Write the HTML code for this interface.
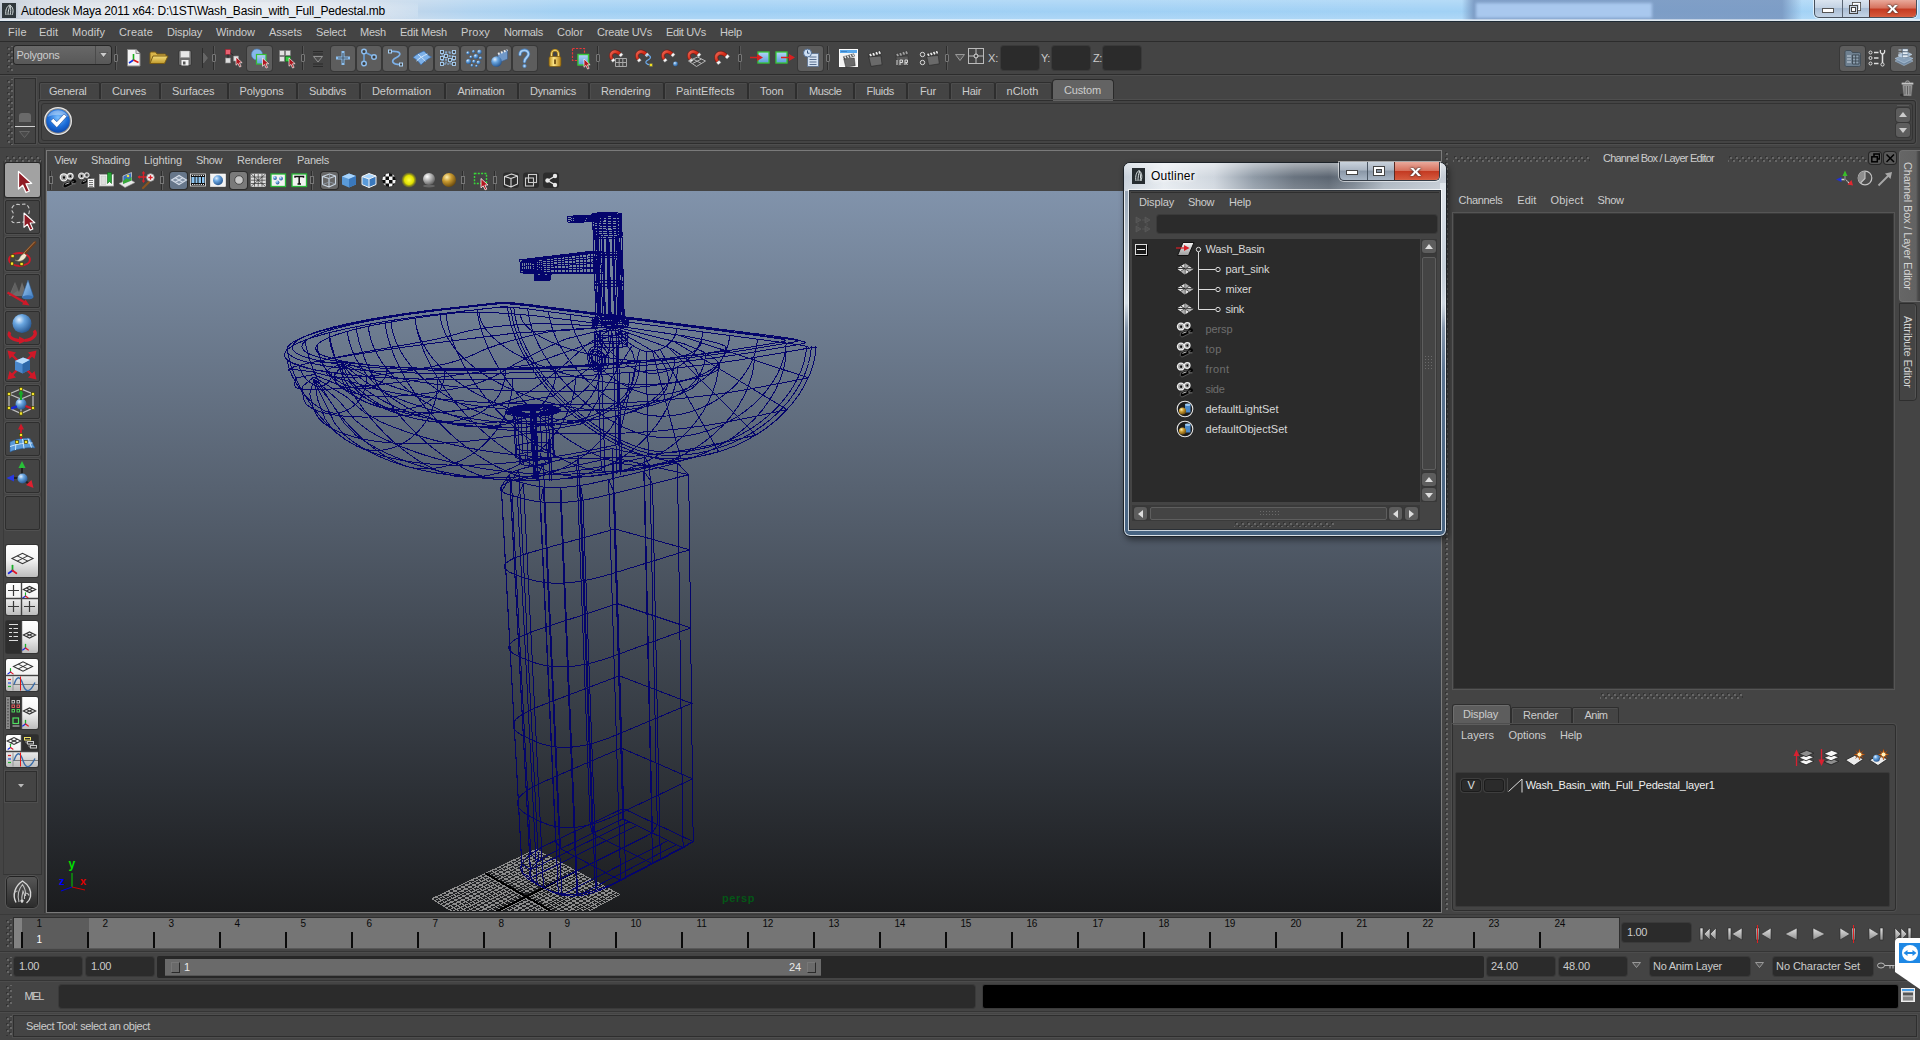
<!DOCTYPE html>
<html><head><meta charset="utf-8"><title>Autodesk Maya 2011</title>
<style>
html,body{margin:0;padding:0;background:#444;}
body{width:1920px;height:1040px;overflow:hidden;position:relative;font-family:"Liberation Sans",sans-serif;font-size:11px;}
#root{position:absolute;left:0;top:0;width:1920px;height:1040px;overflow:hidden;background:#444;}
#root div,#root span.t,#root svg{position:absolute;box-sizing:border-box;}
span.t{white-space:pre;}

.fr{border:1px solid #2e2e2e;box-shadow:0 0 0 1px #525252;}
.fld{background:#2b2b2b;border-radius:3px;box-shadow:0 0 0 1px #3a3a3a;}
.btn{background:#5d5d5d;border-radius:3px;box-shadow:0 0 0 1px #383838;}
.sep{width:2px;background:#2f2f2f;border-right:1px solid #5a5a5a;}
.grip{background-image:linear-gradient(180deg,#666 0 2px,transparent 2px 6px),linear-gradient(180deg,#666 0 2px,transparent 2px 6px),linear-gradient(180deg,#343434 0 2px,transparent 2px 6px),linear-gradient(180deg,#343434 0 2px,transparent 2px 6px);background-size:2px 6px,2px 6px,2px 6px,2px 6px;background-position:1px 2px,4px 5px,0px 1px,3px 4px;background-repeat:repeat-y;}
.griph{background-image:linear-gradient(90deg,#666 0 2px,transparent 2px 6px),linear-gradient(90deg,#666 0 2px,transparent 2px 6px),linear-gradient(90deg,#343434 0 2px,transparent 2px 6px),linear-gradient(90deg,#343434 0 2px,transparent 2px 6px);background-size:6px 2px,6px 2px,6px 2px,6px 2px;background-position:2px 1px,5px 4px,1px 0px,4px 3px;background-repeat:repeat-x;}

</style></head><body><div id="root">
<div style="left:0px;top:0px;width:1920px;height:21px;background:linear-gradient(90deg,#bcc6d2 0px,#ccd4de 40px,#d6dce4 130px,#d8dee6 250px,#d0dae6 330px,#c2d6ea 400px,#b0d3f0 470px,#a2d0f3 560px,#9fcff4 700px,#a1d1f5 1440px,#a4d3f6 1920px);"></div>
<div style="left:0px;top:0px;width:1920px;height:21px;background:linear-gradient(180deg,rgba(255,255,255,.22),rgba(255,255,255,0) 55%,rgba(255,255,255,.18));"></div>
<div style="left:18px;top:2px;width:400px;height:17px;background:radial-gradient(ellipse at center,rgba(255,255,255,.55) 0%,rgba(255,255,255,.35) 50%,rgba(255,255,255,0) 100%);"></div>
<div style="left:1462px;top:0px;width:340px;height:20px;background:linear-gradient(90deg,rgba(110,140,185,.0),rgba(118,148,190,.85) 12px,rgba(118,148,190,.85) 320px,rgba(118,148,190,0));"></div>
<div style="left:1476px;top:3px;width:176px;height:15px;background:#a9c8ee;filter:blur(1.5px);"></div>
<div style="left:0px;top:19px;width:1920px;height:1px;background:rgba(255,255,255,.5);"></div>
<div style="left:0px;top:20px;width:1920px;height:1px;background:#dfe8f0;"></div>
<div style="left:0px;top:21px;width:1920px;height:1px;background:#1e2a34;"></div>
<svg style="left:2px;top:3px;" width="14" height="15" viewBox="0 0 14 15"><rect width="14" height="15" fill="#30383c"/><path d="M4 12C3 7 5 3 8 2c3 2 4 6 2 10M6 12c0-4 1-7 2-9M8 12c1-3 1-6 0-9" stroke="#d8e0e0" stroke-width="1" fill="none"/></svg>
<span class="t" style="left:21px;top:5px;font-size:12px;line-height:12px;color:#000;letter-spacing:-0.192px;">Autodesk Maya 2011 x64: D:\1ST\Wash_Basin_with_Full_Pedestal.mb</span>
<div style="left:1814px;top:0px;width:103px;height:18px;border:1px solid #46505c;border-top:none;border-radius:0 0 5px 5px;background:linear-gradient(180deg,#dbe5f0 0,#c3d2e3 45%,#a9bdd4 50%,#c4d4e6 100%);box-shadow:0 0 0 1px rgba(255,255,255,.6);overflow:hidden;"><div style="left:54px;top:0;width:48px;height:18px;background:linear-gradient(180deg,#e9a99b 0,#d6715d 45%,#c43a22 50%,#d4583c 90%,#e08060 100%);border-left:1px solid #5a2a22;"></div><div style="left:27px;top:0;width:1px;height:18px;background:#5a6674;"></div></div>
<svg style="left:1822px;top:8px;" width="14" height="6" viewBox="0 0 14 6"><rect x="0.5" y="0.5" width="11" height="4" fill="#fff" stroke="#555" stroke-width="1"/></svg>
<svg style="left:1849px;top:2px;" width="14" height="13" viewBox="0 0 14 13"><rect x="3.5" y="0.5" width="8" height="8" fill="none" stroke="#444" stroke-width="1"/><rect x="4.5" y="1.5" width="6" height="6" fill="none" stroke="#fff" stroke-width="1.4"/><rect x="0.5" y="3.5" width="8" height="8" fill="#c8d4e2" stroke="#444" stroke-width="1"/><rect x="2.5" y="5.5" width="4" height="4" fill="#fff" stroke="#444" stroke-width="1"/></svg>
<span class="t" style="left:1887px;top:0px;font-size:15px;line-height:15px;color:#fff;font-weight:bold;text-shadow:0 0 1px #333,0 0 2px #333;transform:scaleX(1.35);transform-origin:left;">x</span>
<div style="left:0px;top:22px;width:1920px;height:20px;background:#444444;"></div>
<div style="left:0px;top:41px;width:1920px;height:1px;background:#2c2c2c;"></div>
<span class="t" style="left:8px;top:27px;font-size:11px;line-height:11px;color:#cccccc;letter-spacing:0.320px;">File</span>
<span class="t" style="left:39px;top:27px;font-size:11px;line-height:11px;color:#cccccc;letter-spacing:0.008px;">Edit</span>
<span class="t" style="left:72px;top:27px;font-size:11px;line-height:11px;color:#cccccc;letter-spacing:0.099px;">Modify</span>
<span class="t" style="left:119px;top:27px;font-size:11px;line-height:11px;color:#cccccc;letter-spacing:0.161px;">Create</span>
<span class="t" style="left:167px;top:27px;font-size:11px;line-height:11px;color:#cccccc;letter-spacing:-0.152px;">Display</span>
<span class="t" style="left:216px;top:27px;font-size:11px;line-height:11px;color:#cccccc;letter-spacing:-0.021px;">Window</span>
<span class="t" style="left:269px;top:27px;font-size:11px;line-height:11px;color:#cccccc;letter-spacing:-0.005px;">Assets</span>
<span class="t" style="left:316px;top:27px;font-size:11px;line-height:11px;color:#cccccc;letter-spacing:-0.099px;">Select</span>
<span class="t" style="left:360px;top:27px;font-size:11px;line-height:11px;color:#cccccc;letter-spacing:-0.227px;">Mesh</span>
<span class="t" style="left:400px;top:27px;font-size:11px;line-height:11px;color:#cccccc;letter-spacing:-0.215px;">Edit Mesh</span>
<span class="t" style="left:461px;top:27px;font-size:11px;line-height:11px;color:#cccccc;letter-spacing:0.175px;">Proxy</span>
<span class="t" style="left:504px;top:27px;font-size:11px;line-height:11px;color:#cccccc;letter-spacing:-0.277px;">Normals</span>
<span class="t" style="left:557px;top:27px;font-size:11px;line-height:11px;color:#cccccc;letter-spacing:-0.056px;">Color</span>
<span class="t" style="left:597px;top:27px;font-size:11px;line-height:11px;color:#cccccc;letter-spacing:-0.188px;">Create UVs</span>
<span class="t" style="left:666px;top:27px;font-size:11px;line-height:11px;color:#cccccc;letter-spacing:-0.352px;">Edit UVs</span>
<span class="t" style="left:720px;top:27px;font-size:11px;line-height:11px;color:#cccccc;letter-spacing:-0.156px;">Help</span>
<div style="left:0px;top:74px;width:1920px;height:1px;background:#2c2c2c;"></div>
<div style="left:0px;top:75px;width:1920px;height:1px;background:#4e4e4e;"></div>
<div class="grip" style="left:7px;top:46px;width:6px;height:26px;"></div>
<div style="left:14px;top:46px;width:97px;height:18px;border-radius:3px;background:linear-gradient(180deg,#686868 0,#585858 100%);box-shadow:0 0 0 1px #262626;"></div>
<div style="left:95px;top:46px;width:1px;height:18px;background:#4a4a4a;"></div>
<span class="t" style="left:16.5px;top:50px;font-size:11px;line-height:11px;color:#cccccc;letter-spacing:-0.285px;">Polygons</span>
<svg style="left:99px;top:52px;" width="9" height="6" viewBox="0 0 9 6"><path d="M0.5 0.5h8l-4 5z" fill="#ccc" stroke="#333" stroke-width=".6"/></svg>
<div style="left:115px;top:46px;width:2px;height:24px;background:#2d2d2d;border-right:1px solid #565656;"></div>
<div style="left:114px;top:54px;width:4px;height:8px;border:1px solid #777;background:#3a3a3a;border-radius:1px;"></div>
<div style="left:213px;top:46px;width:2px;height:24px;background:#2d2d2d;border-right:1px solid #565656;"></div>
<div style="left:212px;top:54px;width:4px;height:8px;border:1px solid #777;background:#3a3a3a;border-radius:1px;"></div>
<div style="left:302px;top:46px;width:2px;height:24px;background:#2d2d2d;border-right:1px solid #565656;"></div>
<div style="left:301px;top:54px;width:4px;height:8px;border:1px solid #777;background:#3a3a3a;border-radius:1px;"></div>
<div style="left:597px;top:46px;width:2px;height:24px;background:#2d2d2d;border-right:1px solid #565656;"></div>
<div style="left:596px;top:54px;width:4px;height:8px;border:1px solid #777;background:#3a3a3a;border-radius:1px;"></div>
<div style="left:739px;top:46px;width:2px;height:24px;background:#2d2d2d;border-right:1px solid #565656;"></div>
<div style="left:738px;top:54px;width:4px;height:8px;border:1px solid #777;background:#3a3a3a;border-radius:1px;"></div>
<div style="left:827px;top:46px;width:2px;height:24px;background:#2d2d2d;border-right:1px solid #565656;"></div>
<div style="left:826px;top:54px;width:4px;height:8px;border:1px solid #777;background:#3a3a3a;border-radius:1px;"></div>
<div style="left:946px;top:46px;width:2px;height:24px;background:#2d2d2d;border-right:1px solid #565656;"></div>
<div style="left:945px;top:54px;width:4px;height:8px;border:1px solid #777;background:#3a3a3a;border-radius:1px;"></div>
<svg width="0" height="0" style="left:0;top:0;"><defs>
<radialGradient id="gBall" cx=".35" cy=".3" r=".8"><stop offset="0" stop-color="#e2f0ff"/><stop offset=".35" stop-color="#6aa6e0"/><stop offset="1" stop-color="#1c4a84"/></radialGradient>
<radialGradient id="gGrayBall" cx=".35" cy=".3" r=".8"><stop offset="0" stop-color="#ffffff"/><stop offset=".4" stop-color="#b8b8b8"/><stop offset="1" stop-color="#505050"/></radialGradient>
<radialGradient id="gGoldBall" cx=".35" cy=".3" r=".8"><stop offset="0" stop-color="#fff0b0"/><stop offset=".4" stop-color="#c89a30"/><stop offset="1" stop-color="#5a3c08"/></radialGradient>
<radialGradient id="gYellowBall" cx=".5" cy=".5" r=".5"><stop offset="0" stop-color="#ffff40"/><stop offset=".6" stop-color="#e0e000"/><stop offset="1" stop-color="#8a8a10" stop-opacity=".3"/></radialGradient>
<linearGradient id="gRed" x1="0" y1="0" x2="1" y2="1"><stop offset="0" stop-color="#f47a68"/><stop offset=".5" stop-color="#d8301c"/><stop offset="1" stop-color="#9a140a"/></linearGradient>
<linearGradient id="gGold" x1="0" y1="0" x2="1" y2="0"><stop offset="0" stop-color="#b88a18"/><stop offset=".4" stop-color="#ffe88a"/><stop offset="1" stop-color="#b07c10"/></linearGradient>
<linearGradient id="gFolder" x1="0" y1="0" x2="0" y2="1"><stop offset="0" stop-color="#f4dc7a"/><stop offset="1" stop-color="#c09a2c"/></linearGradient>
<linearGradient id="gGray" x1="0" y1="0" x2="0" y2="1"><stop offset="0" stop-color="#f6f6f6"/><stop offset="1" stop-color="#9c9c9c"/></linearGradient>
<linearGradient id="gBlueSq" x1="0" y1="0" x2="0" y2="1"><stop offset="0" stop-color="#b4d6f6"/><stop offset="1" stop-color="#5c9cdc"/></linearGradient>
<linearGradient id="gBlueCube" x1="0" y1="0" x2="1" y2="1"><stop offset="0" stop-color="#a8d0f6"/><stop offset="1" stop-color="#3e7cc0"/></linearGradient>
<linearGradient id="gPlay" x1="0" y1="0" x2="0" y2="1"><stop offset="0" stop-color="#e8e8e8"/><stop offset="1" stop-color="#8a8a8a"/></linearGradient>
<radialGradient id="gCheck" cx=".5" cy=".35" r=".75"><stop offset="0" stop-color="#7cc0ff"/><stop offset=".55" stop-color="#1a6cd8"/><stop offset="1" stop-color="#0a3a9a"/></radialGradient>
</defs></svg>
<svg style="left:126px;top:48px;overflow:visible;" width="16" height="20" viewBox="0 0 16 20"><path d="M1.500 1.500h8.500l4 4v12.500h-12.500z" fill="#f4f4f4" stroke="#8a8a8a"/><path d="M10 1.500v4h4" fill="#ddd" stroke="#8a8a8a"/><path d="M7.500 12V6" stroke="#18b018" stroke-width="1.600"/><path d="M7.500 12l-4.500 3" stroke="#1030e0" stroke-width="1.600"/><path d="M7.500 12l5 2.500" stroke="#e01818" stroke-width="1.600"/></svg>
<svg style="left:149px;top:49px;overflow:visible;" width="20" height="16" viewBox="0 0 20 16"><path d="M1 14.500V4.500c0-1 .5-1.500 1.500-1.500h4l1.500 2h7.500c1 0 1.500.5 1.500 1.500V8" fill="#d8b44a" stroke="#7a5c14"/><path d="M1 14.500l3-7.500h15l-3.500 7.500z" fill="url(#gFolder)" stroke="#7a5c14" stroke-linejoin="round"/></svg>
<svg style="left:177px;top:49px;overflow:visible;" width="16" height="18" viewBox="0 0 16 18"><rect x="1.500" y="1.500" width="13" height="15" rx="1.500" fill="#6e6e6e" stroke="#3a3a3a"/><rect x="3.500" y="2" width="9" height="6.500" fill="#e8e8e8" stroke="#999" stroke-width=".5"/><rect x="4.500" y="11" width="7" height="5.500" fill="#f2f2f2"/><rect x="6" y="12.500" width="2.500" height="3" fill="#555"/></svg>
<svg style="left:202px;top:48px;" width="6" height="20" viewBox="0 0 6 20"><path d="M0.5 0v20" stroke="#2d2d2d"/><path d="M1.5 5l4 5-4 5z" fill="#666" stroke="#777" stroke-width=".5"/></svg>
<svg style="left:224px;top:48px;overflow:visible;" width="20" height="20" viewBox="0 0 20 20"><rect x="1.500" y="1.500" width="5" height="5" fill="#e86070" stroke="#a02030" stroke-width=".6"/><rect x="1.500" y="10" width="5" height="5" fill="#ddd" stroke="#888" stroke-width=".6"/><path d="M4 6.500v3.500M6.500 5l5 4" stroke="#222" stroke-width=".8" fill="none"/><rect x="9.500" y="8" width="5" height="5" fill="#ddd" stroke="#888" stroke-width=".6"/><g transform="translate(12,9) scale(0.75)"><path d="M0 0l0 11 2.600-2.400 2.200 4.800 2-.9-2.200-4.700 3.600-.2z" fill="#b01820" stroke="#fff" stroke-width=".9" stroke-linejoin="round"/></g></svg>
<div class="btn" style="left:247px;top:46px;width:25px;height:25px;"></div>
<svg style="left:250px;top:48px;overflow:visible;" width="20" height="20" viewBox="0 0 20 20"><circle cx="7" cy="6.500" r="5.500" fill="#86b8ec" stroke="#4a80c0" stroke-width=".6"/><rect x="6.500" y="6.500" width="9.500" height="9.500" fill="url(#gBlueSq)" stroke="#38c038" stroke-width="1.200"/><g transform="translate(12.5,10) scale(0.75)"><path d="M0 0l0 11 2.600-2.400 2.200 4.800 2-.9-2.200-4.700 3.600-.2z" fill="#b01820" stroke="#fff" stroke-width=".9" stroke-linejoin="round"/></g></svg>
<svg style="left:278px;top:49px;overflow:visible;" width="20" height="20" viewBox="0 0 20 20"><g fill="#e0e0e0" stroke="#777" stroke-width=".6"><rect x="1.500" y="1.500" width="5" height="5"/><rect x="7.500" y="1.500" width="5" height="5"/><rect x="1.500" y="7.500" width="5" height="5"/></g><rect x="7.500" y="7.500" width="5" height="5" fill="#30c840" stroke="#187020" stroke-width=".6"/><g transform="translate(11,9) scale(0.75)"><path d="M0 0l0 11 2.600-2.400 2.200 4.800 2-.9-2.200-4.700 3.600-.2z" fill="#b01820" stroke="#fff" stroke-width=".9" stroke-linejoin="round"/></g></svg>
<svg style="left:312px;top:50px;overflow:visible;" width="12" height="18" viewBox="0 0 12 18"><path d="M1 1.500h10M1 4h10M1 14h10M1 16.500h10" stroke="#2a2a2a" stroke-width="1"/><path d="M1.500 6.500h9l-4.500 5.500z" fill="#4a4a4a" stroke="#9a9a9a" stroke-width=".9"/></svg>
<div class="btn" style="left:331px;top:46px;width:24px;height:25px;"></div>
<div class="btn" style="left:357px;top:46px;width:24px;height:25px;"></div>
<div class="btn" style="left:383px;top:46px;width:24px;height:25px;"></div>
<div class="btn" style="left:409px;top:46px;width:24px;height:25px;"></div>
<div class="btn" style="left:435px;top:46px;width:24px;height:25px;"></div>
<div class="btn" style="left:461px;top:46px;width:24px;height:25px;"></div>
<div class="btn" style="left:487px;top:46px;width:24px;height:25px;"></div>
<div class="btn" style="left:513px;top:46px;width:24px;height:25px;"></div>
<svg style="left:336px;top:51px;overflow:visible;" width="14" height="14" viewBox="0 0 14 14"><path d="M7 1.500v11M1.500 7h11" stroke="#8cc0f0" stroke-width="3" stroke-linecap="square"/><path d="M7 2v10M2 7h10" stroke="#4a5a6a" stroke-width="1.200"/></svg>
<svg style="left:360px;top:48px;overflow:visible;" width="18" height="20" viewBox="0 0 18 20"><path d="M4 4.500v10M4.500 4l9 4.500" stroke="#6aa0d8" stroke-width="1.600" fill="none"/><g fill="#3c3c3c" stroke="#8cbcec" stroke-width="1.500"><circle cx="4" cy="3.500" r="2.300"/><circle cx="4" cy="15.500" r="2.300"/><circle cx="14" cy="9" r="2.300"/></g></svg>
<svg style="left:386px;top:48px;overflow:visible;" width="18" height="20" viewBox="0 0 18 20"><path d="M4.500 3.500c10-1 12 3 6 6s-5 7 4 7" stroke="#7cb0e8" stroke-width="1.700" fill="none"/><g fill="#444" stroke="#a8d0f4" stroke-width="1"><rect x="2.500" y="2" width="3" height="3"/><rect x="13.500" y="15" width="3" height="3"/></g></svg>
<svg style="left:412px;top:50px;overflow:visible;" width="20" height="16" viewBox="0 0 20 16"><path d="M1 7.500c3-3 7-5 11-6.500 2 2.500 5 5 7.500 6-3 1.500-8 5-10.500 8-2-3-5-6-8-7.500z" fill="#7cb0e8" stroke="#3a6ca8" stroke-width=".7"/><path d="M6 4.200c2.500 2 5.500 5 7.500 7M4.500 11c3-3 7-5.500 11-7" stroke="#d0e6fc" stroke-width="1" fill="none"/></svg>
<svg style="left:439px;top:49px;overflow:visible;" width="18" height="18" viewBox="0 0 18 18"><g stroke="#8cbcec" stroke-width="1" fill="none"><path d="M3 3h12v12H3zM7 3v12M11 3v12M3 7h12M3 11h12" stroke-dasharray="2 1.200"/></g><g fill="#444" stroke="#a8d0f4" stroke-width=".9"><rect x="1.500" y="1.500" width="3" height="3"/><rect x="13.500" y="1.500" width="3" height="3"/><rect x="1.500" y="13.500" width="3" height="3"/><rect x="13.500" y="13.500" width="3" height="3"/><rect x="5.500" y="5.500" width="3" height="3"/><rect x="9.500" y="9.500" width="3" height="3"/><rect x="1.500" y="7.500" width="3" height="3"/><rect x="13.500" y="7.500" width="3" height="3"/></g></svg>
<svg style="left:464px;top:48px;overflow:visible;" width="20" height="20" viewBox="0 0 20 20"><g fill="url(#gBall)"><circle cx="4" cy="5" r="1.800"/><circle cx="9.500" cy="3.500" r="1.500"/><circle cx="15.500" cy="4" r="2.300"/><circle cx="7" cy="9" r="1.600"/><circle cx="12" cy="8.500" r="2.500"/><circle cx="16.500" cy="10" r="1.600"/><circle cx="4.500" cy="13.500" r="2.600"/><circle cx="10" cy="13.500" r="1.800"/><circle cx="14.500" cy="14.500" r="2"/><circle cx="8" cy="17.500" r="1.400"/><circle cx="12.500" cy="18" r="1.300"/></g></svg>
<svg style="left:490px;top:48px;overflow:visible;" width="20" height="20" viewBox="0 0 20 20"><path d="M8 6l9.500-4v9l-9.500 4z" fill="#7098c8" stroke="#3c5c8c" stroke-width=".6"/><path d="M8 6l9.500-4" stroke="#e8e8e8" stroke-width="2.200" stroke-dasharray="1.800 1.400"/><circle cx="6.500" cy="13.500" r="5.300" fill="url(#gBall)"/></svg>
<svg style="left:518px;top:49px;overflow:visible;" width="12" height="20" viewBox="0 0 12 20"><path d="M2 5.500c0-5.500 8.500-5.500 8.500-.5 0 3.500-4 3.500-4 7.500" stroke="#4a7eb8" stroke-width="3.400" fill="none" stroke-linecap="round"/><path d="M2 5.500c0-5.500 8.500-5.500 8.500-.5 0 3.500-4 3.500-4 7.500" stroke="#a8d0f6" stroke-width="1.800" fill="none" stroke-linecap="round"/><circle cx="6.500" cy="17" r="1.700" fill="#a8d0f6" stroke="#4a7eb8" stroke-width=".8"/></svg>
<svg style="left:548px;top:48px;overflow:visible;" width="14" height="20" viewBox="0 0 14 20"><path d="M3.500 9V6c0-5 7-5 7 0v3" stroke="#b88c1c" stroke-width="2.600" fill="none"/><path d="M3.500 9V6c0-5 7-5 7 0v3" stroke="#f4dc80" stroke-width="1" fill="none"/><rect x="1" y="8.500" width="12" height="10" rx="1.500" fill="url(#gGold)" stroke="#7a5810" stroke-width=".7"/><path d="M7 12v3.500" stroke="#5a3c08" stroke-width="1.600" stroke-linecap="round"/></svg>
<svg style="left:571px;top:47px;overflow:visible;" width="20" height="22" viewBox="0 0 20 22"><rect x="1.500" y="1.500" width="12" height="12" fill="none" stroke="#e83838" stroke-width="1.200" stroke-dasharray="2.200 1.300"/><rect x="7" y="7.500" width="10.500" height="10.500" fill="url(#gBlueSq)" stroke="#38c838" stroke-width="1.400"/><g transform="translate(13,12) scale(0.75)"><path d="M0 0l0 11 2.600-2.400 2.200 4.800 2-.9-2.200-4.700 3.600-.2z" fill="#b01820" stroke="#fff" stroke-width=".9" stroke-linejoin="round"/></g></svg>
<svg style="left:608px;top:48px;overflow:visible;" width="20" height="20" viewBox="0 0 20 20"><g transform="rotate(-8 8 8)"><path d="M2.500 11.500C-1.500 4 7-2.500 13.500 5.500l-2.600 2.200C7 3 2.500 6 5.300 10z" fill="url(#gRed)" stroke="#6a100a" stroke-width=".5"/><path d="M10.900 7.700l2.600-2.200 1.700 2-2.600 2.200zM5.300 10l-2.800 1.500 1.400 2.300 2.800-1.600z" fill="#f8f8f8" stroke="#888" stroke-width=".4"/></g><path d="M7.500 10.500h11v8h-11zM11.200 10.500v8M14.800 10.500v8M7.500 14.500h11" stroke="#a8a8a8" stroke-width="1" fill="none"/></svg>
<svg style="left:634px;top:48px;overflow:visible;" width="20" height="20" viewBox="0 0 20 20"><g transform="rotate(-8 8 8)"><path d="M2.500 11.500C-1.500 4 7-2.500 13.500 5.500l-2.600 2.200C7 3 2.500 6 5.300 10z" fill="url(#gRed)" stroke="#6a100a" stroke-width=".5"/><path d="M10.900 7.700l2.600-2.200 1.700 2-2.600 2.200zM5.300 10l-2.800 1.500 1.400 2.300 2.800-1.600z" fill="#f8f8f8" stroke="#888" stroke-width=".4"/></g><path d="M12 7c5 0 6 3 2 5s-2 4.500 3 5" stroke="#6aa8e8" stroke-width="1.200" fill="none"/><rect x="15.500" y="15.500" width="3" height="3" fill="#f0e020" stroke="#555" stroke-width=".5"/></svg>
<svg style="left:660px;top:48px;overflow:visible;" width="20" height="20" viewBox="0 0 20 20"><g transform="rotate(-8 8 8)"><path d="M2.500 11.500C-1.500 4 7-2.500 13.500 5.500l-2.600 2.200C7 3 2.500 6 5.300 10z" fill="url(#gRed)" stroke="#6a100a" stroke-width=".5"/><path d="M10.900 7.700l2.600-2.200 1.700 2-2.600 2.200zM5.300 10l-2.800 1.500 1.400 2.300 2.800-1.600z" fill="#f8f8f8" stroke="#888" stroke-width=".4"/></g><circle cx="15.500" cy="16" r="2.400" fill="url(#gBall)"/></svg>
<svg style="left:686px;top:48px;overflow:visible;" width="20" height="20" viewBox="0 0 20 20"><g transform="rotate(-8 8 8)"><path d="M2.500 11.500C-1.500 4 7-2.500 13.500 5.500l-2.600 2.200C7 3 2.500 6 5.300 10z" fill="url(#gRed)" stroke="#6a100a" stroke-width=".5"/><path d="M10.900 7.700l2.600-2.200 1.700 2-2.600 2.200zM5.300 10l-2.800 1.500 1.400 2.300 2.800-1.600z" fill="#f8f8f8" stroke="#888" stroke-width=".4"/></g><path d="M2.500 13l9-4 8 4-9 5.500zM7 11l8.500 4.500M6.500 15.500l9-4.500" stroke="#b4b4b4" stroke-width="1" fill="none"/></svg>
<svg style="left:712px;top:48px;overflow:visible;" width="20" height="20" viewBox="0 0 20 20"><g transform="translate(1,1) scale(1.100)"><g transform="rotate(-8 8 8)"><path d="M2.500 11.500C-1.500 4 7-2.500 13.500 5.500l-2.600 2.200C7 3 2.500 6 5.300 10z" fill="url(#gRed)" stroke="#6a100a" stroke-width=".5"/><path d="M10.900 7.700l2.600-2.200 1.700 2-2.600 2.200zM5.300 10l-2.800 1.500 1.400 2.300 2.800-1.600z" fill="#f8f8f8" stroke="#888" stroke-width=".4"/></g></g></svg>
<svg style="left:750px;top:51px;overflow:visible;" width="20" height="14" viewBox="0 0 20 14"><rect x="8" y="1" width="11" height="11" fill="url(#gBlueSq)" stroke="#38c838" stroke-width="1.300"/><path d="M0 6.500h8" stroke="#d82020" stroke-width="1.500"/><path d="M7 3l6 3.500-6 3.500z" fill="#d82020"/></svg>
<svg style="left:775px;top:51px;overflow:visible;" width="21" height="14" viewBox="0 0 21 14"><rect x="1" y="1" width="11" height="11" fill="url(#gBlueSq)" stroke="#38c838" stroke-width="1.300"/><path d="M6 6.500h9" stroke="#d82020" stroke-width="1.500"/><path d="M14 3l6 3.500-6 3.500z" fill="#d82020"/></svg>
<div class="btn" style="left:798px;top:46px;width:25px;height:25px;"></div>
<svg style="left:802px;top:48px;overflow:visible;" width="18" height="20" viewBox="0 0 18 20"><rect x="5.500" y="5.500" width="11" height="13" fill="#d4e2f2" stroke="#5a7090" stroke-width=".8"/><path d="M7.500 9h7M7.500 11.500h7M7.500 14h7M7.500 16.500h7" stroke="#5a7090" stroke-width="1"/><circle cx="5.500" cy="5" r="4" fill="#cfe0f4" stroke="#4a6890" stroke-width=".9"/><path d="M5.500 2.500v2.700h2" stroke="#2a4870" stroke-width=".9" fill="none"/></svg>
<svg style="left:839px;top:49px;overflow:visible;" width="19" height="18" viewBox="0 0 19 18"><rect x=".5" y=".5" width="18" height="17" fill="#f4f4f4" stroke="#fff"/><rect x="1" y="1" width="17" height="3" fill="#58a8ec"/><path d="M2.500 2.500h1M4.500 2.500h1M6.500 2.500h1" stroke="#1a4a8a" stroke-width=".8"/><g transform="translate(1.500,.5) scale(.95)"><path d="M3 7.500l11-3 .8 2.500-11 3z" fill="#555" stroke="#222" stroke-width=".4"/><path d="M4.500 7.200l1.200 2.300M7.300 6.400l1.200 2.300M10.100 5.600l1.200 2.300M12.800 4.900l1 2.300" stroke="#f0f0f0" stroke-width="1.400"/><path d="M3.500 10l11-1 1 8-10 1.500z" fill="#6a6a6a" stroke="#222" stroke-width=".5"/></g></svg>
<svg style="left:866px;top:48px;overflow:visible;" width="18" height="20" viewBox="0 0 18 20"><g transform="translate(-1,-2) scale(1.100)"><path d="M3 7.500l11-3 .8 2.500-11 3z" fill="#555" stroke="#222" stroke-width=".4"/><path d="M4.500 7.200l1.200 2.300M7.300 6.400l1.200 2.300M10.100 5.600l1.200 2.300M12.800 4.900l1 2.300" stroke="#f0f0f0" stroke-width="1.400"/><path d="M3.500 10l11-1 1 8-10 1.500z" fill="#6a6a6a" stroke="#222" stroke-width=".5"/></g></svg>
<svg style="left:893px;top:48px;overflow:visible;" width="18" height="20" viewBox="0 0 18 20"><g opacity=".55" transform="translate(-1,-2) scale(1.100)"><path d="M3 7.500l11-3 .8 2.500-11 3z" fill="#555" stroke="#222" stroke-width=".4"/><path d="M4.500 7.200l1.200 2.300M7.300 6.400l1.200 2.300M10.100 5.600l1.200 2.300M12.800 4.900l1 2.300" stroke="#f0f0f0" stroke-width="1.400"/><path d="M3.500 10l11-1 1 8-10 1.500z" fill="#6a6a6a" stroke="#222" stroke-width=".5"/></g><path d="M4 17v-5M7 17v-5h2.500v2.500h-2.500M12 17v-5h2.500v2.500h-2l2 2.500" stroke="#d8d8d8" stroke-width="1" fill="none"/></svg>
<svg style="left:919px;top:48px;overflow:visible;" width="22" height="20" viewBox="0 0 22 20"><circle cx="3.500" cy="6.500" r="2.200" fill="#444" stroke="#ddd" stroke-width="1"/><circle cx="3.500" cy="14.500" r="2.200" fill="#444" stroke="#ddd" stroke-width="1"/><g transform="translate(4,-2) scale(1.050)"><path d="M3 7.500l11-3 .8 2.500-11 3z" fill="#555" stroke="#222" stroke-width=".4"/><path d="M4.500 7.200l1.200 2.300M7.300 6.400l1.200 2.300M10.100 5.600l1.200 2.300M12.800 4.900l1 2.300" stroke="#f0f0f0" stroke-width="1.400"/><path d="M3.500 10l11-1 1 8-10 1.500z" fill="#6a6a6a" stroke="#222" stroke-width=".5"/></g></svg>
<svg style="left:955px;top:54px;" width="11" height="8" viewBox="0 0 11 8"><path d="M0.5 0.5h9l-4.5 6z" fill="#555" stroke="#999" stroke-width="1"/></svg>
<svg style="left:968px;top:48px;" width="16" height="17" viewBox="0 0 16 17"><rect x="0.5" y="0.5" width="15" height="15" fill="none" stroke="#bbb"/><path d="M8 0v16M0 8h16" stroke="#bbb"/><circle cx="8" cy="8" r="2" fill="#444" stroke="#ddd"/></svg>
<span class="t" style="left:988px;top:53px;font-size:11px;line-height:11px;color:#cccccc;letter-spacing:-0.203px;">X:</span>
<span class="t" style="left:1041px;top:53px;font-size:11px;line-height:11px;color:#cccccc;letter-spacing:-0.398px;">Y:</span>
<span class="t" style="left:1093px;top:53px;font-size:11px;line-height:11px;color:#cccccc;letter-spacing:-0.391px;">Z:</span>
<div class="fld" style="left:1001px;top:46px;width:38px;height:24px;"></div>
<div class="fld" style="left:1052px;top:46px;width:38px;height:24px;"></div>
<div class="fld" style="left:1103px;top:46px;width:38px;height:24px;"></div>
<div class="btn" style="left:1840px;top:46px;width:25px;height:25px;"></div>
<svg style="left:1844px;top:49px;overflow:visible;" width="17" height="18" viewBox="0 0 17 18"><path d="M1 3.500c0-1.500.5-2 2-2h4l1.500 2h6c1.500 0 2 .5 2 2v10c0 1.500-.5 2-2 2h-11.500c-1.500 0-2-.5-2-2z" fill="#6e8090" stroke="#3a4650" stroke-width=".8"/><path d="M3 7h4M3 10h4M3 13h4" stroke="#c8d4e0" stroke-width="1"/><path d="M8.500 6h6.500v9h-6.500zM8.500 9h6.500M8.500 12h6.500M11.700 6v9" stroke="#3a4650" stroke-width=".9" fill="#8ea0b0"/></svg>
<svg style="left:1868px;top:49px;overflow:visible;" width="18" height="18" viewBox="0 0 18 18"><g fill="#444" stroke="#e0e0e0" stroke-width="1"><circle cx="2.500" cy="3.500" r="1.500"/><circle cx="2.500" cy="9" r="1.500"/><circle cx="2.500" cy="14.500" r="1.500"/></g><path d="M6 3.500h4.500M6 9h4.500M6 14.500h4.500" stroke="#e0e0e0" stroke-width="1.300"/><path d="M14.500 5v9" stroke="#e0e0e0" stroke-width="1.500"/><path d="M12.500 1c-.5 2 0 3.500 2 4 2-.5 2.500-2 2-4" stroke="#e0e0e0" stroke-width="1.300" fill="none"/><circle cx="14.500" cy="15.500" r="1.600" fill="#444" stroke="#e0e0e0" stroke-width="1"/></svg>
<div class="btn" style="left:1891px;top:46px;width:25px;height:25px;"></div>
<svg style="left:1894px;top:48px;overflow:visible;" width="20" height="20" viewBox="0 0 20 20"><path d="M1 13l9-4 9 4-9 4.500z" fill="#7088a0" stroke="#a8bcd0" stroke-width=".6"/><path d="M1 10.500l9-4 9 4-9 4.500z" fill="#88a0b8" stroke="#b8cce0" stroke-width=".6"/><path d="M4 7l8-3.500 6 3-8 3.500z" fill="#a8c0d8" stroke="#c8d8e8" stroke-width=".6"/><g fill="#e4ecf4" stroke="#5a7088" stroke-width=".5"><rect x="8.500" y="1" width="5.500" height="2.300"/><rect x="8.500" y="4" width="5.500" height="2.300"/><rect x="8.500" y="7" width="5.500" height="2.300"/></g><path d="M4.500 2h3M4.500 5h3M4.500 8h3" stroke="#c8d8e8" stroke-width="1"/></svg>
<div class="grip" style="left:7px;top:79px;width:6px;height:66px;"></div>
<div style="left:14px;top:78px;width:22px;height:66px;border:1px solid #2e2e2e;box-shadow:0 0 0 1px #4e4e4e;"></div>
<div style="left:19px;top:113px;width:12px;height:9px;background:#6a6a6a;border-radius:3px 3px 0 0;"></div>
<div style="left:15px;top:126px;width:20px;height:1px;background:#cfcfcf;"></div>
<svg style="left:19px;top:131px;" width="12" height="8" viewBox="0 0 12 8"><path d="M0.5 0.5h10l-5 6z" fill="#4a4a4a" stroke="#666" stroke-width="1"/></svg>
<div style="left:39px;top:82px;width:61px;height:18px;border:1px solid #2e2e2e;border-bottom:none;border-radius:2px 2px 0 0;background:#444;box-shadow:inset 1px 1px 0 #4d4d4d;"></div>
<span class="t" style="left:49px;top:86px;font-size:11px;line-height:11px;color:#cccccc;letter-spacing:-0.237px;">General</span>
<div style="left:100px;top:82px;width:60px;height:18px;border:1px solid #2e2e2e;border-bottom:none;border-radius:2px 2px 0 0;background:#444;box-shadow:inset 1px 1px 0 #4d4d4d;"></div>
<span class="t" style="left:112px;top:86px;font-size:11px;line-height:11px;color:#cccccc;letter-spacing:-0.141px;">Curves</span>
<div style="left:160px;top:82px;width:68px;height:18px;border:1px solid #2e2e2e;border-bottom:none;border-radius:2px 2px 0 0;background:#444;box-shadow:inset 1px 1px 0 #4d4d4d;"></div>
<span class="t" style="left:172px;top:86px;font-size:11px;line-height:11px;color:#cccccc;letter-spacing:-0.117px;">Surfaces</span>
<div style="left:228px;top:82px;width:69px;height:18px;border:1px solid #2e2e2e;border-bottom:none;border-radius:2px 2px 0 0;background:#444;box-shadow:inset 1px 1px 0 #4d4d4d;"></div>
<span class="t" style="left:239.5px;top:86px;font-size:11px;line-height:11px;color:#cccccc;letter-spacing:-0.160px;">Polygons</span>
<div style="left:297px;top:82px;width:63px;height:18px;border:1px solid #2e2e2e;border-bottom:none;border-radius:2px 2px 0 0;background:#444;box-shadow:inset 1px 1px 0 #4d4d4d;"></div>
<span class="t" style="left:309px;top:86px;font-size:11px;line-height:11px;color:#cccccc;letter-spacing:-0.308px;">Subdivs</span>
<div style="left:360px;top:82px;width:85px;height:18px;border:1px solid #2e2e2e;border-bottom:none;border-radius:2px 2px 0 0;background:#444;box-shadow:inset 1px 1px 0 #4d4d4d;"></div>
<span class="t" style="left:372px;top:86px;font-size:11px;line-height:11px;color:#cccccc;letter-spacing:-0.085px;">Deformation</span>
<div style="left:445px;top:82px;width:73px;height:18px;border:1px solid #2e2e2e;border-bottom:none;border-radius:2px 2px 0 0;background:#444;box-shadow:inset 1px 1px 0 #4d4d4d;"></div>
<span class="t" style="left:457.5px;top:86px;font-size:11px;line-height:11px;color:#cccccc;letter-spacing:-0.215px;">Animation</span>
<div style="left:518px;top:82px;width:71px;height:18px;border:1px solid #2e2e2e;border-bottom:none;border-radius:2px 2px 0 0;background:#444;box-shadow:inset 1px 1px 0 #4d4d4d;"></div>
<span class="t" style="left:530px;top:86px;font-size:11px;line-height:11px;color:#cccccc;letter-spacing:-0.285px;">Dynamics</span>
<div style="left:589px;top:82px;width:75px;height:18px;border:1px solid #2e2e2e;border-bottom:none;border-radius:2px 2px 0 0;background:#444;box-shadow:inset 1px 1px 0 #4d4d4d;"></div>
<span class="t" style="left:601px;top:86px;font-size:11px;line-height:11px;color:#cccccc;letter-spacing:-0.142px;">Rendering</span>
<div style="left:664px;top:82px;width:84px;height:18px;border:1px solid #2e2e2e;border-bottom:none;border-radius:2px 2px 0 0;background:#444;box-shadow:inset 1px 1px 0 #4d4d4d;"></div>
<span class="t" style="left:676px;top:86px;font-size:11px;line-height:11px;color:#cccccc;letter-spacing:-0.004px;">PaintEffects</span>
<div style="left:748px;top:82px;width:48px;height:18px;border:1px solid #2e2e2e;border-bottom:none;border-radius:2px 2px 0 0;background:#444;box-shadow:inset 1px 1px 0 #4d4d4d;"></div>
<span class="t" style="left:760px;top:86px;font-size:11px;line-height:11px;color:#cccccc;letter-spacing:-0.094px;">Toon</span>
<div style="left:796px;top:82px;width:58px;height:18px;border:1px solid #2e2e2e;border-bottom:none;border-radius:2px 2px 0 0;background:#444;box-shadow:inset 1px 1px 0 #4d4d4d;"></div>
<span class="t" style="left:809px;top:86px;font-size:11px;line-height:11px;color:#cccccc;letter-spacing:-0.391px;">Muscle</span>
<div style="left:854px;top:82px;width:53px;height:18px;border:1px solid #2e2e2e;border-bottom:none;border-radius:2px 2px 0 0;background:#444;box-shadow:inset 1px 1px 0 #4d4d4d;"></div>
<span class="t" style="left:866.5px;top:86px;font-size:11px;line-height:11px;color:#cccccc;letter-spacing:-0.307px;">Fluids</span>
<div style="left:907px;top:82px;width:43px;height:18px;border:1px solid #2e2e2e;border-bottom:none;border-radius:2px 2px 0 0;background:#444;box-shadow:inset 1px 1px 0 #4d4d4d;"></div>
<span class="t" style="left:920px;top:86px;font-size:11px;line-height:11px;color:#cccccc;letter-spacing:-0.167px;">Fur</span>
<div style="left:950px;top:82px;width:45px;height:18px;border:1px solid #2e2e2e;border-bottom:none;border-radius:2px 2px 0 0;background:#444;box-shadow:inset 1px 1px 0 #4d4d4d;"></div>
<span class="t" style="left:962px;top:86px;font-size:11px;line-height:11px;color:#cccccc;letter-spacing:-0.289px;">Hair</span>
<div style="left:995px;top:82px;width:57px;height:18px;border:1px solid #2e2e2e;border-bottom:none;border-radius:2px 2px 0 0;background:#444;box-shadow:inset 1px 1px 0 #4d4d4d;"></div>
<span class="t" style="left:1006.5px;top:86px;font-size:11px;line-height:11px;color:#cccccc;letter-spacing:0.031px;">nCloth</span>
<div style="left:1052px;top:79px;width:62px;height:22px;border:1px solid #2a2a2a;border-bottom:none;border-radius:4px 4px 0 0;background:#636363;"></div>
<span class="t" style="left:1064px;top:85px;font-size:11px;line-height:11px;color:#cccccc;letter-spacing:-0.151px;">Custom</span>
<div style="left:38px;top:100px;width:1878px;height:44px;border:1px solid #2e2e2e;border-radius:3px;box-shadow:0 0 0 1px #4e4e4e;"></div>
<div style="left:41px;top:103px;width:1872px;height:38px;border:1px solid #333;border-radius:3px;"></div>
<div style="left:1053px;top:100px;width:60px;height:1px;background:#636363;"></div>
<svg style="left:43px;top:106px;overflow:visible;" width="30" height="30" viewBox="0 0 30 30"><circle cx="15" cy="15.500" r="14.500" fill="#2a2a2a" opacity=".5"/><circle cx="15" cy="15" r="14" fill="#e8e8e8"/><circle cx="15" cy="15" r="12.800" fill="#8a8a8a"/><circle cx="15" cy="15" r="11.800" fill="url(#gCheck)"/><path d="M4.500 11a11.500 11.500 0 0 1 21 0c-6-3-15-3-21 0z" fill="#fff" opacity=".35"/><path d="M7.500 15l2.800-2.600 3.500 3.400 7.200-7.800 2.800 2.600-10 11z" fill="#fff" stroke="#0a3a8a" stroke-width=".5"/></svg>
<svg style="left:1900px;top:80px;overflow:visible;" width="14" height="17" viewBox="0 0 14 17"><ellipse cx="5" cy="15" rx="5" ry="1.800" fill="#222" opacity=".6"/><path d="M2.500 4.500h10l-1 11.500h-8z" fill="#9a9a9a" stroke="#555" stroke-width=".6"/><path d="M5 6v8.500M7.500 6v8.500M10 6v8.500" stroke="#5a5a5a" stroke-width=".9"/><rect x="1.500" y="2.500" width="12" height="2.200" rx="1" fill="#c4c4c4" stroke="#666" stroke-width=".5"/><path d="M5.500 2.500c0-2 4-2 4 0" stroke="#bbb" fill="none" stroke-width="1"/></svg>
<div class="btn" style="left:1896px;top:108px;width:14px;height:14px;"></div>
<div class="btn" style="left:1896px;top:123px;width:14px;height:14px;"></div>
<svg style="left:1899px;top:112px;" width="8" height="6" viewBox="0 0 8 6"><path d="M0 5h8l-4-5z" fill="#ccc"/></svg>
<svg style="left:1899px;top:128px;" width="8" height="6" viewBox="0 0 8 6"><path d="M0 0h8l-4 5z" fill="#ccc"/></svg>
<div style="left:1897px;top:105px;width:12px;height:1px;background:#5a5a5a;"></div>
<div style="left:0px;top:147px;width:1920px;height:1px;background:#3a3a3a;"></div>
<div class="griph" style="left:5px;top:156px;width:36px;height:6px;"></div>
<div style="left:3px;top:161px;width:39px;height:714px;border-right:1px solid #353535;border-left:1px solid #3a3a3a;border-bottom:1px solid #353535;"></div>
<div style="left:5px;top:163px;width:35px;height:34px;background:#a2a2a2;border-radius:2px;box-shadow:0 0 0 1px #262626;"></div>
<div style="left:5px;top:200px;width:35px;height:34px;background:#444;border-radius:2px;border:1px solid #2e2e2e;box-shadow:0 0 0 1px #505050;"></div>
<div style="left:5px;top:237px;width:35px;height:34px;background:#444;border-radius:2px;border:1px solid #2e2e2e;box-shadow:0 0 0 1px #505050;"></div>
<div style="left:5px;top:274px;width:35px;height:34px;background:#444;border-radius:2px;border:1px solid #2e2e2e;box-shadow:0 0 0 1px #505050;"></div>
<div style="left:5px;top:311px;width:35px;height:34px;background:#444;border-radius:2px;border:1px solid #2e2e2e;box-shadow:0 0 0 1px #505050;"></div>
<div style="left:5px;top:348px;width:35px;height:34px;background:#444;border-radius:2px;border:1px solid #2e2e2e;box-shadow:0 0 0 1px #505050;"></div>
<div style="left:5px;top:385px;width:35px;height:34px;background:#444;border-radius:2px;border:1px solid #2e2e2e;box-shadow:0 0 0 1px #505050;"></div>
<div style="left:5px;top:422px;width:35px;height:34px;background:#444;border-radius:2px;border:1px solid #2e2e2e;box-shadow:0 0 0 1px #505050;"></div>
<div style="left:5px;top:459px;width:35px;height:34px;background:#444;border-radius:2px;border:1px solid #2e2e2e;box-shadow:0 0 0 1px #505050;"></div>
<div style="left:5px;top:496px;width:35px;height:34px;background:#444;border-radius:2px;border:1px solid #2e2e2e;box-shadow:0 0 0 1px #505050;"></div>
<svg style="left:5px;top:163px;overflow:visible;" width="34" height="34" viewBox="0 0 34 34"><g transform="translate(13.500,8.500)"><path d="M0 0l0 17.500 4.200-3.800 3.300 7.300 3.300-1.500-3.300-7.200 5.700-.4z" fill="#8e1a24" stroke="#fff" stroke-width="1.300" stroke-linejoin="round"/></g></svg>
<svg style="left:5px;top:200px;overflow:visible;" width="34" height="34" viewBox="0 0 34 34"><path d="M7 8c1-3 4-4 7-3.500s6-1.500 8 .5 3 5 2 8-1 6-3 8-5 1-8 1.500-6 .5-6.500-2 2.500-4 2-6.500-2.500-3-1.500-6z" fill="none" stroke="#c8c8c8" stroke-width="1.100" stroke-dasharray="3.500 2.200"/><g transform="translate(19,13) scale(.82)"><path d="M0 0l0 17.500 4.200-3.800 3.300 7.300 3.300-1.500-3.300-7.200 5.700-.4z" fill="#8e1a24" stroke="#fff" stroke-width="1.300" stroke-linejoin="round"/></g></svg>
<svg style="left:5px;top:237px;overflow:visible;" width="34" height="34" viewBox="0 0 34 34"><ellipse cx="14.500" cy="22.500" rx="10.500" ry="6.500" fill="none" stroke="#d01828" stroke-width="1.800"/><path d="M30 5.500l-11.500 12" stroke="#6a3c1c" stroke-width="2.600" stroke-linecap="round"/><path d="M29.500 5l-11 11.500" stroke="#b07848" stroke-width="1" stroke-linecap="round"/><path d="M19.500 16.500c-2 .5-4 2.500-5 5-.8 2-3 2.300-4.500 1.500 4 2.500 9.500 1 11.500-4.500z" fill="#f0e8d0" stroke="#8a8060" stroke-width=".5"/><g fill="#f4e428" stroke="#3a3a10" stroke-width=".7"><rect x="6" y="17.500" width="3.200" height="3.200"/><rect x="5.500" y="25" width="3.200" height="3.200"/><rect x="15" y="25.500" width="3.200" height="3.200"/></g></svg>
<svg style="left:5px;top:274px;overflow:visible;" width="34" height="34" viewBox="0 0 34 34"><path d="M4 22l6-14 4 10 3-10 5 14z" fill="#7a7a7a" opacity=".75"/><path d="M5 22l5.500-14 3 8" fill="#555" opacity=".5"/><path d="M17 23c0 2 11 2.500 11.500-.5L23 6z" fill="url(#gBlueCube)" stroke="#2a5c98" stroke-width=".5"/><ellipse cx="22.700" cy="23.300" rx="5.700" ry="2" fill="#3a72b4"/><path d="M2.500 18.500l19 11" stroke="#d01828" stroke-width="2.200"/><path d="M24.500 31.500l-7.500-1 3.500-5z" fill="#d01828"/></svg>
<svg style="left:5px;top:311px;overflow:visible;" width="34" height="34" viewBox="0 0 34 34"><path d="M5 21c-3 4 2 8.500 11 8.500" fill="none" stroke="#d01828" stroke-width="3"/><path d="M29 19.500c3.500 4-1 9-9 10" fill="none" stroke="#d01828" stroke-width="3.200"/><path d="M14 25.500l8 4-8 3.500z" fill="#d01828"/><circle cx="17" cy="12.500" r="9.500" fill="url(#gBall)"/></svg>
<svg style="left:5px;top:348px;overflow:visible;" width="34" height="34" viewBox="0 0 34 34"><g stroke="#d01828" stroke-width="2.400"><path d="M5 5l8 8M29 5l-8 8M5 29l8-8M29 29l-8-8"/></g><g fill="#d01828"><path d="M2.500 2.500l8.500 2-6.500 6.500zM31.500 2.500l-2 8.500-6.500-6.500zM2.500 31.500l2-8.500 6.500 6.500zM31.500 31.500l-8.500-2 6.500-6.500z"/></g><path d="M10 13l8-3.500 7 2.500v9.500l-7.500 4-7.500-3.500z" fill="#4a88cc"/><path d="M10 13l7.500 3 7.500-4-7-2.500z" fill="#b8dcfc"/><path d="M17.500 16v9.500l7.500-4V12z" fill="#2e68a8"/></svg>
<svg style="left:5px;top:385px;overflow:visible;" width="34" height="34" viewBox="0 0 34 34"><g stroke="#c0c0c0" stroke-width="1.200" fill="none"><path d="M4 9l12-5 12 5v14l-12 5.500L4 23zM4 9l12 5 12-5M16 14v14.500"/></g><circle cx="16" cy="19" r="5.500" fill="url(#gBall)"/><path d="M16 15V7" stroke="#18a828" stroke-width="2.200"/><path d="M13.500 9.500l2.500-5 2.500 5z" fill="#18a828"/><path d="M12 21.500l-6 2" stroke="#1828d0" stroke-width="2.400"/><path d="M20.500 21l6.500 2.500" stroke="#d01828" stroke-width="2.400"/><g fill="#f4e428" stroke="#3a3a10" stroke-width=".7"><rect x="2.400" y="7.400" width="3.200" height="3.200"/><rect x="14.400" y="2.400" width="3.200" height="3.200"/><rect x="26.400" y="7.400" width="3.200" height="3.200"/><rect x="2.400" y="21.400" width="3.200" height="3.200"/><rect x="14.400" y="26.900" width="3.200" height="3.200"/><rect x="26.400" y="21.400" width="3.200" height="3.200"/></g></svg>
<svg style="left:5px;top:422px;overflow:visible;" width="34" height="34" viewBox="0 0 34 34"><path d="M5 20c5-2.500 14-4.500 20-3.500l5 9.500c-7-1-19 1-25 4z" fill="#5a9ad8" stroke="#2a5c98" stroke-width=".6"/><path d="M5 24.500c6-2.500 17-4 22.500-3.500M11 18.500l-.5 9.500M17.500 17l1.500 9.500M23 16.500l3.500 9" stroke="#c8e4fc" stroke-width="1" fill="none"/><path d="M16 17V6" stroke="#d01828" stroke-width="1.800"/><path d="M13 7.500l3-6 3 6z" fill="#d01828"/><g fill="#f4e428" stroke="#3a3a10" stroke-width=".7"><rect x="14.400" y="11.400" width="3.200" height="3.200"/><rect x="10.400" y="18.400" width="3.200" height="3.200"/><rect x="19.400" y="18.400" width="3.200" height="3.200"/></g></svg>
<svg style="left:5px;top:459px;overflow:visible;" width="34" height="34" viewBox="0 0 34 34"><path d="M17 19V8" stroke="#222" stroke-width="2"/><path d="M17 19H7" stroke="#222" stroke-width="2"/><path d="M17 19l7 6" stroke="#222" stroke-width="2"/><circle cx="17.500" cy="19.500" r="5" fill="url(#gBall)"/><path d="M13.500 9l3.500-7 3.500 7z" fill="#28c038"/><path d="M9 15.500l-7.500 3.500 7.500 3.500z" fill="#2838e0"/><path d="M21 26l7.500 3-2-8z" fill="#e02030"/></svg>
<div style="left:6px;top:545px;width:32px;height:32px;background:linear-gradient(180deg,#ffffff 0,#f4f4f4 45%,#bcbcbc 100%);border-radius:2px;box-shadow:0 0 0 1px #333;"></div>
<div style="left:6px;top:583px;width:32px;height:32px;background:linear-gradient(180deg,#ffffff 0,#f4f4f4 45%,#bcbcbc 100%);border-radius:2px;box-shadow:0 0 0 1px #333;"></div>
<div style="left:6px;top:621px;width:32px;height:32px;background:linear-gradient(180deg,#ffffff 0,#f4f4f4 45%,#bcbcbc 100%);border-radius:2px;box-shadow:0 0 0 1px #333;"></div>
<div style="left:6px;top:659px;width:32px;height:32px;background:linear-gradient(180deg,#ffffff 0,#f4f4f4 45%,#bcbcbc 100%);border-radius:2px;box-shadow:0 0 0 1px #333;"></div>
<div style="left:6px;top:697px;width:32px;height:32px;background:linear-gradient(180deg,#ffffff 0,#f4f4f4 45%,#bcbcbc 100%);border-radius:2px;box-shadow:0 0 0 1px #333;"></div>
<div style="left:6px;top:735px;width:32px;height:32px;background:linear-gradient(180deg,#ffffff 0,#f4f4f4 45%,#bcbcbc 100%);border-radius:2px;box-shadow:0 0 0 1px #333;"></div>
<svg style="left:6px;top:545px;overflow:visible;" width="32" height="32" viewBox="0 0 32 32"><g stroke="#333" stroke-width="1.100" fill="none"><path d="M6.0 13.5L16.5 8.25L27.0 13.5L16.5 18.75Z"/><path d="M11.25 10.875L21.75 16.125M21.75 10.875L11.25 16.125"/></g><g stroke-width="1.7600000000000002" stroke-linecap="round"><path d="M6.5 25.5V20.55" stroke="#18b028"/><path d="M6.5 25.5l-3.8500000000000005 2.75" stroke="#1828e0"/><path d="M6.5 25.5l3.8500000000000005 2.75" stroke="#e01828"/></g></svg>
<svg style="left:6px;top:583px;overflow:visible;" width="32" height="32" viewBox="0 0 32 32"><path d="M15.500 0v32M0 15.500h32" stroke="#444" stroke-width="1.400"/><path d="M2.0 7.5h11M7.5 2.0v11" stroke="#3a3a3a" stroke-width="1.200"/><path d="M2.0 23.5h11M7.5 18.0v11" stroke="#3a3a3a" stroke-width="1.200"/><path d="M18.0 23.5h11M23.5 18.0v11" stroke="#3a3a3a" stroke-width="1.200"/><g stroke="#333" stroke-width="1.100" fill="none"><path d="M17.3 6.5L23.5 3.4L29.7 6.5L23.5 9.6Z"/><path d="M20.4 4.95L26.6 8.05M26.6 4.95L20.4 8.05"/></g><g stroke-width="1.1199999999999999" stroke-linecap="round"><path d="M19.5 13V9.85" stroke="#18b028"/><path d="M19.5 13l-2.4499999999999997 1.75" stroke="#1828e0"/><path d="M19.5 13l2.4499999999999997 1.75" stroke="#e01828"/></g></svg>
<svg style="left:6px;top:621px;overflow:visible;" width="32" height="32" viewBox="0 0 32 32"><rect x="0" y="0" width="15" height="32" fill="#2e2e2e"/><path d="M3 3.500h9M3 7.500h3M7.500 7.500h4.500M3 11.500h3M7.500 11.500h4.500M3 15.500h3M7.500 15.500h4.500M3 19.500h9" stroke="#ddd" stroke-width="1"/><path d="M15.500 0v32" stroke="#444" stroke-width="1.400"/><g stroke="#333" stroke-width="1.100" fill="none"><path d="M17.3 14L23.5 10.9L29.7 14L23.5 17.1Z"/><path d="M20.4 12.45L26.6 15.55M26.6 12.45L20.4 15.55"/></g><g stroke-width="1.2800000000000002" stroke-linecap="round"><path d="M19.5 27V23.4" stroke="#18b028"/><path d="M19.5 27l-2.8000000000000003 2.0" stroke="#1828e0"/><path d="M19.5 27l2.8000000000000003 2.0" stroke="#e01828"/></g></svg>
<svg style="left:6px;top:659px;overflow:visible;" width="32" height="32" viewBox="0 0 32 32"><g stroke="#333" stroke-width="1.100" fill="none"><path d="M7.5 7.5L17 2.75L26.5 7.5L17 12.25Z"/><path d="M12.25 5.125L21.75 9.875M21.75 5.125L12.25 9.875"/></g><g stroke-width="1.2000000000000002" stroke-linecap="round"><path d="M4.5 13V9.625" stroke="#18b028"/><path d="M4.5 13l-2.625 1.875" stroke="#1828e0"/><path d="M4.5 13l2.625 1.875" stroke="#e01828"/></g><path d="M0 16.500h32" stroke="#444" stroke-width="1.400"/><path d="M7 17.5v14" stroke="#888" stroke-width=".8"/><path d="M7 25.5h25" stroke="#666" stroke-width=".8"/><path d="M8 25.5c3-9 6-9 9 0s7 8 12-2" stroke="#3a6ca8" stroke-width="1.400" fill="none"/><path d="M14.500 17.5v14" stroke="#e01818" stroke-width="1"/><path d="M2 20.5h3" stroke="#e02020" stroke-width="1.200"/><path d="M2 24.0h3" stroke="#2050e0" stroke-width="1.200"/><path d="M2 27.5h3" stroke="#20b030" stroke-width="1.200"/></svg>
<svg style="left:6px;top:697px;overflow:visible;" width="32" height="32" viewBox="0 0 32 32"><rect x="0" y="0" width="15" height="32" fill="#2e2e2e"/><rect x="0" y="0" width="4" height="32" fill="#888"/><path d="M2 2v28" stroke="#555" stroke-width="1.500" stroke-dasharray="1.500 1.500"/><g stroke-width=".9" fill="none"><rect x="6" y="3.500" width="2.500" height="2.500" stroke="#ccc"/><rect x="11" y="3.500" width="2.500" height="2.500" stroke="#ccc"/><rect x="6" y="8" width="2.500" height="2.500" stroke="#f06060"/><rect x="11" y="8" width="2.500" height="2.500" stroke="#f06060"/><rect x="6" y="12.500" width="2.500" height="2.500" stroke="#50e060"/><rect x="11" y="12.500" width="2.500" height="2.500" stroke="#50e060"/><rect x="7" y="21" width="5.500" height="5.500" stroke="#50e060" stroke-width="1.200"/></g><path d="M6.500 29h7" stroke="#ccc" stroke-width="1"/><path d="M15.500 0v32" stroke="#444" stroke-width="1.400"/><g stroke="#333" stroke-width="1.100" fill="none"><path d="M17.3 14L23.5 10.9L29.7 14L23.5 17.1Z"/><path d="M20.4 12.45L26.6 15.55M26.6 12.45L20.4 15.55"/></g><g stroke-width="1.2800000000000002" stroke-linecap="round"><path d="M19.5 27V23.4" stroke="#18b028"/><path d="M19.5 27l-2.8000000000000003 2.0" stroke="#1828e0"/><path d="M19.5 27l2.8000000000000003 2.0" stroke="#e01828"/></g></svg>
<svg style="left:6px;top:735px;overflow:visible;" width="32" height="32" viewBox="0 0 32 32"><rect x="16" y="0" width="16" height="16" fill="#2e2e2e"/><g stroke="#333" stroke-width="1.100" fill="none"><path d="M1.1999999999999993 6L8 2.5999999999999996L14.8 6L8 9.4Z"/><path d="M4.6 4.3L11.4 7.7M11.4 4.3L4.6 7.7"/></g><g stroke-width="1.1199999999999999" stroke-linecap="round"><path d="M4.5 12.5V9.35" stroke="#18b028"/><path d="M4.5 12.5l-2.4499999999999997 1.75" stroke="#1828e0"/><path d="M4.5 12.5l2.4499999999999997 1.75" stroke="#e01828"/></g><g fill="none" stroke-width="1"><rect x="18.500" y="2.500" width="6" height="2.500" stroke="#f0e060"/><rect x="21.500" y="6.500" width="6" height="2.500" stroke="#ccc"/><rect x="24.500" y="10.500" width="6" height="2.500" stroke="#ccc"/><path d="M20 5v3h1.500M23 9v3h1.500" stroke="#aaa" stroke-width=".7"/></g><path d="M0 16.500h32M15.500 0v16" stroke="#444" stroke-width="1.400"/><path d="M7 17.5v14" stroke="#888" stroke-width=".8"/><path d="M7 25.5h25" stroke="#666" stroke-width=".8"/><path d="M8 25.5c3-9 6-9 9 0s7 8 12-2" stroke="#3a6ca8" stroke-width="1.400" fill="none"/><path d="M14.500 17.5v14" stroke="#e01818" stroke-width="1"/><path d="M2 20.5h3" stroke="#e02020" stroke-width="1.200"/><path d="M2 24.0h3" stroke="#2050e0" stroke-width="1.200"/><path d="M2 27.5h3" stroke="#20b030" stroke-width="1.200"/></svg>
<div style="left:5px;top:771px;width:32px;height:31px;border:1px solid #2e2e2e;box-shadow:0 0 0 1px #4e4e4e;"></div>
<svg style="left:18px;top:784px;" width="6" height="4" viewBox="0 0 6 4"><path d="M0 0h6l-3 3.5z" fill="#bbb"/></svg>
<div style="left:7px;top:877px;width:30px;height:30px;border-radius:4px;background:linear-gradient(180deg,#565656,#2c2c2c);box-shadow:0 0 0 1px #222, 0 0 0 2px #555;"></div>
<svg style="left:9px;top:879px;overflow:visible;" width="26" height="26" viewBox="0 0 26 26"><path d="M7 23.500C3 16 6 7 13.500 2c5.500 3.500 9 9 8 15.500-.5 3-2 5-4 6.500" stroke="#d8d8d8" stroke-width="1.400" fill="none"/><path d="M10 23C8 17 9.500 10 13.500 5.500c2 3 3.500 7 3 11.500M13 23.500c-.5-4 0-8 1-11.500 1.500 2.500 2 5 1.500 8M16.500 14c1.500 0 3 1 3.500 2.500M8.500 12c-1 0-2 .5-3 1.500" stroke="#c0c0c0" stroke-width="1.100" fill="none"/><path d="M11.500 21c.8-.8 2.200-.8 3 0 .3 1.200-.5 2.500-1.500 2.800-1-.3-1.800-1.600-1.500-2.800z" fill="#d8d8d8"/></svg>
<div style="left:44px;top:148px;width:1px;height:765px;background:#363636;"></div>
<div style="left:46px;top:150px;width:1396px;height:763px;border:1px solid #7a7a7a;"></div>
<span class="t" style="left:54.5px;top:155px;font-size:11px;line-height:11px;color:#cccccc;letter-spacing:-0.410px;">View</span>
<span class="t" style="left:91px;top:155px;font-size:11px;line-height:11px;color:#cccccc;letter-spacing:-0.201px;">Shading</span>
<span class="t" style="left:144px;top:155px;font-size:11px;line-height:11px;color:#cccccc;letter-spacing:-0.070px;">Lighting</span>
<span class="t" style="left:196px;top:155px;font-size:11px;line-height:11px;color:#cccccc;letter-spacing:-0.383px;">Show</span>
<span class="t" style="left:237px;top:155px;font-size:11px;line-height:11px;color:#cccccc;letter-spacing:-0.109px;">Renderer</span>
<span class="t" style="left:297px;top:155px;font-size:11px;line-height:11px;color:#cccccc;letter-spacing:-0.276px;">Panels</span>
<div style="left:47px;top:191px;width:1394px;height:721px;background:linear-gradient(180deg,#8193ab 0%,#1b1c1e 100%);overflow:hidden;"><svg width="1394" height="720" viewBox="0 0 1394 720" style="left:0;top:0;" shape-rendering="crispEdges"><path fill="none" stroke="#8c8c8c" stroke-width="1" d="M488.8,658.5 384.8,707.8 M488.8,658.5 572.9,703.5 M491.8,660.1 387.7,709.6 M485.2,660.2 569.3,705.4 M494.7,661.6 390.6,711.4 M481.6,661.9 565.6,707.4 M497.7,663.2 393.5,713.2 M478.0,663.6 562.0,709.3 M500.7,664.8 396.4,715.0 M474.3,665.4 558.3,711.3 M503.7,666.4 399.4,716.9 M470.6,667.1 554.6,713.3 M506.7,668.0 402.4,718.7 M466.9,668.9 550.9,715.3 M509.7,669.6 405.3,720.5 M463.2,670.6 547.1,717.3 M512.7,671.3 408.3,722.4 M459.4,672.4 543.4,719.3 M515.7,672.9 411.3,724.3 M455.7,674.2 539.6,721.3 M518.8,674.5 414.4,726.1 M451.9,676.0 535.8,723.3 M521.9,676.2 417.4,728.0 M448.1,677.8 532.0,725.3 M524.9,677.8 420.4,729.9 M444.3,679.6 528.1,727.4 M531.2,681.1 426.6,733.7 M436.6,683.2 520.4,731.5 M534.3,682.8 429.7,735.7 M432.8,685.1 516.5,733.6 M537.4,684.5 432.8,737.6 M428.9,686.9 512.5,735.7 M540.6,686.2 435.9,739.5 M425.0,688.8 508.6,737.8 M543.7,687.9 439.0,741.5 M421.0,690.6 504.6,739.9 M546.9,689.6 442.2,743.4 M417.1,692.5 500.7,742.0 M550.1,691.3 445.4,745.4 M413.1,694.4 496.7,744.2 M553.3,693.0 448.6,747.4 M409.1,696.2 492.6,746.3 M556.5,694.7 451.8,749.4 M405.1,698.1 488.6,748.5 M559.8,696.5 455.0,751.4 M401.1,700.1 484.5,750.6 M563.0,698.2 458.2,753.4 M397.1,702.0 480.4,752.8 M566.3,700.0 461.5,755.4 M393.0,703.9 476.3,755.0 M569.6,701.7 464.7,757.4 M388.9,705.8 472.2,757.2 M572.9,703.5 468.0,759.4 M384.8,707.8 468.0,759.4"/><path fill="none" stroke="#000" stroke-width="2" d="M529.6,680.3 425.0,732.8 M438.6,682.3 522.3,730.5"/><path fill="none" stroke="#04046c" stroke-width="1" d="M565.9,266.4 529.8,274.5 491.8,283.1 478.2,286.3 470.4,288.3 464.4,290.2 459.8,292.0 456.4,293.7 454.2,295.4 453.1,297.0 453.2,298.6 454.6,300.2 457.3,301.9 461.7,303.6 470.5,306.2 480.2,308.7 487.0,310.0 493.5,310.9 500.0,311.4 506.7,311.6 513.6,311.4 520.8,311.0 528.2,310.2 536.0,309.2 544.2,307.7 553.4,305.7 567.5,302.3 605.6,292.8 641.7,283.7 602.8,274.8Z M568.0,338.0 532.5,347.8 495.2,358.1 481.9,361.9 474.2,364.4 468.4,366.6 463.9,368.8 460.6,370.8 458.4,372.8 457.4,374.8 457.5,376.7 458.8,378.6 461.5,380.6 465.9,382.7 474.6,385.9 484.1,388.8 490.7,390.4 497.1,391.4 503.6,392.0 510.2,392.2 517.0,392.1 524.0,391.5 531.3,390.6 538.9,389.3 547.0,387.6 556.0,385.3 569.8,381.2 607.2,369.7 642.6,358.8 604.4,348.1Z M570.2,412.6 535.4,424.1 498.8,436.1 485.7,440.5 478.2,443.5 472.5,446.1 468.1,448.5 464.9,450.9 462.8,453.3 461.8,455.6 461.9,457.8 463.3,460.1 465.9,462.4 470.2,464.8 478.8,468.5 488.1,471.9 494.7,473.7 501.0,474.9 507.3,475.7 513.7,475.9 520.4,475.7 527.3,475.1 534.4,474.0 541.9,472.5 549.8,470.5 558.6,467.8 572.2,463.0 608.8,449.6 643.6,437.0 606.0,424.5Z M572.3,484.8 538.1,497.8 502.3,511.4 489.4,516.4 482.1,519.7 476.5,522.7 472.2,525.5 469.0,528.2 467.0,530.8 466.1,533.4 466.2,536.0 467.5,538.5 470.1,541.1 474.4,543.9 482.8,548.0 492.0,551.9 498.5,554.0 504.6,555.3 510.8,556.1 517.2,556.4 523.7,556.2 530.5,555.5 537.5,554.3 544.8,552.6 552.5,550.3 561.2,547.2 574.5,541.8 610.4,526.7 644.5,512.4 607.5,498.3Z M574.4,557.1 540.9,571.5 505.7,586.7 493.1,592.3 485.9,595.9 480.5,599.2 476.3,602.3 473.2,605.3 471.2,608.3 470.3,611.2 470.5,614.0 471.8,616.8 474.4,619.7 478.5,622.8 486.8,627.4 495.9,631.7 502.2,634.0 508.3,635.5 514.4,636.4 520.6,636.7 527.0,636.4 533.6,635.7 540.5,634.3 547.7,632.4 555.3,629.9 563.8,626.5 576.8,620.5 612.0,603.7 645.5,587.8 609.1,572.0Z M576.1,617.4 543.1,633.1 508.6,649.5 496.2,655.5 489.2,659.5 483.8,663.0 479.7,666.4 476.7,669.6 474.7,672.8 473.8,675.9 474.0,679.0 475.3,682.0 477.9,685.1 482.0,688.5 490.2,693.4 499.2,698.1 505.4,700.5 511.3,702.2 517.3,703.1 523.5,703.5 529.8,703.2 536.3,702.4 543.0,700.9 550.1,698.9 557.5,696.1 565.9,692.5 578.7,686.0 613.3,667.9 646.2,650.6 610.3,633.6Z M565.9,266.4 576.1,617.4 M529.8,274.5 543.1,633.1 M491.8,283.1 508.6,649.5 M464.4,290.2 483.8,663.0 M454.2,295.4 474.7,672.8 M454.6,300.2 475.3,682.0 M470.5,306.2 490.2,693.4 M493.5,310.9 511.3,702.2 M513.6,311.4 529.8,703.2 M536.0,309.2 550.1,698.9 M567.5,302.3 578.7,686.0 M605.6,292.8 613.3,667.9 M641.7,283.7 646.2,650.6 M602.8,274.8 610.3,633.6 M565.1,257.5 531.5,264.8 496.3,272.6 484.2,275.3 477.2,277.1 471.8,278.7 467.7,280.2 464.7,281.7 462.7,283.1 461.7,284.5 461.7,285.9 462.8,287.2 465.1,288.6 468.9,290.1 476.5,292.2 484.9,294.3 490.7,295.3 496.4,296.0 502.0,296.4 507.9,296.6 513.9,296.4 520.2,296.0 526.7,295.4 533.6,294.4 540.8,293.2 549.0,291.5 561.6,288.6 596.8,280.1 630.4,272.0 597.0,264.6Z M575.9,627.8 545.4,642.5 513.5,657.8 502.6,663.3 496.3,666.8 491.5,670.0 487.8,673.0 485.1,675.9 483.4,678.7 482.5,681.4 482.6,684.1 483.7,686.8 485.9,689.5 489.4,692.4 496.5,696.6 504.2,700.7 509.5,702.7 514.7,704.1 519.9,704.9 525.2,705.1 530.7,704.9 536.4,704.1 542.3,702.8 548.4,700.9 555.0,698.5 562.4,695.2 573.7,689.5 605.6,672.8 636.1,656.8 605.4,642.0Z M565.1,257.5 575.9,627.8 M531.5,264.8 545.4,642.5 M496.3,272.6 513.5,657.8 M471.8,278.7 491.5,670.0 M462.7,283.1 483.4,678.7 M462.8,287.2 483.7,686.8 M476.5,292.2 496.5,696.6 M496.4,296.0 514.7,704.1 M513.9,296.4 530.7,704.9 M533.6,294.4 548.4,700.9 M561.6,288.6 573.7,689.5 M596.8,280.1 605.6,672.8 M630.4,272.0 636.1,656.8 M597.0,264.6 605.4,642.0 M565.9,266.4 565.1,257.5 M576.1,617.4 575.9,627.8 M529.8,274.5 531.5,264.8 M543.1,633.1 545.4,642.5 M491.8,283.1 496.3,272.6 M508.6,649.5 513.5,657.8 M464.4,290.2 471.8,278.7 M483.8,663.0 491.5,670.0 M454.2,295.4 462.7,283.1 M474.7,672.8 483.4,678.7 M454.6,300.2 462.8,287.2 M475.3,682.0 483.7,686.8 M470.5,306.2 476.5,292.2 M490.2,693.4 496.5,696.6 M493.5,310.9 496.4,296.0 M511.3,702.2 514.7,704.1 M513.6,311.4 513.9,296.4 M529.8,703.2 530.7,704.9 M536.0,309.2 533.6,294.4 M550.1,698.9 548.4,700.9 M567.5,302.3 561.6,288.6 M578.7,686.0 573.7,689.5 M605.6,292.8 596.8,280.1 M613.3,667.9 605.6,672.8 M641.7,283.7 630.4,272.0 M646.2,650.6 636.1,656.8 M602.8,274.8 597.0,264.6 M610.3,633.6 605.4,642.0 M545.4,642.5 605.6,672.8 M513.5,657.8 573.7,689.5 M483.4,678.7 582.1,630.8 M483.7,686.8 590.0,634.6 M496.5,696.6 605.4,642.0 M514.7,704.1 621.1,649.6 M530.7,704.9 629.5,653.6 M769.1,155.9 768.3,164.0 766.2,173.6 762.7,183.5 758.0,193.4 752.2,203.2 745.3,212.5 737.3,221.4 728.6,229.7 719.0,237.3 708.8,244.1 698.1,250.1 687.0,255.3 675.6,259.5 664.1,262.9 652.5,265.4 641.1,267.0 630.0,267.7 619.4,267.7 609.5,266.8 601.3,265.5 593.3,263.2 583.7,259.8 573.6,255.3 563.3,250.1 553.1,244.0 543.0,237.3 533.2,229.9 523.7,222.0 514.7,213.6 506.2,204.9 498.3,195.8 491.0,186.5 484.4,177.0 478.5,167.4 473.4,157.8 469.1,148.3 465.6,139.1 463.0,130.2 461.3,122.0 460.5,115.2 M739.1,161.1 738.4,169.4 736.3,179.1 732.9,189.2 728.2,199.4 722.4,209.3 715.5,218.8 707.6,227.8 698.9,236.2 689.3,243.9 679.2,250.8 668.5,256.9 657.4,262.1 646.0,266.4 634.5,269.8 623.0,272.2 611.6,273.8 600.4,274.5 589.8,274.4 579.9,273.5 571.8,272.0 563.7,269.7 554.1,266.1 544.0,261.6 533.8,256.2 523.5,250.0 513.4,243.1 503.5,235.5 494.0,227.4 485.0,218.9 476.4,209.9 468.5,200.7 461.2,191.1 454.5,181.5 448.6,171.7 443.4,161.9 439.1,152.3 435.6,142.9 432.9,133.9 431.1,125.5 430.3,118.6 M707.5,166.5 706.8,174.9 704.8,184.8 701.4,195.1 696.9,205.3 691.1,215.3 684.3,224.9 676.4,234.0 667.7,242.5 658.2,250.2 648.1,257.2 637.4,263.2 626.3,268.4 615.0,272.7 603.5,276.1 592.0,278.5 580.6,280.0 569.5,280.6 558.9,280.4 549.1,279.4 540.9,277.9 532.9,275.5 523.3,271.9 513.2,267.2 502.9,261.6 492.6,255.3 482.5,248.3 472.6,240.6 463.1,232.4 454.0,223.7 445.5,214.6 437.5,205.2 430.1,195.5 423.5,185.7 417.5,175.8 412.3,166.0 407.9,156.2 404.3,146.7 401.6,137.6 399.8,129.1 398.9,122.1 M671.8,171.9 671.1,180.3 669.2,190.2 666.0,200.4 661.6,210.7 656.0,220.7 649.3,230.3 641.6,239.4 633.1,247.8 623.8,255.5 613.9,262.4 603.5,268.5 592.6,273.6 581.5,277.8 570.2,281.1 558.9,283.5 547.7,285.0 536.8,285.5 526.3,285.3 516.6,284.2 508.6,282.7 500.7,280.2 491.2,276.5 481.3,271.8 471.1,266.2 460.9,259.8 450.9,252.7 441.2,245.0 431.8,236.7 422.8,227.9 414.3,218.8 406.4,209.3 399.1,199.6 392.5,189.8 386.5,179.9 381.3,170.0 376.9,160.2 373.4,150.7 370.6,141.5 368.7,133.0 367.8,126.1 M630.4,176.8 629.9,185.2 628.1,194.9 625.1,205.0 620.9,215.1 615.7,225.0 609.4,234.4 602.1,243.3 594.0,251.6 585.2,259.2 575.7,266.0 565.7,271.9 555.3,277.0 544.7,281.1 533.9,284.3 523.0,286.7 512.3,288.1 501.8,288.6 491.8,288.3 482.4,287.3 474.7,285.7 467.1,283.3 457.9,279.6 448.3,274.9 438.5,269.3 428.7,263.0 419.0,255.9 409.5,248.3 400.4,240.1 391.7,231.4 383.4,222.3 375.7,213.0 368.6,203.4 362.1,193.6 356.3,183.8 351.3,174.0 346.9,164.3 343.4,154.9 340.7,145.8 338.8,137.4 337.9,130.5 M582.9,181.3 582.5,189.4 580.9,198.7 578.3,208.5 574.5,218.2 569.7,227.7 564.0,236.8 557.3,245.4 549.9,253.4 541.8,260.7 533.0,267.3 523.8,273.0 514.2,277.9 504.3,281.9 494.3,285.0 484.2,287.3 474.2,288.6 464.4,289.2 455.0,288.9 446.3,287.9 439.0,286.4 431.8,284.1 423.3,280.5 414.2,275.9 404.9,270.5 395.7,264.4 386.5,257.6 377.6,250.1 368.9,242.1 360.7,233.7 352.8,224.9 345.5,215.8 338.7,206.5 332.6,197.0 327.0,187.5 322.2,177.9 318.0,168.5 314.6,159.3 312.0,150.6 310.1,142.4 309.2,135.7 M528.5,185.1 528.2,192.6 527.0,201.3 524.7,210.4 521.5,219.4 517.4,228.3 512.4,236.8 506.6,244.8 500.1,252.3 493.0,259.2 485.3,265.4 477.1,270.8 468.6,275.4 459.8,279.2 450.9,282.2 441.9,284.3 432.9,285.7 424.2,286.2 415.7,286.0 407.8,285.1 401.3,283.7 394.8,281.5 387.0,278.2 378.8,274.0 370.4,268.9 362.0,263.2 353.6,256.7 345.4,249.8 337.5,242.3 329.9,234.3 322.7,226.0 316.0,217.4 309.8,208.6 304.1,199.7 298.9,190.7 294.4,181.7 290.6,172.8 287.4,164.1 284.9,155.8 283.2,148.1 282.2,141.8 M465.7,187.8 465.6,194.3 464.7,202.0 463.0,210.0 460.5,217.9 457.2,225.7 453.2,233.3 448.6,240.4 443.3,247.1 437.5,253.2 431.2,258.7 424.5,263.5 417.5,267.7 410.2,271.2 402.8,273.9 395.3,275.9 387.8,277.2 380.5,277.8 373.4,277.7 366.7,277.0 361.2,275.8 355.7,273.9 349.1,271.0 342.0,267.3 334.8,262.9 327.6,257.8 320.4,252.1 313.4,245.9 306.6,239.2 300.0,232.2 293.8,224.7 287.9,217.1 282.5,209.2 277.5,201.1 273.0,193.0 269.0,184.9 265.6,177.0 262.8,169.2 260.6,161.7 259.0,154.8 258.2,149.1 M390.8,188.4 390.9,193.4 390.4,199.3 389.3,205.4 387.7,211.6 385.6,217.6 382.9,223.5 379.8,229.1 376.2,234.3 372.2,239.2 367.9,243.5 363.2,247.5 358.3,250.8 353.2,253.7 347.9,256.0 342.6,257.7 337.2,258.9 331.9,259.5 326.8,259.6 322.0,259.1 318.0,258.3 313.9,257.0 309.1,254.8 303.9,252.0 298.6,248.6 293.2,244.6 287.8,240.2 282.5,235.4 277.4,230.2 272.4,224.6 267.7,218.8 263.3,212.7 259.1,206.4 255.3,200.1 251.9,193.6 248.8,187.2 246.2,180.8 244.0,174.6 242.3,168.6 241.1,163.1 240.4,158.6 M319.5,185.5 319.6,188.0 319.4,190.9 318.9,194.0 318.2,197.1 317.1,200.1 315.9,203.1 314.3,206.0 312.6,208.6 310.6,211.1 308.4,213.4 306.1,215.4 303.6,217.2 301.0,218.8 298.3,220.0 295.5,221.0 292.7,221.6 289.9,222.0 287.2,222.1 284.7,221.9 282.6,221.5 280.4,220.9 277.8,219.8 275.0,218.3 272.1,216.6 269.2,214.6 266.3,212.3 263.4,209.7 260.6,207.0 257.9,204.1 255.3,201.0 252.9,197.8 250.6,194.4 248.5,191.0 246.6,187.6 244.9,184.2 243.4,180.8 242.2,177.5 241.3,174.3 240.6,171.4 240.2,169.0 M284.8,181.8 284.8,182.7 284.7,183.8 284.5,184.9 284.2,186.1 283.8,187.2 283.3,188.3 282.7,189.3 282.0,190.3 281.2,191.2 280.4,192.1 279.4,192.8 278.4,193.5 277.4,194.1 276.3,194.6 275.2,194.9 274.0,195.2 272.9,195.3 271.8,195.3 270.7,195.3 269.9,195.1 269.0,194.9 267.9,194.5 266.8,193.9 265.6,193.3 264.4,192.5 263.1,191.6 261.9,190.6 260.8,189.6 259.6,188.5 258.5,187.3 257.5,186.0 256.6,184.7 255.7,183.4 254.9,182.1 254.2,180.8 253.6,179.5 253.1,178.2 252.7,177.0 252.4,175.9 252.3,174.9 M769.1,155.9 763.7,156.8 758.3,157.8 752.8,158.7 747.2,159.7 741.6,160.6 736.0,161.6 730.3,162.6 724.5,163.6 718.7,164.6 712.8,165.6 706.8,166.6 700.7,167.6 694.3,168.6 687.8,169.6 681.0,170.6 674.1,171.5 667.0,172.5 659.7,173.4 652.2,174.3 644.5,175.3 636.6,176.2 628.6,177.0 620.3,177.9 611.8,178.7 603.0,179.6 594.1,180.4 584.9,181.2 575.5,181.9 565.9,182.7 556.0,183.4 545.9,184.1 535.5,184.7 524.9,185.3 513.9,185.9 502.7,186.4 491.2,186.9 479.3,187.4 467.0,187.8 454.4,188.1 441.4,188.3 427.9,188.5 413.9,188.6 399.3,188.5 383.9,188.3 367.7,187.9 350.2,187.3 330.9,186.3 308.3,184.5 266.2,178.6 M761.3,186.8 755.9,187.9 750.5,188.9 745.0,190.0 739.5,191.1 733.9,192.2 728.3,193.2 722.7,194.3 716.9,195.4 711.2,196.5 705.3,197.5 699.4,198.6 693.3,199.6 686.9,200.7 680.5,201.7 673.8,202.6 667.0,203.6 660.0,204.5 652.8,205.4 645.4,206.2 637.8,207.0 630.0,207.8 622.1,208.5 613.9,209.2 605.5,209.9 597.0,210.5 588.2,211.1 579.2,211.6 570.0,212.1 560.5,212.5 550.8,212.8 540.9,213.1 530.7,213.3 520.3,213.4 509.5,213.5 498.5,213.4 487.2,213.3 475.6,213.0 463.6,212.7 451.2,212.2 438.4,211.5 425.2,210.7 411.5,209.6 397.1,208.3 382.1,206.7 366.1,204.8 349.0,202.3 330.0,198.4 307.6,191.7 266.5,181.0 M740.1,218.5 734.7,219.7 729.3,220.9 723.9,222.0 718.4,223.2 712.8,224.4 707.3,225.5 701.6,226.7 695.9,227.8 690.2,229.0 684.4,230.1 678.5,231.2 672.4,232.3 666.2,233.3 659.8,234.3 653.3,235.2 646.6,236.1 639.7,237.0 632.7,237.8 625.5,238.6 618.1,239.3 610.6,240.0 602.9,240.6 595.0,241.1 586.9,241.6 578.7,242.0 570.2,242.3 561.6,242.6 552.8,242.7 543.7,242.8 534.4,242.8 525.0,242.7 515.2,242.4 505.3,242.1 495.1,241.6 484.6,241.0 473.9,240.2 462.8,239.3 451.5,238.2 439.8,236.9 427.7,235.3 415.2,233.5 402.2,231.4 388.7,228.8 374.5,225.9 359.5,222.3 343.4,217.9 325.5,211.2 304.4,199.3 266.7,183.6 M708.8,244.1 703.5,245.3 698.1,246.6 692.6,247.8 687.2,249.1 681.6,250.3 676.1,251.5 670.4,252.7 664.8,253.9 659.1,255.0 653.3,256.2 647.4,257.3 641.4,258.4 635.3,259.4 629.0,260.4 622.6,261.3 616.1,262.1 609.5,263.0 602.7,263.7 595.7,264.4 588.6,265.0 581.4,265.6 574.0,266.1 566.5,266.5 558.8,266.8 551.0,267.1 543.0,267.2 534.9,267.3 526.5,267.2 518.0,267.1 509.4,266.8 500.5,266.4 491.4,265.8 482.2,265.1 472.7,264.2 463.0,263.2 453.0,262.0 442.8,260.6 432.4,258.9 421.6,256.9 410.5,254.7 399.1,252.1 387.2,249.2 374.9,245.7 362.1,241.7 348.5,236.9 334.0,231.0 318.0,221.9 299.1,205.6 266.9,186.0 M671.8,260.8 666.4,262.0 661.0,263.3 655.6,264.6 650.1,265.8 644.6,267.1 639.1,268.3 633.5,269.5 627.8,270.7 622.1,271.8 616.4,273.0 610.5,274.1 604.6,275.1 598.6,276.1 592.4,277.0 586.2,277.9 579.9,278.8 573.4,279.5 566.9,280.3 560.2,280.9 553.4,281.5 546.5,282.0 539.5,282.4 532.4,282.7 525.2,283.0 517.8,283.1 510.3,283.1 502.7,283.1 494.9,282.9 487.1,282.6 479.0,282.2 470.8,281.6 462.5,280.8 454.0,279.9 445.3,278.9 436.5,277.6 427.5,276.1 418.3,274.4 408.8,272.4 399.1,270.1 389.2,267.5 379.0,264.5 368.5,261.0 357.7,257.0 346.4,252.3 334.5,246.8 322.0,240.0 308.3,229.3 292.2,210.0 267.1,188.0 M633.7,267.6 628.3,268.9 623.0,270.1 617.5,271.4 612.1,272.6 606.6,273.8 601.0,275.0 595.4,276.2 589.8,277.4 584.1,278.5 578.4,279.6 572.6,280.6 566.7,281.6 560.7,282.6 554.7,283.5 548.6,284.4 542.5,285.2 536.2,285.9 529.9,286.6 523.5,287.2 517.0,287.7 510.5,288.2 503.8,288.6 497.1,288.9 490.3,289.1 483.3,289.2 476.3,289.2 469.2,289.1 462.0,288.9 454.7,288.6 447.3,288.1 439.8,287.5 432.2,286.7 424.5,285.8 416.6,284.7 408.6,283.3 400.5,281.8 392.2,280.0 383.8,277.9 375.3,275.6 366.5,272.8 357.6,269.7 348.4,266.1 339.0,262.0 329.4,257.1 319.3,251.3 308.9,244.2 297.6,232.8 284.6,212.0 267.2,189.2 M601.3,265.5 596.0,266.7 590.6,267.9 585.2,269.1 579.8,270.3 574.3,271.5 568.7,272.7 563.1,273.8 557.5,274.9 551.8,276.0 546.1,277.0 540.3,278.1 534.5,279.0 528.6,279.9 522.7,280.8 516.7,281.7 510.7,282.4 504.6,283.2 498.4,283.8 492.2,284.4 486.0,285.0 479.7,285.4 473.3,285.8 466.9,286.1 460.4,286.3 453.8,286.5 447.2,286.5 440.5,286.4 433.8,286.3 427.0,286.0 420.1,285.6 413.1,285.0 406.1,284.3 398.9,283.4 391.7,282.4 384.4,281.1 377.1,279.7 369.6,278.0 362.0,276.1 354.4,273.8 346.6,271.2 338.7,268.3 330.7,264.8 322.6,260.8 314.3,256.2 305.8,250.6 297.1,243.7 287.9,232.5 277.7,211.6 267.3,189.7 M570.2,253.7 564.9,254.8 559.5,256.0 554.0,257.1 548.6,258.3 543.1,259.4 537.5,260.5 531.9,261.5 526.3,262.6 520.6,263.6 514.9,264.6 509.1,265.5 503.3,266.5 497.5,267.3 491.6,268.2 485.8,269.0 479.9,269.8 473.9,270.5 467.9,271.1 461.9,271.7 455.9,272.3 449.8,272.8 443.7,273.2 437.5,273.6 431.3,273.9 425.1,274.1 418.8,274.2 412.5,274.2 406.2,274.2 399.8,274.0 393.4,273.7 386.9,273.3 380.4,272.8 373.8,272.1 367.2,271.3 360.6,270.3 353.9,269.1 347.2,267.7 340.4,266.1 333.6,264.2 326.7,262.0 319.9,259.5 312.9,256.5 306.0,253.1 299.0,249.0 292.1,244.1 285.1,238.1 278.1,227.9 270.7,208.6 267.2,189.2 M536.4,232.4 531.1,233.5 525.7,234.6 520.2,235.6 514.7,236.6 509.2,237.7 503.7,238.7 498.1,239.6 492.4,240.6 486.7,241.5 481.0,242.4 475.2,243.3 469.5,244.2 463.7,245.0 457.9,245.8 452.1,246.6 446.3,247.4 440.5,248.1 434.7,248.7 428.9,249.4 423.0,250.0 417.2,250.5 411.3,251.0 405.5,251.4 399.6,251.8 393.7,252.2 387.8,252.4 381.8,252.6 375.9,252.7 370.0,252.8 364.0,252.7 358.1,252.6 352.1,252.4 346.1,252.0 340.2,251.5 334.2,250.9 328.3,250.2 322.3,249.3 316.4,248.2 310.5,246.8 304.6,245.3 298.8,243.4 293.0,241.3 287.4,238.7 281.8,235.6 276.5,231.9 271.5,227.2 266.8,219.0 262.7,203.0 267.1,188.0 M506.2,204.9 500.8,205.8 495.4,206.8 489.9,207.7 484.4,208.6 478.9,209.5 473.3,210.4 467.7,211.3 462.1,212.2 456.3,213.0 450.6,213.9 444.8,214.7 439.1,215.5 433.4,216.3 427.6,217.0 421.9,217.8 416.2,218.5 410.5,219.3 404.8,220.0 399.2,220.6 393.5,221.3 387.8,221.9 382.2,222.5 376.5,223.0 370.9,223.5 365.3,224.0 359.7,224.5 354.1,224.8 348.5,225.2 342.9,225.5 337.4,225.7 331.9,225.9 326.4,226.0 320.9,226.0 315.5,226.0 310.1,225.9 304.8,225.6 299.5,225.3 294.3,224.8 289.2,224.2 284.2,223.4 279.3,222.4 274.6,221.2 270.1,219.7 265.9,217.9 262.0,215.6 258.8,212.7 256.3,207.1 255.2,195.6 266.9,186.0 M482.3,173.8 476.9,174.6 471.5,175.4 466.0,176.2 460.5,177.0 454.9,177.8 449.3,178.6 443.7,179.4 438.0,180.2 432.3,181.0 426.5,181.8 420.7,182.5 415.0,183.3 409.3,184.0 403.6,184.8 397.9,185.5 392.3,186.2 386.7,187.0 381.1,187.7 375.5,188.4 369.9,189.1 364.4,189.8 358.9,190.5 353.4,191.2 348.0,191.8 342.6,192.5 337.2,193.1 331.8,193.7 326.5,194.3 321.2,194.8 316.0,195.4 310.8,195.9 305.7,196.4 300.6,196.8 295.6,197.2 290.7,197.6 285.8,197.9 281.1,198.2 276.4,198.4 271.9,198.6 267.6,198.6 263.5,198.6 259.6,198.4 256.0,198.2 252.8,197.7 250.1,197.0 248.2,196.0 247.5,193.3 249.0,187.0 266.7,183.6 M466.7,142.2 461.3,142.9 455.8,143.6 450.3,144.3 444.7,145.0 439.1,145.7 433.5,146.4 427.8,147.1 422.1,147.8 416.4,148.5 410.6,149.2 404.8,149.9 399.0,150.6 393.3,151.3 387.6,152.1 382.0,152.8 376.3,153.5 370.7,154.3 365.2,155.1 359.7,155.8 354.2,156.6 348.7,157.4 343.3,158.2 337.9,158.9 332.6,159.7 327.3,160.6 322.0,161.4 316.8,162.2 311.6,163.0 306.5,163.8 301.5,164.7 296.5,165.5 291.6,166.4 286.8,167.2 282.0,168.1 277.4,169.0 272.8,169.9 268.4,170.7 264.1,171.6 260.0,172.5 256.2,173.4 252.5,174.3 249.1,175.2 246.2,176.1 243.7,177.1 241.8,178.0 240.9,178.9 241.4,179.2 244.7,178.2 266.5,181.0 M460.5,115.2 455.1,115.8 449.6,116.5 444.0,117.1 438.4,117.7 432.8,118.3 427.1,119.0 421.4,119.6 415.7,120.2 409.9,120.9 404.1,121.5 398.2,122.2 392.5,122.9 386.7,123.6 381.0,124.3 375.3,125.0 369.7,125.8 364.1,126.6 358.5,127.4 353.0,128.2 347.5,129.0 342.1,129.9 336.7,130.7 331.3,131.6 326.0,132.6 320.7,133.5 315.5,134.5 310.3,135.5 305.2,136.5 300.2,137.6 295.2,138.7 290.3,139.8 285.4,141.0 280.7,142.2 276.0,143.4 271.5,144.7 267.0,146.1 262.8,147.5 258.6,148.9 254.7,150.5 251.0,152.1 247.6,153.8 244.4,155.6 241.7,157.5 239.5,159.5 238.0,161.8 237.5,164.3 238.6,167.2 242.8,170.8 266.2,178.6 M764.4,155.2 763.6,163.2 761.5,172.5 758.2,182.1 753.7,191.8 748.0,201.3 741.3,210.4 733.6,219.0 725.1,227.1 715.8,234.5 705.9,241.2 695.5,247.1 684.7,252.1 673.6,256.3 662.4,259.6 651.2,262.1 640.1,263.7 629.2,264.4 618.8,264.4 609.2,263.6 601.3,262.3 593.4,260.1 584.0,256.7 574.2,252.4 564.2,247.3 554.2,241.4 544.3,234.8 534.7,227.7 525.4,220.0 516.6,211.8 508.3,203.2 500.6,194.4 493.4,185.2 487.0,176.0 481.2,166.6 476.2,157.3 472.0,148.0 468.6,139.0 466.1,130.3 464.4,122.3 463.7,115.6 M759.6,154.6 758.9,162.3 756.9,171.4 753.7,180.7 749.3,190.1 743.8,199.4 737.3,208.2 729.9,216.7 721.6,224.5 712.6,231.8 703.0,238.3 692.9,244.0 682.4,249.0 671.6,253.1 660.7,256.3 649.8,258.7 639.0,260.3 628.4,261.1 618.3,261.1 608.9,260.3 601.2,259.0 593.5,256.9 584.4,253.7 574.8,249.5 565.0,244.5 555.2,238.8 545.6,232.4 536.2,225.4 527.2,217.9 518.6,209.9 510.4,201.6 502.9,192.9 495.9,184.0 489.6,175.0 484.0,165.8 479.1,156.7 475.0,147.7 471.7,138.8 469.2,130.4 467.5,122.5 466.8,116.1 M739.2,151.9 738.6,158.7 736.9,166.6 734.1,174.8 730.4,183.0 725.7,191.1 720.1,198.9 713.7,206.4 706.5,213.4 698.7,219.8 690.4,225.6 681.6,230.7 672.4,235.2 663.0,238.9 653.4,241.9 643.8,244.1 634.3,245.6 625.0,246.4 616.1,246.5 607.8,245.9 600.9,244.8 594.1,243.1 586.0,240.2 577.4,236.6 568.7,232.2 560.0,227.2 551.4,221.6 543.0,215.4 534.9,208.7 527.2,201.7 519.9,194.2 513.1,186.5 506.9,178.6 501.2,170.5 496.2,162.4 491.8,154.2 488.1,146.2 485.1,138.3 482.9,130.7 481.5,123.7 480.8,117.9 M710.3,148.1 709.9,153.5 708.6,159.8 706.5,166.3 703.6,172.9 699.9,179.4 695.6,185.7 690.6,191.8 685.0,197.4 678.8,202.6 672.2,207.4 665.3,211.6 658.0,215.3 650.5,218.4 642.9,221.0 635.2,222.9 627.5,224.3 620.0,225.0 612.8,225.2 606.0,224.8 600.5,224.0 594.9,222.7 588.3,220.4 581.3,217.6 574.2,214.1 567.0,210.1 560.0,205.5 553.1,200.5 546.4,195.1 540.0,189.4 534.0,183.3 528.4,177.0 523.2,170.5 518.5,163.9 514.4,157.2 510.8,150.5 507.7,143.9 505.3,137.4 503.4,131.2 502.2,125.4 501.7,120.7 M682.5,144.5 682.2,148.5 681.3,153.2 679.7,158.2 677.6,163.2 675.0,168.1 671.7,172.9 668.1,177.5 663.9,181.8 659.3,185.8 654.4,189.5 649.2,192.8 643.8,195.7 638.1,198.2 632.3,200.2 626.5,201.8 620.7,202.9 615.0,203.5 609.4,203.8 604.3,203.6 600.0,203.0 595.8,202.0 590.7,200.4 585.3,198.3 579.8,195.6 574.2,192.6 568.7,189.1 563.4,185.3 558.2,181.2 553.2,176.8 548.5,172.1 544.1,167.3 540.1,162.2 536.4,157.1 533.2,151.9 530.3,146.7 527.9,141.6 526.0,136.5 524.6,131.7 523.7,127.2 523.3,123.5 M655.6,140.9 655.4,143.7 654.9,146.9 653.9,150.3 652.5,153.7 650.7,157.1 648.5,160.4 646.1,163.5 643.3,166.5 640.2,169.3 636.9,171.9 633.4,174.2 629.7,176.3 625.8,178.1 621.9,179.5 617.9,180.7 613.9,181.5 609.9,182.0 606.1,182.2 602.5,182.2 599.6,181.8 596.6,181.2 593.1,180.1 589.3,178.6 585.4,176.9 581.5,174.8 577.7,172.4 573.9,169.8 570.2,166.9 566.7,163.8 563.4,160.6 560.3,157.2 557.5,153.7 554.9,150.1 552.5,146.4 550.5,142.8 548.9,139.1 547.5,135.6 546.5,132.2 545.9,129.0 545.6,126.4 M629.7,137.5 629.6,139.0 629.3,140.8 628.8,142.6 628.0,144.5 627.1,146.4 626.0,148.2 624.6,149.9 623.1,151.6 621.5,153.2 619.7,154.6 617.8,155.9 615.7,157.1 613.6,158.1 611.5,159.0 609.3,159.6 607.1,160.1 604.9,160.5 602.8,160.6 600.8,160.6 599.1,160.4 597.5,160.1 595.5,159.5 593.4,158.7 591.2,157.8 589.0,156.6 586.8,155.3 584.7,153.8 582.6,152.3 580.6,150.5 578.7,148.7 577.0,146.8 575.4,144.8 573.9,142.8 572.6,140.8 571.4,138.7 570.5,136.6 569.7,134.6 569.1,132.7 568.8,130.9 568.6,129.5 M761.3,186.8 628.6,143.3 M740.1,218.5 625.1,149.4 M708.8,244.1 619.7,154.6 M671.8,260.8 612.9,158.4 M633.7,267.6 605.6,160.4 M601.3,265.5 599.1,160.4 M570.2,253.7 592.6,158.4 M536.4,232.4 585.4,154.3 M506.2,204.9 578.7,148.7 M482.3,173.8 573.4,142.1 M466.7,142.2 569.9,135.3 M714.0,165.4 701.6,167.5 688.4,169.5 674.6,171.5 660.1,173.4 645.0,175.2 629.3,177.0 613.1,178.6 596.4,180.2 579.4,181.6 562.0,183.0 544.4,184.2 526.6,185.2 508.7,186.2 490.8,186.9 473.0,187.6 455.3,188.1 437.9,188.4 420.8,188.5 404.1,188.5 387.9,188.4 372.2,188.0 357.2,187.6 342.8,186.9 329.2,186.1 316.5,185.2 304.5,184.1 293.5,182.9 283.5,181.6 274.4,180.1 266.2,178.6 259.1,176.9 253.0,175.2 248.0,173.3 243.9,171.4 240.8,169.5 238.8,167.4 237.7,165.4 237.5,163.3 238.3,161.1 240.0,159.0 242.5,156.8 245.9,154.7 250.1,152.5 255.0,150.4 260.6,148.2 266.9,146.1 273.9,144.0 281.4,142.0 289.5,140.0 298.2,138.0 307.3,136.1 316.8,134.2 326.8,132.4 337.1,130.7 347.8,129.0 358.8,127.3 370.1,125.7 381.6,124.2 393.3,122.8 405.2,121.4 443.9,117.1 447.4,116.7 449.6,116.5 451.3,116.3 452.7,116.2 454.0,116.1 455.1,116.1 456.2,116.0 457.3,116.0 458.3,116.0 459.3,116.0 460.4,116.0 461.4,116.1 462.5,116.1 463.6,116.2 464.7,116.3 465.9,116.3 467.2,116.4 468.6,116.6 470.0,116.7 471.6,116.9 473.3,117.1 475.3,117.3 477.5,117.5 480.0,117.8 483.0,118.2 486.8,118.7 491.9,119.4 500.2,120.5 596.9,133.2 712.4,148.4 723.5,149.9 730.5,150.8 735.7,151.5 739.8,152.1 743.2,152.6 746.0,153.0 748.5,153.3 750.6,153.7 752.5,154.0 754.1,154.2 755.6,154.5 756.8,154.7 757.9,155.0 758.8,155.2 759.6,155.4 760.2,155.6 760.7,155.8 761.1,156.0 761.3,156.2 761.4,156.4 761.3,156.6 761.1,156.8 760.7,157.0 760.0,157.2 759.1,157.4 757.8,157.7 755.9,158.1 752.6,158.7Z M711.2,160.3 698.9,162.3 685.8,164.3 672.1,166.2 657.8,168.0 642.8,169.8 627.3,171.5 611.2,173.1 594.8,174.6 577.9,176.0 560.7,177.3 543.3,178.4 525.8,179.5 508.1,180.4 490.4,181.1 472.8,181.7 455.3,182.2 438.1,182.5 421.2,182.6 404.7,182.6 388.7,182.5 373.2,182.2 358.3,181.7 344.2,181.1 330.7,180.3 318.1,179.4 306.3,178.4 295.4,177.2 285.5,175.9 276.5,174.6 268.4,173.0 261.4,171.4 255.3,169.8 250.3,168.0 246.3,166.1 243.2,164.2 241.2,162.3 240.0,160.3 239.9,158.2 240.6,156.2 242.3,154.1 244.7,152.0 248.0,149.9 252.1,147.8 257.0,145.8 262.5,143.7 268.8,141.7 275.6,139.6 283.1,137.7 291.1,135.7 299.6,133.8 308.6,132.0 318.1,130.1 327.9,128.4 338.2,126.7 348.7,125.0 359.6,123.4 370.8,121.9 382.2,120.4 393.8,119.0 405.6,117.7 443.9,113.5 447.3,113.1 449.5,112.9 451.2,112.8 452.6,112.7 453.9,112.6 455.0,112.5 456.1,112.5 457.2,112.5 458.2,112.5 459.2,112.5 460.2,112.5 461.2,112.5 462.3,112.6 463.4,112.6 464.5,112.7 465.7,112.8 467.0,112.9 468.3,113.0 469.8,113.1 471.4,113.3 473.1,113.5 475.0,113.7 477.2,113.9 479.7,114.2 482.7,114.6 486.4,115.1 491.5,115.7 499.7,116.8 595.5,129.1 709.7,143.9 720.7,145.3 727.7,146.2 732.8,146.9 736.8,147.4 740.2,147.9 743.0,148.3 745.4,148.7 747.6,149.0 749.4,149.3 751.0,149.5 752.4,149.8 753.7,150.0 754.7,150.2 755.7,150.5 756.4,150.7 757.1,150.9 757.5,151.0 757.9,151.2 758.1,151.4 758.2,151.6 758.1,151.8 757.9,152.0 757.5,152.2 756.8,152.4 755.9,152.6 754.6,152.9 752.7,153.3 749.4,153.9Z M705.1,158.0 693.1,159.9 680.3,161.8 666.9,163.6 652.9,165.4 638.3,167.1 623.1,168.7 607.5,170.2 591.5,171.7 575.0,173.0 558.3,174.2 541.3,175.4 524.2,176.3 507.0,177.2 489.8,177.9 472.7,178.5 455.7,178.9 438.9,179.2 422.5,179.4 406.4,179.4 390.8,179.2 375.8,178.9 361.3,178.5 347.5,177.9 334.4,177.1 322.1,176.3 310.6,175.3 300.0,174.2 290.2,172.9 281.4,171.6 273.6,170.1 266.7,168.6 260.7,166.9 255.7,165.2 251.8,163.5 248.7,161.6 246.6,159.7 245.5,157.8 245.3,155.9 245.9,153.9 247.4,151.9 249.8,149.8 253.0,147.8 256.9,145.8 261.6,143.8 266.9,141.8 272.9,139.8 279.6,137.9 286.8,135.9 294.6,134.1 302.9,132.2 311.6,130.4 320.8,128.7 330.4,126.9 340.4,125.3 350.7,123.7 361.4,122.1 372.3,120.7 383.4,119.2 394.8,117.9 406.3,116.6 443.8,112.5 447.2,112.1 449.3,111.9 451.0,111.8 452.4,111.7 453.6,111.6 454.7,111.5 455.8,111.5 456.8,111.5 457.8,111.5 458.8,111.5 459.8,111.5 460.8,111.5 461.9,111.6 462.9,111.6 464.1,111.7 465.2,111.8 466.5,111.9 467.8,112.0 469.2,112.1 470.7,112.3 472.4,112.5 474.3,112.7 476.5,112.9 478.9,113.2 481.9,113.6 485.5,114.0 490.5,114.7 498.6,115.7 592.4,127.7 704.0,142.1 714.8,143.4 721.5,144.3 726.5,145.0 730.4,145.5 733.7,146.0 736.5,146.3 738.8,146.7 740.9,147.0 742.7,147.3 744.3,147.5 745.6,147.8 746.8,148.0 747.9,148.2 748.8,148.4 749.5,148.6 750.1,148.8 750.6,149.0 750.9,149.2 751.2,149.4 751.2,149.5 751.2,149.7 750.9,149.9 750.5,150.1 749.9,150.3 749.0,150.5 747.7,150.8 745.8,151.2 742.6,151.7Z M693.9,157.6 682.4,159.4 670.2,161.2 657.3,163.0 643.9,164.6 630.0,166.2 615.5,167.8 600.6,169.2 585.3,170.6 569.7,171.8 553.8,173.0 537.6,174.0 521.4,175.0 505.0,175.8 488.7,176.4 472.4,177.0 456.3,177.4 440.4,177.6 424.8,177.8 409.5,177.7 394.7,177.6 380.4,177.3 366.6,176.9 353.5,176.3 341.0,175.6 329.3,174.8 318.3,173.8 308.2,172.7 298.8,171.6 290.4,170.3 282.8,168.9 276.2,167.4 270.4,165.9 265.6,164.3 261.6,162.6 258.6,160.8 256.5,159.0 255.3,157.2 254.9,155.3 255.4,153.4 256.8,151.5 258.9,149.6 261.7,147.7 265.4,145.7 269.7,143.8 274.7,141.9 280.3,140.0 286.5,138.1 293.3,136.3 300.7,134.5 308.5,132.7 316.8,131.0 325.6,129.3 334.7,127.7 344.2,126.1 354.0,124.5 364.1,123.0 374.5,121.6 385.2,120.2 396.1,118.9 407.1,117.7 443.1,113.7 446.3,113.4 448.4,113.2 450.0,113.0 451.3,112.9 452.5,112.9 453.6,112.8 454.6,112.8 455.6,112.8 456.6,112.7 457.5,112.8 458.5,112.8 459.5,112.8 460.5,112.8 461.5,112.9 462.6,113.0 463.7,113.1 464.9,113.1 466.2,113.3 467.5,113.4 469.0,113.5 470.7,113.7 472.5,113.9 474.5,114.2 476.9,114.4 479.8,114.8 483.3,115.2 488.1,115.9 495.9,116.9 586.3,128.5 693.2,142.4 703.5,143.7 709.9,144.6 714.7,145.2 718.5,145.7 721.6,146.2 724.2,146.5 726.5,146.9 728.4,147.2 730.1,147.4 731.6,147.7 732.9,147.9 734.1,148.1 735.1,148.3 735.9,148.5 736.6,148.7 737.2,148.9 737.7,149.1 738.0,149.3 738.2,149.4 738.2,149.6 738.2,149.8 737.9,149.9 737.5,150.1 736.9,150.3 736.0,150.5 734.8,150.8 733.0,151.2 729.9,151.7Z M655.1,148.3 654.8,150.9 653.9,153.4 652.3,155.8 650.2,158.0 647.4,160.1 644.1,161.9 640.3,163.7 635.9,165.2 631.1,166.5 625.8,167.5 620.2,168.4 614.2,169.1 607.9,169.5 601.3,169.7 594.6,169.7 587.7,169.5 580.7,169.1 573.6,168.4 566.5,167.6 559.4,166.5 552.4,165.3 545.5,163.9 538.7,162.4 532.1,160.7 525.7,158.9 519.6,156.9 513.8,154.9 508.2,152.7 503.0,150.4 498.2,148.1 493.7,145.7 489.7,143.3 486.1,140.8 482.9,138.3 480.1,135.8 477.8,133.3 476.0,130.8 474.7,128.3 473.8,125.9 473.5,123.5 M678.8,155.7 678.4,160.1 677.1,164.4 674.8,168.5 671.8,172.3 667.9,175.9 663.1,179.2 657.7,182.2 651.6,184.9 644.8,187.2 637.4,189.2 629.5,190.8 621.2,192.0 612.5,192.9 603.5,193.4 594.2,193.6 584.7,193.4 575.1,192.8 565.5,191.9 555.9,190.7 546.3,189.2 536.8,187.3 527.6,185.2 518.5,182.9 509.7,180.2 501.2,177.4 493.1,174.4 485.4,171.1 478.0,167.8 471.2,164.2 464.8,160.6 458.9,156.8 453.6,152.9 448.8,149.0 444.6,145.0 441.0,141.0 437.9,137.0 435.5,133.0 433.7,129.1 432.5,125.1 432.0,121.3 M658.4,162.4 658.0,168.7 656.5,174.9 654.1,180.8 650.8,186.4 646.6,191.7 641.5,196.5 635.6,201.0 629.0,205.0 621.7,208.6 613.7,211.6 605.2,214.2 596.2,216.2 586.9,217.8 577.2,218.8 567.2,219.3 557.1,219.4 546.8,218.9 536.5,218.0 526.2,216.6 515.9,214.8 505.8,212.6 495.9,209.9 486.2,206.9 476.9,203.6 467.8,199.9 459.1,195.9 450.9,191.7 443.1,187.2 435.7,182.5 428.9,177.6 422.6,172.6 416.9,167.4 411.7,162.0 407.2,156.6 403.2,151.2 399.9,145.7 397.3,140.1 395.2,134.6 393.9,129.1 393.2,123.7 M627.7,166.4 627.4,173.4 626.0,180.1 623.7,186.5 620.5,192.7 616.4,198.4 611.5,203.7 605.8,208.6 599.3,213.1 592.2,217.0 584.5,220.4 576.2,223.2 567.5,225.5 558.3,227.3 548.9,228.5 539.2,229.2 529.2,229.3 519.2,229.0 509.1,228.1 499.1,226.7 489.0,224.8 479.2,222.5 469.5,219.7 460.0,216.6 450.8,213.0 441.9,209.1 433.4,204.9 425.3,200.4 417.6,195.6 410.4,190.6 403.7,185.3 397.5,179.9 391.8,174.3 386.7,168.6 382.2,162.7 378.3,156.8 375.0,150.9 372.3,144.9 370.2,138.9 368.8,133.0 368.1,127.1 M592.9,170.2 592.6,177.2 591.4,184.0 589.3,190.5 586.3,196.7 582.4,202.5 577.8,208.0 572.4,212.9 566.2,217.4 559.5,221.4 552.1,224.9 544.3,227.8 535.9,230.2 527.2,232.0 518.2,233.3 508.9,234.0 499.4,234.2 489.8,233.8 480.2,232.9 470.5,231.5 460.9,229.7 451.5,227.4 442.2,224.6 433.1,221.4 424.2,217.9 415.7,214.0 407.5,209.7 399.7,205.2 392.2,200.3 385.3,195.2 378.8,189.9 372.8,184.4 367.3,178.8 362.3,173.0 357.9,167.1 354.1,161.1 350.9,155.0 348.3,149.0 346.2,142.9 344.8,136.9 344.1,130.9 M553.6,173.5 553.4,180.4 552.3,187.0 550.4,193.4 547.7,199.5 544.2,205.2 539.9,210.6 535.0,215.5 529.4,219.9 523.1,223.8 516.4,227.3 509.1,230.2 501.4,232.5 493.3,234.4 485.0,235.7 476.3,236.4 467.5,236.6 458.6,236.3 449.6,235.5 440.6,234.2 431.6,232.4 422.8,230.1 414.1,227.5 405.5,224.4 397.2,220.9 389.2,217.1 381.5,212.9 374.1,208.5 367.2,203.7 360.6,198.7 354.4,193.5 348.8,188.1 343.6,182.5 338.9,176.8 334.7,171.0 331.1,165.1 328.0,159.1 325.4,153.1 323.5,147.1 322.1,141.2 321.4,135.3 M509.0,176.2 508.9,182.7 508.1,188.9 506.4,194.9 504.1,200.6 501.1,206.0 497.4,211.1 493.0,215.7 488.1,219.9 482.6,223.6 476.6,226.9 470.2,229.6 463.4,231.9 456.2,233.7 448.7,234.9 441.0,235.7 433.2,235.9 425.2,235.7 417.1,235.0 409.0,233.8 401.0,232.1 393.0,230.1 385.1,227.6 377.4,224.7 369.9,221.5 362.6,217.9 355.6,213.9 348.9,209.7 342.5,205.3 336.5,200.5 330.9,195.6 325.7,190.5 321.0,185.2 316.7,179.8 312.8,174.3 309.5,168.6 306.6,163.0 304.3,157.3 302.5,151.6 301.2,145.9 300.4,140.3 M458.1,178.0 458.1,183.7 457.5,189.1 456.2,194.4 454.3,199.4 451.9,204.1 448.9,208.5 445.4,212.6 441.3,216.3 436.8,219.6 431.9,222.5 426.6,225.0 421.0,227.0 415.0,228.6 408.8,229.8 402.4,230.5 395.8,230.8 389.1,230.7 382.3,230.1 375.5,229.1 368.7,227.7 361.9,225.9 355.2,223.8 348.7,221.2 342.3,218.4 336.1,215.3 330.1,211.8 324.3,208.1 318.9,204.2 313.7,200.0 308.9,195.6 304.4,191.1 300.3,186.4 296.5,181.5 293.2,176.6 290.3,171.6 287.8,166.6 285.7,161.5 284.1,156.4 283.0,151.4 282.3,146.4 M397.7,178.3 397.7,182.4 397.3,186.5 396.5,190.4 395.3,194.2 393.6,197.7 391.6,201.0 389.1,204.1 386.3,206.9 383.2,209.4 379.8,211.7 376.0,213.6 372.0,215.2 367.8,216.4 363.4,217.4 358.8,218.0 354.1,218.3 349.2,218.2 344.3,217.9 339.4,217.2 334.4,216.2 329.5,214.9 324.6,213.3 319.7,211.4 315.0,209.3 310.4,207.0 306.0,204.4 301.7,201.6 297.6,198.5 293.7,195.4 290.1,192.0 286.7,188.5 283.6,184.9 280.8,181.2 278.3,177.4 276.1,173.6 274.2,169.7 272.6,165.8 271.4,161.9 270.5,158.0 270.0,154.1 M339.7,175.7 339.8,178.0 339.7,180.2 339.3,182.3 338.7,184.3 337.9,186.2 336.9,188.0 335.7,189.7 334.3,191.3 332.7,192.7 331.0,193.9 329.1,195.0 327.1,195.9 324.9,196.7 322.6,197.3 320.2,197.7 317.8,197.9 315.3,197.9 312.7,197.8 310.1,197.4 307.4,196.9 304.8,196.3 302.2,195.5 299.6,194.5 297.0,193.3 294.5,192.1 292.1,190.6 289.8,189.1 287.6,187.4 285.5,185.7 283.5,183.8 281.6,181.9 279.9,179.8 278.3,177.8 276.9,175.6 275.7,173.5 274.6,171.3 273.8,169.1 273.1,166.9 272.6,164.7 272.3,162.5 M565.3,134.2 640.9,145.5 658.2,149.0 668.3,151.5 674.5,153.5 678.1,155.2 679.8,156.6 679.8,157.8 678.3,158.8 675.5,159.7 671.6,160.3 667.4,161.0 663.2,161.6 658.9,162.3 654.5,162.9 650.0,163.6 645.4,164.2 640.7,164.8 635.9,165.4 631.0,166.0 626.1,166.6 621.0,167.2 615.8,167.8 610.6,168.4 605.2,168.9 599.7,169.5 594.2,170.0 588.5,170.6 582.7,171.1 576.8,171.6 570.8,172.1 564.7,172.6 558.5,173.1 552.1,173.6 545.7,174.0 539.1,174.5 532.4,174.9 525.5,175.3 518.6,175.7 511.4,176.1 504.2,176.4 496.8,176.8 489.2,177.1 481.5,177.4 473.6,177.6 465.5,177.9 457.2,178.1 448.7,178.2 439.9,178.3 431.0,178.4 421.7,178.4 412.1,178.4 402.2,178.3 391.8,178.1 381.0,177.9 369.4,177.4 357.0,176.8 343.2,176.0 326.9,174.6 295.5,170.2 M565.3,135.2 636.9,152.8 653.1,159.3 662.4,164.1 668.0,168.1 671.2,171.4 672.5,174.3 672.2,176.7 670.6,178.9 667.8,180.7 663.9,182.3 659.8,183.7 655.6,185.0 651.3,186.3 646.9,187.5 642.5,188.5 637.9,189.5 633.3,190.5 628.6,191.4 623.8,192.2 618.9,192.9 613.9,193.6 608.8,194.2 603.6,194.9 598.3,195.5 593.0,196.0 587.5,196.6 581.9,197.1 576.3,197.6 570.5,198.1 564.6,198.5 558.6,198.9 552.5,199.3 546.3,199.6 540.0,199.9 533.5,200.1 526.9,200.3 520.2,200.5 513.4,200.6 506.5,200.6 499.4,200.6 492.1,200.6 484.7,200.5 477.2,200.3 469.4,200.1 461.5,199.7 453.4,199.3 445.1,198.9 436.6,198.3 427.8,197.6 418.8,196.8 409.4,195.8 399.7,194.7 389.6,193.4 379.0,191.9 367.7,190.1 355.5,187.9 342.1,185.1 326.1,181.2 295.6,171.3 M565.3,136.0 625.3,158.1 638.2,166.9 645.3,173.5 649.3,179.0 651.3,183.6 651.7,187.6 650.8,191.1 648.8,194.1 645.8,196.8 641.9,199.1 637.8,201.2 633.7,203.1 629.4,204.8 625.2,206.4 620.8,207.9 616.3,209.2 611.8,210.4 607.2,211.5 602.5,212.5 597.7,213.3 592.9,214.1 588.0,214.8 583.0,215.5 577.9,216.1 572.7,216.7 567.4,217.3 562.1,217.8 556.6,218.3 551.1,218.7 545.5,219.1 539.8,219.4 533.9,219.7 528.0,219.9 522.0,220.1 515.9,220.2 509.7,220.2 503.3,220.2 496.9,220.1 490.3,219.9 483.6,219.7 476.8,219.3 469.8,218.9 462.7,218.4 455.5,217.8 448.1,217.0 440.5,216.2 432.7,215.2 424.8,214.1 416.6,212.8 408.2,211.4 399.5,209.7 390.5,207.8 381.1,205.7 371.3,203.2 360.9,200.3 349.7,196.8 337.4,192.5 322.9,186.6 295.7,172.3 M565.4,136.7 607.5,161.0 615.5,171.1 619.4,178.8 621.1,185.1 621.4,190.5 620.5,195.2 618.7,199.3 616.2,203.0 612.9,206.2 609.0,209.0 604.9,211.6 600.9,213.9 596.7,216.0 592.5,217.9 588.2,219.6 583.9,221.2 579.5,222.6 575.1,223.8 570.5,224.9 565.9,225.9 561.3,226.7 556.6,227.4 551.8,228.2 547.0,228.8 542.0,229.5 537.1,230.0 532.0,230.6 526.9,231.1 521.7,231.5 516.4,231.9 511.1,232.2 505.7,232.4 500.2,232.6 494.6,232.7 488.9,232.7 483.2,232.7 477.3,232.5 471.4,232.3 465.4,232.0 459.3,231.6 453.0,231.1 446.7,230.5 440.3,229.8 433.7,229.0 427.0,228.0 420.2,226.9 413.2,225.6 406.1,224.2 398.8,222.6 391.3,220.7 383.6,218.7 375.7,216.3 367.4,213.6 358.8,210.5 349.8,207.0 340.2,202.7 329.7,197.4 317.5,190.2 295.7,173.1 M565.4,137.1 585.6,161.2 588.0,171.6 588.1,179.5 587.1,186.1 585.4,191.8 583.1,196.7 580.3,201.1 577.1,204.9 573.5,208.4 569.6,211.5 565.6,214.3 561.6,216.8 557.5,219.1 553.4,221.2 549.2,223.1 545.0,224.7 540.8,226.2 536.5,227.5 532.2,228.7 527.8,229.7 523.3,230.5 518.9,231.3 514.3,232.1 509.8,232.8 505.1,233.4 500.5,234.0 495.8,234.6 491.0,235.1 486.2,235.5 481.3,235.9 476.4,236.2 471.4,236.5 466.4,236.7 461.3,236.8 456.2,236.8 451.0,236.7 445.7,236.6 440.4,236.4 435.0,236.1 429.5,235.6 424.0,235.1 418.4,234.5 412.7,233.7 406.9,232.9 401.1,231.8 395.1,230.7 389.1,229.3 383.0,227.8 376.7,226.1 370.3,224.2 363.8,222.0 357.1,219.5 350.2,216.7 343.1,213.4 335.8,209.6 328.1,205.0 319.8,199.4 310.5,191.8 295.8,173.7 M565.4,137.3 562.1,158.8 558.6,168.5 554.9,176.0 551.2,182.2 547.5,187.6 543.7,192.4 539.9,196.6 536.0,200.4 532.1,203.8 528.2,206.9 524.3,209.7 520.4,212.2 516.4,214.5 512.4,216.6 508.3,218.5 504.2,220.2 500.1,221.7 496.0,223.0 491.8,224.1 487.6,225.1 483.4,226.0 479.2,226.8 474.9,227.5 470.6,228.2 466.3,228.9 461.9,229.5 457.5,230.1 453.1,230.7 448.7,231.1 444.2,231.6 439.7,231.9 435.2,232.2 430.6,232.4 426.0,232.6 421.4,232.7 416.7,232.7 412.0,232.6 407.3,232.5 402.6,232.2 397.8,231.9 392.9,231.5 388.0,230.9 383.1,230.3 378.2,229.5 373.2,228.6 368.1,227.6 363.0,226.4 357.9,225.0 352.7,223.4 347.5,221.6 342.2,219.6 336.8,217.3 331.4,214.7 325.9,211.6 320.3,208.0 314.6,203.7 308.8,198.4 302.8,191.1 295.8,173.8 M565.4,137.1 539.3,154.1 530.2,162.4 523.1,168.8 516.9,174.2 511.3,178.9 506.2,183.1 501.5,186.8 497.1,190.2 492.9,193.4 489.0,196.2 485.1,198.8 481.2,201.2 477.3,203.4 473.4,205.3 469.4,207.1 465.5,208.6 461.5,210.0 457.5,211.3 453.5,212.4 449.5,213.3 445.4,214.2 441.4,215.0 437.3,215.7 433.3,216.4 429.2,217.1 425.1,217.7 421.0,218.4 416.9,218.9 412.8,219.4 408.7,219.9 404.6,220.3 400.5,220.7 396.3,221.0 392.2,221.2 388.0,221.4 383.8,221.5 379.7,221.6 375.5,221.6 371.3,221.5 367.1,221.3 362.9,221.1 358.7,220.7 354.5,220.3 350.2,219.8 346.0,219.1 341.8,218.3 337.6,217.4 333.4,216.3 329.2,215.1 325.1,213.7 320.9,212.1 316.8,210.2 312.8,208.1 308.8,205.6 304.9,202.6 301.2,199.0 297.8,194.6 294.9,188.4 295.8,173.7 M565.4,136.7 519.3,147.8 505.5,154.0 495.4,158.8 487.1,163.0 480.1,166.7 473.9,170.0 468.3,173.0 463.4,175.8 459.1,178.5 455.2,180.9 451.3,183.1 447.4,185.2 443.5,187.0 439.6,188.7 435.7,190.3 431.9,191.6 428.0,192.9 424.1,194.0 420.2,195.0 416.3,195.9 412.4,196.7 408.6,197.4 404.7,198.2 400.8,198.9 397.0,199.5 393.1,200.2 389.2,200.8 385.4,201.4 381.6,202.0 377.7,202.5 373.9,203.0 370.1,203.4 366.3,203.8 362.5,204.2 358.7,204.5 355.0,204.7 351.2,205.0 347.5,205.1 343.8,205.2 340.1,205.3 336.4,205.3 332.8,205.2 329.1,205.1 325.5,204.8 322.0,204.5 318.5,204.1 315.0,203.6 311.6,203.0 308.3,202.3 305.1,201.4 301.9,200.4 298.9,199.2 296.0,197.7 293.4,196.0 291.0,194.0 289.0,191.5 287.7,188.3 287.7,183.9 295.7,173.1 M565.3,136.0 503.7,140.4 486.3,144.0 474.0,147.1 464.1,149.8 455.9,152.2 448.9,154.5 442.8,156.6 437.5,158.6 432.9,160.6 429.0,162.4 425.1,164.2 421.2,165.8 417.3,167.2 413.5,168.6 409.6,169.8 405.8,170.9 402.0,172.0 398.1,172.9 394.3,173.8 390.5,174.6 386.8,175.3 383.0,176.0 379.2,176.7 375.5,177.3 371.8,178.0 368.1,178.6 364.4,179.3 360.8,179.9 357.1,180.5 353.5,181.0 349.9,181.6 346.3,182.1 342.8,182.6 339.3,183.1 335.8,183.6 332.3,184.0 328.9,184.4 325.4,184.8 322.1,185.1 318.8,185.4 315.5,185.7 312.3,185.9 309.1,186.1 306.0,186.2 302.9,186.3 299.9,186.4 297.1,186.4 294.3,186.3 291.6,186.1 289.1,185.9 286.7,185.6 284.5,185.2 282.6,184.6 281.0,183.9 279.8,183.0 279.2,181.8 279.6,180.3 281.8,178.0 295.7,172.3 M565.3,135.2 493.7,132.6 474.0,133.5 460.2,134.5 449.4,135.6 440.4,136.7 432.8,137.8 426.3,138.9 420.8,140.0 416.1,141.2 412.1,142.4 408.2,143.5 404.3,144.6 400.4,145.5 396.5,146.5 392.7,147.4 388.8,148.2 385.0,149.0 381.2,149.7 377.5,150.4 373.7,151.1 370.0,151.7 366.3,152.4 362.6,153.0 358.9,153.6 355.3,154.3 351.7,154.9 348.1,155.5 344.5,156.2 341.0,156.8 337.5,157.4 334.1,158.0 330.6,158.6 327.2,159.2 323.9,159.9 320.5,160.4 317.2,161.0 314.0,161.6 310.8,162.2 307.7,162.8 304.6,163.4 301.5,163.9 298.6,164.5 295.7,165.0 292.9,165.6 290.1,166.1 287.5,166.6 285.0,167.1 282.6,167.6 280.4,168.1 278.3,168.6 276.4,169.1 274.8,169.5 273.5,169.9 272.6,170.3 272.2,170.7 272.5,171.0 274.0,171.2 277.8,171.4 295.6,171.3 M565.3,134.2 490.0,125.0 469.5,123.2 455.1,122.2 443.9,121.6 434.6,121.3 426.7,121.2 420.1,121.3 414.4,121.5 409.6,121.8 405.5,122.3 401.5,122.7 397.6,123.2 393.6,123.7 389.7,124.2 385.9,124.6 382.0,125.2 378.2,125.7 374.4,126.2 370.6,126.7 366.8,127.3 363.1,127.8 359.4,128.4 355.7,129.0 352.1,129.6 348.5,130.2 344.9,130.8 341.3,131.4 337.8,132.0 334.3,132.7 330.8,133.3 327.4,134.0 324.0,134.7 320.6,135.4 317.3,136.2 314.0,136.9 310.8,137.7 307.6,138.4 304.5,139.2 301.4,140.1 298.4,140.9 295.5,141.8 292.6,142.6 289.8,143.6 287.1,144.5 284.5,145.5 282.0,146.5 279.7,147.5 277.5,148.6 275.4,149.8 273.5,150.9 271.9,152.2 270.5,153.5 269.5,154.9 268.8,156.4 268.8,158.0 269.5,159.9 271.6,162.0 276.1,164.6 295.5,170.2 M575.5,136.2 570.7,136.7 565.2,137.0 559.5,137.0 554.1,136.8 549.7,136.4 546.6,135.8 545.2,135.0 545.6,134.3 547.7,133.5 551.3,132.9 556.0,132.5 561.4,132.2 567.0,132.2 572.2,132.4 576.6,132.8 579.7,133.4 581.2,134.1 581.0,134.8 579.0,135.6Z M575.4,134.3 570.7,134.8 565.1,135.1 559.4,135.1 554.1,134.9 549.6,134.5 546.6,133.9 545.2,133.1 545.5,132.4 547.6,131.7 551.2,131.0 555.9,130.6 561.3,130.3 566.9,130.3 572.2,130.5 576.5,130.9 579.6,131.5 581.2,132.2 581.0,132.9 579.0,133.7Z M575.4,132.4 570.6,132.9 565.1,133.1 559.4,133.2 554.0,133.0 549.6,132.6 546.5,132.0 545.1,131.3 545.5,130.5 547.6,129.8 551.1,129.2 555.9,128.7 561.3,128.5 566.9,128.4 572.1,128.6 576.5,129.0 579.6,129.6 581.1,130.3 580.9,131.0 578.9,131.8Z M575.3,130.5 570.6,131.0 565.0,131.2 559.3,131.3 554.0,131.1 549.5,130.6 546.5,130.1 545.0,129.4 545.4,128.6 547.5,127.9 551.1,127.3 555.8,126.9 561.2,126.6 566.8,126.6 572.0,126.8 576.4,127.2 579.5,127.7 581.1,128.4 580.9,129.2 578.9,129.9Z M575.5,136.2 575.3,130.5 M570.7,136.7 570.6,131.0 M565.2,137.0 565.0,131.2 M559.5,137.0 559.3,131.3 M554.1,136.8 554.0,131.1 M549.7,136.4 549.5,130.6 M546.6,135.8 546.5,130.1 M545.2,135.0 545.0,129.4 M545.6,134.3 545.4,128.6 M547.7,133.5 547.5,127.9 M551.3,132.9 551.1,127.3 M556.0,132.5 555.8,126.9 M561.4,132.2 561.2,126.6 M567.0,132.2 566.8,126.6 M572.2,132.4 572.0,126.8 M576.6,132.8 576.4,127.2 M579.7,133.4 579.5,127.7 M581.2,134.1 581.1,128.4 M581.0,134.8 580.9,129.2 M579.0,135.6 578.9,129.9 M572.8,130.2 568.5,130.6 563.6,130.8 558.6,130.7 554.2,130.5 550.9,130.0 549.0,129.5 548.9,128.8 550.5,128.2 553.6,127.6 557.8,127.2 562.6,127.0 567.5,127.1 571.9,127.3 575.2,127.8 577.1,128.3 577.3,129.0 575.8,129.6Z M572.7,127.0 568.5,127.4 563.5,127.6 558.5,127.6 554.1,127.3 550.8,126.9 548.9,126.3 548.8,125.7 550.4,125.0 553.5,124.5 557.7,124.1 562.5,123.9 567.4,124.0 571.8,124.2 575.1,124.6 577.0,125.2 577.2,125.8 575.7,126.4Z M571.8,95.0 567.6,95.3 562.6,95.5 557.6,95.5 553.1,95.3 549.8,94.9 547.9,94.4 547.8,93.9 549.4,93.4 552.5,92.9 556.7,92.6 561.6,92.5 566.5,92.5 570.9,92.7 574.3,93.1 576.2,93.5 576.4,94.0 574.9,94.6Z M571.8,91.8 567.5,92.1 562.5,92.3 557.5,92.3 553.0,92.1 549.7,91.7 547.8,91.2 547.7,90.7 549.3,90.2 552.4,89.8 556.6,89.5 561.5,89.3 566.4,89.3 570.8,89.5 574.2,89.9 576.1,90.3 576.3,90.8 574.8,91.4Z M571.1,66.5 566.8,66.8 561.8,66.9 556.7,66.9 552.2,66.7 548.9,66.4 547.0,66.0 546.9,65.6 548.5,65.2 551.6,64.8 555.9,64.6 560.8,64.4 565.7,64.5 570.2,64.6 573.5,64.9 575.5,65.3 575.7,65.7 574.2,66.1Z M571.0,63.3 566.7,63.5 561.7,63.7 556.6,63.6 552.1,63.5 548.8,63.2 546.9,62.8 546.8,62.4 548.4,62.0 551.5,61.6 555.8,61.4 560.7,61.2 565.6,61.2 570.1,61.4 573.5,61.7 575.4,62.1 575.6,62.5 574.1,62.9Z M570.5,46.9 566.2,47.1 561.2,47.2 556.1,47.2 551.6,47.1 548.3,46.8 546.4,46.5 546.3,46.1 547.9,45.8 551.0,45.5 555.3,45.2 560.2,45.1 565.2,45.1 569.6,45.3 573.0,45.5 575.0,45.9 575.2,46.2 573.7,46.6Z M572.8,130.2 570.5,46.9 M568.5,130.6 566.2,47.1 M563.6,130.8 561.2,47.2 M558.6,130.7 556.1,47.2 M554.2,130.5 551.6,47.1 M550.9,130.0 548.3,46.8 M549.0,129.5 546.4,46.5 M548.9,128.8 546.3,46.1 M550.5,128.2 547.9,45.8 M553.6,127.6 551.0,45.5 M557.8,127.2 555.3,45.2 M562.6,127.0 560.2,45.1 M567.5,127.1 565.2,45.1 M571.9,127.3 569.6,45.3 M575.2,127.8 573.0,45.5 M577.1,128.3 575.0,45.9 M577.3,129.0 575.2,46.2 M575.8,129.6 573.7,46.6 M570.6,126.7 568.4,46.7 M564.2,127.2 561.9,47.0 M557.4,127.1 555.0,46.9 M552.7,126.4 550.3,46.6 M552.1,125.6 549.6,46.1 M555.6,124.8 553.1,45.6 M561.8,124.3 559.5,45.4 M568.6,124.4 566.4,45.4 M573.2,125.0 571.1,45.8 M574.0,125.9 571.9,46.3 M570.5,45.6 566.2,45.8 561.2,45.9 556.1,45.9 551.6,45.7 548.2,45.5 546.3,45.2 546.2,44.8 547.8,44.5 551.0,44.2 555.3,43.9 560.2,43.8 565.2,43.9 569.6,44.0 573.0,44.2 574.9,44.5 575.1,44.9 573.6,45.3Z M570.4,42.9 566.1,43.2 561.1,43.3 556.0,43.3 551.5,43.1 548.1,42.9 546.3,42.6 546.1,42.2 547.8,41.9 550.9,41.6 555.2,41.4 560.1,41.2 565.1,41.3 569.5,41.4 572.9,41.6 574.9,41.9 575.1,42.3 573.6,42.6Z M570.4,39.6 566.0,39.9 561.0,40.0 555.9,39.9 551.4,39.8 548.0,39.6 546.2,39.3 546.0,38.9 547.7,38.6 550.8,38.3 555.1,38.1 560.0,38.0 565.0,38.0 569.4,38.2 572.8,38.4 574.8,38.7 575.0,39.0 573.5,39.4Z M570.3,36.3 565.9,36.6 560.9,36.7 555.8,36.6 551.3,36.5 547.9,36.3 546.1,36.0 545.9,35.7 547.6,35.3 550.7,35.1 555.0,34.9 559.9,34.8 564.9,34.8 569.4,34.9 572.8,35.1 574.7,35.4 574.9,35.7 573.4,36.1Z M570.2,33.0 565.8,33.2 560.8,33.3 555.7,33.3 551.2,33.2 547.8,33.0 545.9,32.7 545.8,32.4 547.4,32.1 550.6,31.8 554.9,31.6 559.8,31.5 564.8,31.5 569.3,31.7 572.7,31.9 574.6,32.1 574.8,32.5 573.3,32.8Z M570.1,29.7 565.7,29.9 560.7,30.0 555.6,30.0 551.1,29.9 547.7,29.7 545.8,29.4 545.7,29.1 547.3,28.8 550.5,28.5 554.8,28.4 559.7,28.3 564.7,28.3 569.2,28.4 572.6,28.6 574.5,28.9 574.7,29.2 573.2,29.5Z M570.0,26.4 565.7,26.6 560.6,26.7 555.5,26.7 551.0,26.6 547.6,26.4 545.7,26.1 545.6,25.8 547.2,25.5 550.4,25.3 554.7,25.1 559.6,25.0 564.6,25.0 569.1,25.1 572.5,25.3 574.4,25.6 574.7,25.9 573.1,26.2Z M569.9,24.4 565.6,24.6 560.6,24.7 555.5,24.7 550.9,24.6 547.5,24.4 545.7,24.1 545.6,23.8 547.2,23.6 550.3,23.3 554.6,23.1 559.6,23.1 564.6,23.1 569.0,23.2 572.4,23.4 574.4,23.6 574.6,23.9 573.1,24.2Z M569.9,23.1 565.6,23.3 560.5,23.4 555.4,23.4 550.9,23.2 547.5,23.1 545.6,22.8 545.5,22.5 547.1,22.2 550.3,22.0 554.6,21.8 559.5,21.7 564.5,21.8 569.0,21.9 572.4,22.1 574.3,22.3 574.6,22.6 573.0,22.9Z M570.5,45.6 569.9,23.1 M566.2,45.8 565.6,23.3 M561.2,45.9 560.5,23.4 M556.1,45.9 555.4,23.4 M551.6,45.7 550.9,23.2 M548.2,45.5 547.5,23.1 M546.3,45.2 545.6,22.8 M546.2,44.8 545.5,22.5 M547.8,44.5 547.1,22.2 M551.0,44.2 550.3,22.0 M555.3,43.9 554.6,21.8 M560.2,43.8 559.5,21.7 M565.2,43.9 564.5,21.8 M569.6,44.0 569.0,21.9 M573.0,44.2 572.4,22.1 M574.9,44.5 574.3,22.3 M575.1,44.9 574.6,22.6 M573.6,45.3 573.0,22.9 M563.1,22.7 561.5,22.8 559.8,22.8 558.1,22.8 556.7,22.7 555.8,22.7 555.5,22.6 556.0,22.5 557.0,22.4 558.5,22.3 560.3,22.3 562.0,22.3 563.4,22.4 564.3,22.4 564.5,22.5 564.1,22.6Z M566.1,22.9 563.0,23.0 559.5,23.1 556.1,23.0 553.3,22.9 551.5,22.8 551.0,22.6 551.9,22.4 554.0,22.2 557.1,22.1 560.5,22.1 563.9,22.1 566.7,22.2 568.5,22.3 569.0,22.5 568.2,22.7Z M549.6,29.4 521.0,31.1 M549.4,23.7 520.8,25.3 M551.9,29.5 523.3,31.2 M551.7,23.9 523.1,25.5 M554.2,29.6 525.6,31.4 M554.0,24.0 525.4,25.6 M556.5,29.8 527.9,31.5 M556.3,24.1 527.7,25.8 M549.6,29.4 521.0,31.1 M556.5,29.8 527.9,31.5 M549.5,27.5 521.0,29.2 M556.4,27.9 527.8,29.6 M549.5,25.6 520.9,27.2 M556.3,26.0 527.8,27.7 M549.4,23.7 520.8,25.3 M556.3,24.1 527.7,25.8 M549.6,29.4 556.5,29.8 556.3,24.1 549.4,23.7Z M545.6,29.6 552.4,30.0 552.3,24.4 545.4,24.0Z M541.5,29.8 548.4,30.3 548.2,24.6 541.4,24.2Z M537.5,30.1 544.4,30.5 544.2,24.8 537.3,24.4Z M533.4,30.3 540.3,30.8 540.1,25.1 533.2,24.7Z M529.3,30.6 536.2,31.0 536.0,25.3 529.1,24.9Z M525.2,30.8 532.0,31.2 531.8,25.5 525.0,25.1Z M521.0,31.1 527.9,31.5 527.7,25.8 520.8,25.3Z M546.7,81.5 557.8,82.6 557.1,61.1 546.0,60.1Z M539.7,81.5 550.8,82.6 550.1,61.9 539.0,61.0Z M532.7,81.6 543.7,82.7 543.1,62.8 532.0,61.8Z M525.5,81.6 536.6,82.7 535.9,63.6 524.8,62.6Z M518.3,81.6 529.4,82.7 528.7,64.5 517.6,63.5Z M511.0,81.6 522.1,82.7 521.4,65.4 510.3,64.4Z M503.7,81.6 514.7,82.8 514.1,66.2 503.0,65.2Z M496.3,81.6 507.3,82.8 506.7,67.1 495.6,66.1Z M488.7,81.7 499.8,82.8 499.2,68.0 488.1,67.0Z M481.2,81.7 492.2,82.8 491.6,68.9 480.5,67.9Z M473.5,81.7 484.5,82.9 483.9,69.8 472.9,68.8Z M546.7,81.5 473.5,81.7 M546.0,60.1 472.9,68.8 M549.5,81.8 476.2,82.0 M548.8,60.4 475.6,69.0 M552.2,82.1 479.0,82.3 M551.6,60.6 478.4,69.3 M555.0,82.3 481.8,82.6 M554.3,60.8 481.2,69.6 M557.8,82.6 484.5,82.9 M557.1,61.1 483.9,69.8 M546.7,81.5 473.5,81.7 M557.8,82.6 484.5,82.9 M546.5,76.2 473.4,78.5 M557.6,77.3 484.4,79.6 M546.4,70.9 473.2,75.3 M557.4,71.9 484.2,76.4 M546.2,65.5 473.0,72.0 M557.3,66.5 484.1,73.1 M546.0,60.1 472.9,68.8 M557.1,61.1 483.9,69.8 M487.3,79.6 495.8,80.5 495.4,70.4 486.9,69.6Z M485.2,79.7 493.7,80.6 493.3,70.6 484.8,69.8Z M483.1,79.7 491.6,80.6 491.2,70.8 482.7,70.0Z M481.0,79.8 489.5,80.6 489.1,71.0 480.6,70.2Z M478.9,79.8 487.4,80.7 487.0,71.2 478.5,70.4Z M476.8,79.9 485.3,80.7 484.9,71.5 476.4,70.6Z M474.7,79.9 483.2,80.8 482.7,71.7 474.2,70.8Z M500.7,89.5 497.5,89.7 493.9,89.8 490.6,89.7 488.4,89.4 487.5,89.1 488.3,88.7 490.5,88.4 493.7,88.2 497.2,88.1 500.5,88.2 502.7,88.5 503.6,88.8 502.9,89.2Z M500.6,87.5 497.4,87.7 493.8,87.7 490.5,87.6 488.3,87.4 487.5,87.1 488.2,86.7 490.4,86.4 493.6,86.2 497.2,86.1 500.4,86.2 502.6,86.5 503.5,86.8 502.8,87.2Z M500.5,85.5 497.3,85.7 493.7,85.7 490.5,85.6 488.2,85.4 487.4,85.0 488.1,84.7 490.3,84.4 493.5,84.2 497.1,84.1 500.3,84.2 502.6,84.5 503.4,84.8 502.7,85.2Z M500.4,84.1 497.2,84.3 493.6,84.4 490.4,84.3 488.1,84.0 487.3,83.7 488.1,83.3 490.3,83.0 493.5,82.8 497.0,82.8 500.2,82.9 502.5,83.1 503.4,83.5 502.6,83.8Z M500.4,82.8 497.2,83.0 493.6,83.0 490.3,82.9 488.1,82.7 487.2,82.4 488.0,82.0 490.2,81.7 493.4,81.5 497.0,81.5 500.2,81.6 502.4,81.8 503.3,82.1 502.6,82.5Z M500.7,89.5 500.4,82.8 M497.5,89.7 497.2,83.0 M493.9,89.8 493.6,83.0 M490.6,89.7 490.3,82.9 M488.4,89.4 488.1,82.7 M487.5,89.1 487.2,82.4 M488.3,88.7 488.0,82.0 M490.5,88.4 490.2,81.7 M493.7,88.2 493.4,81.5 M497.2,88.1 497.0,81.5 M500.5,88.2 500.2,81.6 M502.7,88.5 502.4,81.8 M503.6,88.8 503.3,82.1 M502.9,89.2 502.6,82.5 M554.3,279.2 549.9,140.0 M558.0,280.1 553.6,140.5 M569.8,282.9 565.8,142.2 M573.6,283.8 569.7,142.7 M572.7,278.9 568.9,139.8 M574.8,279.4 571.0,140.1 M575.2,156.3 565.6,157.0 555.4,156.9 548.5,155.8 547.5,154.3 552.7,152.9 562.1,152.2 572.1,152.3 579.1,153.4 580.3,154.9Z M575.0,150.0 565.5,150.7 555.2,150.6 548.3,149.5 547.3,148.1 552.5,146.7 561.9,146.0 572.0,146.2 578.9,147.2 580.1,148.6Z M574.8,143.7 565.3,144.4 555.0,144.2 548.0,143.2 547.1,141.8 552.3,140.5 561.7,139.8 571.8,140.0 578.7,140.9 580.0,142.3Z M575.2,156.3 574.8,143.7 M565.6,157.0 565.3,144.4 M555.4,156.9 555.0,144.2 M548.5,155.8 548.0,143.2 M547.5,154.3 547.1,141.8 M552.7,152.9 552.3,140.5 M562.1,152.2 561.7,139.8 M572.1,152.3 571.8,140.0 M579.1,153.4 578.7,140.9 M580.3,154.9 580.0,142.3 M552.8,168.9 552.6,167.2 552.0,165.6 551.1,164.3 550.1,163.3 549.0,162.9 547.8,163.0 546.9,163.6 546.1,164.7 545.6,166.1 545.5,167.8 545.7,169.5 546.3,171.1 547.1,172.4 548.2,173.4 549.3,173.8 550.4,173.7 551.4,173.1 552.2,172.0 552.7,170.6Z M554.4,169.2 554.1,166.7 553.3,164.4 552.0,162.5 550.5,161.1 548.9,160.5 547.3,160.6 545.8,161.5 544.7,163.1 544.1,165.1 543.9,167.5 544.2,170.0 545.1,172.3 546.3,174.2 547.8,175.6 549.4,176.2 551.0,176.1 552.4,175.2 553.6,173.7 554.2,171.6Z M556.0,169.5 555.6,166.2 554.5,163.2 552.9,160.6 551.0,158.9 548.8,158.0 546.7,158.2 544.8,159.4 543.4,161.4 542.5,164.1 542.3,167.3 542.7,170.5 543.8,173.5 545.4,176.0 547.3,177.8 549.5,178.6 551.6,178.5 553.5,177.4 554.9,175.3 555.8,172.6Z M557.7,169.7 557.1,165.7 555.8,162.0 553.8,158.8 551.4,156.6 548.7,155.6 546.1,155.8 543.8,157.3 542.1,159.8 541.0,163.2 540.7,167.0 541.2,171.0 542.6,174.7 544.5,177.8 546.9,180.0 549.5,181.0 552.2,180.9 554.5,179.5 556.3,177.0 557.4,173.6Z M558.5,168.6 558.2,166.1 557.4,163.8 556.1,161.8 554.6,160.5 553.0,159.9 551.4,160.0 550.0,160.9 548.9,162.4 548.2,164.5 548.0,166.9 548.3,169.3 549.2,171.6 550.4,173.6 551.9,174.9 553.5,175.6 555.1,175.4 556.5,174.6 557.7,173.0 558.3,171.0Z M561.8,169.1 561.3,165.1 559.9,161.3 557.9,158.2 555.5,156.0 552.8,155.0 550.2,155.2 547.9,156.7 546.2,159.2 545.1,162.5 544.8,166.4 545.3,170.3 546.6,174.0 548.6,177.1 551.0,179.3 553.6,180.4 556.2,180.2 558.6,178.8 560.4,176.3 561.5,173.0Z M503.5,223.7 497.3,224.7 490.3,225.3 483.0,225.5 475.9,225.4 469.5,224.9 464.2,224.1 460.5,223.0 458.6,221.7 458.6,220.3 460.4,218.9 463.9,217.7 468.9,216.5 474.9,215.7 481.7,215.1 488.8,214.9 495.6,215.0 501.9,215.5 507.0,216.2 510.8,217.3 513.0,218.5 513.3,219.9 511.7,221.3 508.4,222.6Z M502.6,222.3 496.7,223.1 490.0,223.7 483.1,224.0 476.3,223.8 470.2,223.4 465.2,222.6 461.7,221.6 459.8,220.3 459.8,219.0 461.5,217.7 464.9,216.5 469.6,215.5 475.4,214.6 481.9,214.1 488.6,213.9 495.1,214.0 501.1,214.4 506.0,215.2 509.6,216.1 511.6,217.3 511.9,218.6 510.4,219.9 507.3,221.2Z M501.7,221.5 496.1,222.3 489.8,222.8 483.2,223.0 476.8,222.9 471.0,222.5 466.2,221.7 462.9,220.8 461.1,219.6 461.1,218.4 462.7,217.1 465.9,216.0 470.4,215.0 475.9,214.2 482.0,213.7 488.4,213.5 494.6,213.6 500.3,214.0 505.0,214.7 508.4,215.6 510.3,216.8 510.6,218.0 509.2,219.2 506.2,220.4Z M500.8,221.0 495.6,221.7 489.6,222.2 483.3,222.5 477.2,222.4 471.8,221.9 467.3,221.2 464.1,220.3 462.4,219.2 462.4,218.1 463.9,216.9 466.9,215.8 471.2,214.8 476.4,214.1 482.2,213.6 488.3,213.4 494.2,213.5 499.5,213.9 504.0,214.6 507.2,215.5 509.0,216.5 509.3,217.7 507.9,218.8 505.1,220.0Z M500.0,221.1 495.0,221.8 489.4,222.3 483.5,222.5 477.7,222.4 472.6,222.0 468.3,221.4 465.3,220.5 463.7,219.5 463.7,218.4 465.1,217.3 468.0,216.2 472.0,215.3 476.9,214.6 482.4,214.2 488.2,214.0 493.7,214.1 498.8,214.4 503.0,215.1 506.0,215.9 507.8,216.9 508.0,218.0 506.7,219.1 504.0,220.2Z M499.2,221.6 494.5,222.3 489.2,222.7 483.6,222.9 478.2,222.8 473.4,222.4 469.4,221.8 466.6,221.0 465.1,220.0 465.0,219.0 466.4,217.9 469.0,217.0 472.8,216.1 477.5,215.5 482.7,215.0 488.1,214.8 493.3,214.9 498.1,215.3 502.0,215.9 504.9,216.7 506.5,217.6 506.7,218.6 505.5,219.7 503.0,220.7Z M498.4,222.0 494.0,222.7 489.0,223.1 483.8,223.3 478.8,223.2 474.2,222.9 470.5,222.3 467.8,221.5 466.4,220.6 466.4,219.6 467.6,218.6 470.1,217.7 473.7,216.9 478.0,216.3 482.9,215.9 487.9,215.7 492.9,215.8 497.3,216.1 501.0,216.7 503.7,217.4 505.3,218.3 505.5,219.3 504.3,220.3 501.9,221.2Z M497.2,222.4 493.2,223.0 488.7,223.4 484.1,223.6 479.5,223.5 475.4,223.2 472.1,222.6 469.7,221.9 468.4,221.1 468.3,220.2 469.5,219.4 471.7,218.5 474.9,217.8 478.8,217.2 483.2,216.9 487.8,216.7 492.2,216.8 496.2,217.1 499.6,217.6 502.0,218.3 503.4,219.1 503.5,220.0 502.5,220.8 500.3,221.7Z M495.5,222.7 492.1,223.2 488.3,223.6 484.4,223.7 480.5,223.6 477.0,223.4 474.2,222.9 472.1,222.3 471.0,221.6 471.0,220.9 471.9,220.1 473.8,219.4 476.6,218.8 479.9,218.3 483.6,218.0 487.5,217.9 491.3,217.9 494.8,218.2 497.6,218.6 499.7,219.2 500.8,219.9 500.9,220.6 500.1,221.4 498.2,222.1Z M493.8,222.4 491.1,222.8 487.9,223.1 484.7,223.2 481.5,223.1 478.6,222.9 476.2,222.5 474.5,222.0 473.6,221.5 473.6,220.8 474.4,220.2 475.9,219.6 478.2,219.1 481.0,218.7 484.0,218.5 487.3,218.3 490.4,218.4 493.2,218.6 495.6,219.0 497.3,219.5 498.2,220.0 498.3,220.6 497.6,221.3 496.1,221.9Z M503.5,223.7 495.5,222.7 M497.3,224.7 492.1,223.2 M490.3,225.3 488.3,223.6 M483.0,225.5 484.4,223.7 M475.9,225.4 480.5,223.6 M469.5,224.9 477.0,223.4 M464.2,224.1 474.2,222.9 M460.5,223.0 472.1,222.3 M458.6,221.7 471.0,221.6 M458.6,220.3 471.0,220.9 M460.4,218.9 471.9,220.1 M463.9,217.7 473.8,219.4 M468.9,216.5 476.6,218.8 M474.9,215.7 479.9,218.3 M481.7,215.1 483.6,218.0 M488.8,214.9 487.5,217.9 M495.6,215.0 491.3,217.9 M501.9,215.5 494.8,218.2 M507.0,216.2 497.6,218.6 M510.8,217.3 499.7,219.2 M513.0,218.5 500.8,219.9 M513.3,219.9 500.9,220.6 M511.7,221.3 500.1,221.4 M508.4,222.6 498.2,222.1 M500.4,268.0 491.1,269.2 481.0,269.3 472.8,268.3 468.7,266.3 469.9,264.1 475.9,262.1 485.0,260.9 494.9,260.8 503.0,261.8 507.2,263.7 506.3,266.0Z M500.0,258.5 490.7,259.7 480.5,259.8 472.3,258.8 468.3,256.9 469.4,254.7 475.4,252.8 484.6,251.6 494.5,251.5 502.6,252.5 506.8,254.3 505.9,256.5Z M498.7,229.8 489.4,230.9 479.1,231.0 470.9,230.0 466.8,228.3 468.0,226.3 474.0,224.5 483.2,223.5 493.2,223.4 501.4,224.3 505.6,226.0 504.6,228.0Z M500.4,268.0 498.4,223.3 M491.1,269.2 489.1,224.4 M481.0,269.3 478.8,224.5 M472.8,268.3 470.5,223.6 M468.7,266.3 466.5,221.9 M469.9,264.1 467.7,219.9 M475.9,262.1 473.7,218.2 M485.0,260.9 482.9,217.2 M494.9,260.8 492.9,217.1 M503.0,261.8 501.1,218.0 M507.2,263.7 505.3,219.6 M506.3,266.0 504.4,221.6 M498.2,273.7 490.8,274.7 482.7,274.8 476.2,273.9 472.9,272.4 473.8,270.5 478.6,268.9 485.9,267.9 493.8,267.8 500.3,268.7 503.6,270.2 502.9,272.1Z M498.2,273.7 497.9,267.4 M490.8,274.7 490.5,268.4 M482.7,274.8 482.4,268.5 M476.2,273.9 475.8,267.6 M472.9,272.4 472.6,266.1 M473.8,270.5 473.5,264.3 M478.6,268.9 478.3,262.7 M485.9,267.9 485.6,261.7 M493.8,267.8 493.5,261.6 M500.3,268.7 500.0,262.5 M503.6,270.2 503.4,264.0 M502.9,272.1 502.6,265.8 M490.5,287.2 488.8,287.4 487.3,287.2 486.8,286.9 487.6,286.5 489.3,286.3 490.8,286.4 491.3,286.8Z M487.3,219.1 485.6,219.3 484.1,219.1 483.6,218.8 484.4,218.5 486.1,218.4 487.7,218.5 488.2,218.8Z M490.5,287.2 487.3,219.1 M488.8,287.4 485.6,219.3 M487.3,287.2 484.1,219.1 M486.8,286.9 483.6,218.8 M487.6,286.5 484.4,218.5 M489.3,286.3 486.1,218.4 M490.8,286.4 487.7,218.5 M491.3,286.8 488.2,218.8 M504.8,289.7 503.0,248.7 M502.8,289.7 501.0,248.7 M503.0,289.2 501.2,248.2 M505.0,289.2 503.2,248.2"/></svg></div>
<div style="left:50px;top:171px;width:2px;height:19px;background:#2d2d2d;border-right:1px solid #5a5a5a;"></div>
<div style="left:49px;top:176px;width:4px;height:8px;border:1px solid #777;background:#3a3a3a;"></div>
<div style="left:161px;top:171px;width:2px;height:19px;background:#2d2d2d;border-right:1px solid #5a5a5a;"></div>
<div style="left:160px;top:176px;width:4px;height:8px;border:1px solid #777;background:#3a3a3a;"></div>
<div style="left:311px;top:171px;width:2px;height:19px;background:#2d2d2d;border-right:1px solid #5a5a5a;"></div>
<div style="left:310px;top:176px;width:4px;height:8px;border:1px solid #777;background:#3a3a3a;"></div>
<div style="left:462px;top:171px;width:2px;height:19px;background:#2d2d2d;border-right:1px solid #5a5a5a;"></div>
<div style="left:461px;top:176px;width:4px;height:8px;border:1px solid #777;background:#3a3a3a;"></div>
<div style="left:494px;top:171px;width:2px;height:19px;background:#2d2d2d;border-right:1px solid #5a5a5a;"></div>
<div style="left:493px;top:176px;width:4px;height:8px;border:1px solid #777;background:#3a3a3a;"></div>
<div style="left:170px;top:172px;width:17px;height:17px;background:#66768a;border-radius:3px;box-shadow:0 0 0 1px #2c2c2c;"></div>
<div style="left:230px;top:172px;width:17px;height:17px;background:#7a7a7a;border-radius:3px;box-shadow:0 0 0 1px #2c2c2c;"></div>
<div style="left:321px;top:172px;width:17px;height:17px;background:#666;border-radius:3px;box-shadow:0 0 0 1px #2c2c2c;"></div>
<svg style="left:58px;top:171px;overflow:visible;" width="18" height="18" viewBox="0 0 18 18"><g transform="translate(1.500,1.500)"><circle cx="4.300" cy="4.800" r="3.500" fill="#8a8a8a" stroke="#f0f0f0" stroke-width="1.300"/><circle cx="4.300" cy="4.800" r="2.200" fill="none" stroke="#d0d0d0" stroke-width=".6"/><ellipse cx="4.500" cy="5" rx=".9" ry="1.300" fill="#000"/><circle cx="10.700" cy="3.800" r="2.900" fill="#8a8a8a" stroke="#f0f0f0" stroke-width="1.200"/><ellipse cx="10.800" cy="3.800" rx=".8" ry="1" fill="#000"/><path d="M4.500 10.500l7-2.300 1.300 3.800-6.500 3.200c-1.500.5-2.500-.5-2.800-1.500z" fill="#050505" stroke="#9a9a9a" stroke-width=".5"/><path d="M5.800 11.800l4.200-1.500" stroke="#d8d8d8" stroke-width=".9"/><ellipse cx="14.300" cy="8.700" rx="2.300" ry="2" fill="#050505"/><path d="M12.600 9.600l1.600-.5" stroke="#aaa" stroke-width=".7"/><path d="M12.500 11.300h3.500" stroke="#9a9a9a" stroke-width=".6"/></g></svg>
<svg style="left:78px;top:171px;overflow:visible;" width="18" height="18" viewBox="0 0 18 18"><g transform="translate(0,1) scale(.82)"><circle cx="4.300" cy="4.800" r="3.500" fill="#8a8a8a" stroke="#f0f0f0" stroke-width="1.300"/><circle cx="4.300" cy="4.800" r="2.200" fill="none" stroke="#d0d0d0" stroke-width=".6"/><ellipse cx="4.500" cy="5" rx=".9" ry="1.300" fill="#000"/><circle cx="10.700" cy="3.800" r="2.900" fill="#8a8a8a" stroke="#f0f0f0" stroke-width="1.200"/><ellipse cx="10.800" cy="3.800" rx=".8" ry="1" fill="#000"/><path d="M4.500 10.500l7-2.300 1.300 3.800-6.500 3.200c-1.500.5-2.500-.5-2.800-1.500z" fill="#050505" stroke="#9a9a9a" stroke-width=".5"/><path d="M5.800 11.800l4.200-1.500" stroke="#d8d8d8" stroke-width=".9"/><ellipse cx="14.300" cy="8.700" rx="2.300" ry="2" fill="#050505"/><path d="M12.600 9.600l1.600-.5" stroke="#aaa" stroke-width=".7"/><path d="M12.500 11.300h3.500" stroke="#9a9a9a" stroke-width=".6"/></g><rect x="9.500" y="7.500" width="7" height="9" fill="#f4f4f4" stroke="#555" stroke-width=".6"/><path d="M11 9.500h4M11 11.500h4M11 13.500h4M11 15.300h4" stroke="#555" stroke-width=".8"/></svg>
<svg style="left:98px;top:171px;overflow:visible;" width="18" height="18" viewBox="0 0 18 18"><rect x="1.500" y="3.500" width="14" height="11.500" fill="#f4f4f4" stroke="#aaa" stroke-width=".8"/><rect x="3" y="5" width="5" height="8.500" fill="#ddd" stroke="#bbb" stroke-width=".5"/><path d="M9.500 1.500h4v11l-2-2-2 2z" fill="#28a838" stroke="#106018" stroke-width=".6"/></svg>
<svg style="left:118px;top:171px;overflow:visible;" width="18" height="18" viewBox="0 0 18 18"><path d="M1 12.500l10-4.500 6 3.500-10 5z" fill="#e8e8e8" stroke="#999" stroke-width=".6"/><path d="M5 5l8.500-3.500v8L5 13z" fill="#3a70c0" stroke="#ddd" stroke-width=".7"/><path d="M5 10l3.500-3 2.500 1.500 2.500-3v4L5 13z" fill="#38a838"/><circle cx="10" cy="5" r="1.300" fill="#f0e040"/></svg>
<svg style="left:138px;top:171px;overflow:visible;" width="18" height="18" viewBox="0 0 18 18"><path d="M11 11l-6 6" stroke="#8a5420" stroke-width="2.200" stroke-linecap="round"/><path d="M5.500 1v10M.5 6h10" stroke="#d82028" stroke-width="1.300"/><path d="M5.500 0l-1.800 2.500h3.600zM5.500 12l-1.800-2.500h3.600zM-.5 6l2.500-1.800v3.600zM11.500 6l-2.500-1.800v3.600z" fill="#d82028"/><circle cx="12.500" cy="6.500" r="3.800" fill="#f4f4f4" stroke="#999" stroke-width=".8"/><path d="M12.500 4.300v4.400M10.300 6.500h4.400" stroke="#d82028" stroke-width="1.300"/></svg>
<svg style="left:170px;top:171px;overflow:visible;" width="18" height="18" viewBox="0 0 18 18"><path d="M1.500 9l7.500-4.500 7.500 4.500-7.500 4.500z M5.200 6.800l7.500 4.500M12.800 6.800l-7.500 4.500" stroke="#d4dce8" stroke-width="1.100" fill="#8494a8"/></svg>
<svg style="left:189px;top:171px;overflow:visible;" width="18" height="18" viewBox="0 0 18 18"><rect x="1.500" y="3" width="15" height="12" fill="#111" stroke="#eee" stroke-width=".8"/><rect x="2.500" y="6" width="13" height="6" fill="#8cc4f0"/><path d="M6 6v6M9 6v6M12.500 6v6" stroke="#111" stroke-width="1"/><path d="M3 4.500h12M3 13.500h12" stroke="#eee" stroke-width="1" stroke-dasharray="1.200 1"/></svg>
<svg style="left:209px;top:171px;overflow:visible;" width="18" height="18" viewBox="0 0 18 18"><rect x="1.500" y="3" width="15" height="12.500" fill="#f2f2f2" stroke="#fff" stroke-width=".6"/><circle cx="9" cy="9.300" r="5" fill="url(#gBall)"/></svg>
<svg style="left:230px;top:171px;overflow:visible;" width="18" height="18" viewBox="0 0 18 18"><circle cx="9" cy="9" r="4.300" fill="#c8c8c8" stroke="#4a4a4a" stroke-width="1"/></svg>
<svg style="left:249px;top:171px;overflow:visible;" width="18" height="18" viewBox="0 0 18 18"><rect x="2" y="3" width="14.500" height="12.500" fill="#ddd" stroke="#eee" stroke-width=".6"/><path d="M2 3l14.500 12.500M16.500 3L2 15.500M9.200 3v12.500M2 9.200h14.500M5.500 3v12.500M13 3v12.500M2 6h14.500M2 12.500h14.500" stroke="#333" stroke-width=".7"/></svg>
<svg style="left:269px;top:171px;overflow:visible;" width="18" height="18" viewBox="0 0 18 18"><rect x="2" y="3" width="14.500" height="12.500" fill="#f2f2f2" stroke="#28b838" stroke-width="1.300"/><circle cx="6" cy="7" r="1.900" fill="url(#gBall)"/><circle cx="12" cy="7.500" r="1.900" fill="url(#gBall)"/><circle cx="8.500" cy="11.500" r="1.900" fill="url(#gBall)"/></svg>
<svg style="left:290px;top:171px;overflow:visible;" width="18" height="18" viewBox="0 0 18 18"><rect x="2" y="3" width="14.500" height="12.500" fill="#f2f2f2" stroke="#28b838" stroke-width="1.300"/><path d="M5 6.800V5.500h8.500v1.300M9.200 5.500v7.500M7.500 13h3.500" stroke="#111" stroke-width="1.500" fill="none"/></svg>
<svg style="left:320px;top:171px;overflow:visible;" width="18" height="18" viewBox="0 0 18 18"><path d="M2.500 5.500l7-2.500 6 2v8l-6.500 3-6.500-2.500zM2.500 5.500l6.500 2 6.500-2.500M9 7.500v8.500" fill="none" stroke="#c8d4e0" stroke-width="1.100" stroke-linejoin="round"/><path d="M2.500 13.500l7-2.500 6 2M9.500 3v8" stroke="#9aa8b8" stroke-width=".7" fill="none"/></svg>
<svg style="left:340px;top:171px;overflow:visible;" width="18" height="18" viewBox="0 0 18 18"><path d="M2 5.500l7-3 7 2.500v8.500l-7 3-7-3z" fill="#5a9ad8"/><path d="M2 5.500l7 2.500 7-3-7-2.500z" fill="#a8d4fc"/><path d="M9 8v8.500l7-3V5z" fill="#3a78bc"/></svg>
<svg style="left:360px;top:171px;overflow:visible;" width="18" height="18" viewBox="0 0 18 18"><path d="M2 5.500l7-3 7 2.500v8.500l-7 3-7-3z" fill="#5a9ad8"/><path d="M2 5.500l7 2.500 7-3-7-2.500z" fill="#a8d4fc"/><path d="M9 8v8.500l7-3V5z" fill="#3a78bc"/><path d="M2 5.500l7-3 7 2.500v8.500l-7 3-7-3zM2 5.500l7 2.500 7-3M9 8v8.500" fill="none" stroke="#f4f4f4" stroke-width="1" stroke-linejoin="round"/></svg>
<svg style="left:380px;top:171px;overflow:visible;" width="18" height="18" viewBox="0 0 18 18"><defs><clipPath id="ckc"><circle cx="9" cy="9" r="7"/></clipPath></defs><circle cx="9" cy="9" r="7" fill="#f6f6f6"/><g clip-path="url(#ckc)" fill="#0c0c0c"><path d="M2 2h3.500v3.500H2zM9 1.500h3.500V5.500H9zM5.500 5.500H9V9H5.500zM12.500 5.500H16V9h-3.500zM2 9h3.500v3.500H2zM9 9h3.500v3.500H9zM5.500 12.500H9V16H5.500zM12.500 12.500H16V16h-3.500z"/></g><circle cx="9" cy="9" r="7" fill="none" stroke="#222" stroke-width=".6"/></svg>
<svg style="left:400px;top:171px;overflow:visible;" width="18" height="18" viewBox="0 0 18 18"><circle cx="9" cy="9" r="7.500" fill="url(#gYellowBall)"/></svg>
<svg style="left:420px;top:171px;overflow:visible;" width="18" height="18" viewBox="0 0 18 18"><ellipse cx="9" cy="15" rx="6" ry="1.500" fill="#888" opacity=".5"/><circle cx="9" cy="8" r="6" fill="url(#gGrayBall)"/></svg>
<svg style="left:440px;top:171px;overflow:visible;" width="18" height="18" viewBox="0 0 18 18"><circle cx="9" cy="9" r="7" fill="url(#gGoldBall)"/></svg>
<svg style="left:472px;top:171px;overflow:visible;" width="18" height="18" viewBox="0 0 18 18"><rect x="2.500" y="2.500" width="12" height="10" fill="none" stroke="#38d838" stroke-width="1.400" stroke-dasharray="2 1.300"/><g transform="translate(9,7.5) scale(0.85)"><path d="M0 0l0 11 2.600-2.400 2.200 4.800 2-.9-2.200-4.700 3.600-.2z" fill="#b01820" stroke="#fff" stroke-width=".9" stroke-linejoin="round"/></g></svg>
<svg style="left:502px;top:171px;overflow:visible;" width="18" height="18" viewBox="0 0 18 18"><rect x="1" y="1.500" width="16" height="15.500" rx="3" fill="#2c2c2c"/><path d="M2.500 5.500l7-2.500 6 2v8l-6.500 3-6.500-2.500zM2.500 5.500l6.500 2 6.500-2.500M9 7.500v8.500" fill="none" stroke="#d8d8d8" stroke-width="1.100" stroke-linejoin="round"/></svg>
<svg style="left:522px;top:171px;overflow:visible;" width="18" height="18" viewBox="0 0 18 18"><rect x="1" y="1.500" width="16" height="15.500" rx="3" fill="#2c2c2c"/><rect x="6.500" y="3.500" width="8" height="8" fill="none" stroke="#ccc" stroke-width="1.100"/><rect x="3.500" y="7" width="8" height="8" fill="none" stroke="#ccc" stroke-width="1.100"/></svg>
<svg style="left:542px;top:171px;overflow:visible;" width="18" height="18" viewBox="0 0 18 18"><rect x="1" y="1.500" width="16" height="15.500" rx="3" fill="#2c2c2c"/><path d="M5.500 9.500l7-4M5.500 9.500l7 4" stroke="#e8e8e8" stroke-width="1.400"/><circle cx="5.500" cy="9.500" r="2.200" fill="#e8e8e8"/><circle cx="13" cy="5" r="2.200" fill="#e8e8e8"/><circle cx="13" cy="14" r="2.200" fill="#e8e8e8"/></svg>
<svg style="left:56px;top:856px;" width="36" height="36" viewBox="0 0 36 36"><path d="M16 31V17" stroke="#00d000" stroke-width="1"/><path d="M16 31l13 3" stroke="#d00000" stroke-width="1"/><path d="M16 31l-11 4" stroke="#0000e0" stroke-width="1"/><text x="12.500" y="11.500" font-family="Liberation Sans,sans-serif" font-size="12" font-weight="bold" fill="#00e000">y</text><text x="24" y="29" font-family="Liberation Sans,sans-serif" font-size="11" font-weight="bold" fill="#e00000">x</text><text x="3" y="29" font-family="Liberation Sans,sans-serif" font-size="11" font-weight="bold" fill="#0000ff">z</text></svg>
<span class="t" style="left:722px;top:893px;font-size:11px;line-height:11px;color:#045616;letter-spacing:0.606px;font-weight:bold;">persp</span>
<div style="left:1445px;top:152px;width:3px;height:758px;background-image:linear-gradient(180deg,#6a6a6a 0 2px,transparent 2px 5px),linear-gradient(180deg,#343434 0 2px,transparent 2px 5px);background-size:2px 5px,2px 5px;background-position:1px 1px,0 0;background-repeat:repeat-y;"></div>
<div style="left:1123px;top:162px;width:324px;height:375px;border-radius:7px;border:1px solid #1c2228;background:linear-gradient(180deg,#b4c0cc 0,#98a6b6 30px,#bcc8d4 90px,#d4dde6 140px,#8496ac 165px,#5a7492 210px,#4c6886 300px,#486482 100%);box-shadow:inset 0 0 0 1px rgba(255,255,255,.8),2px 3px 6px rgba(0,0,0,.45);overflow:hidden;"><div style="left:0;top:0;width:324px;height:28px;background:linear-gradient(90deg,#c7d0da 0,#e6ebf0 40px,#cfd6de 90px,#8f9aa6 130px,#69737f 170px,#5b6571 205px,#77828e 230px,#aab4bf 260px,#c6cdd6 100%);"></div><div style="left:0;top:0;width:324px;height:28px;background:linear-gradient(180deg,rgba(255,255,255,.45),rgba(255,255,255,0) 50%,rgba(255,255,255,.15));"></div><div style="left:316px;top:20px;width:8px;height:140px;background:linear-gradient(180deg,#e0e6ec,#c8d2dc 60%,rgba(200,210,220,0));"></div></div>
<svg style="left:1132px;top:168px;" width="13" height="16" viewBox="0 0 13 16"><rect width="13" height="16" fill="#262c30"/><path d="M4 13C3 8 4.5 4 7 2.5c3 2 3.5 6 2 10.5M6 13c0-4 .5-7 1.500-9.500M8 13c1-3 .5-7-.5-10" stroke="#d8e0e0" stroke-width="1" fill="none"/></svg>
<span class="t" style="left:1151px;top:170px;font-size:12px;line-height:12px;color:#000;letter-spacing:0.248px;text-shadow:0 0 6px #fff,0 0 6px #fff,0 0 3px #fff;">Outliner</span>
<div style="left:1339px;top:162px;width:101px;height:19px;border:1px solid #353d47;border-top:none;border-radius:0 0 5px 5px;background:linear-gradient(180deg,#c9d2dc 0,#aab5c2 45%,#8996a6 50%,#a9b6c5 100%);box-shadow:0 0 0 1px rgba(255,255,255,.55);overflow:hidden;"><div style="left:54px;top:0;width:46px;height:19px;background:linear-gradient(180deg,#e9a99b 0,#d6715d 45%,#c43a22 50%,#d4583c 90%,#e08060 100%);border-left:1px solid #5a2a22;"></div><div style="left:27px;top:0;width:1px;height:19px;background:#4a5664;"></div></div>
<svg style="left:1346px;top:170px;" width="14" height="6" viewBox="0 0 14 6"><rect x="0.5" y="0.5" width="11" height="4" fill="#fff" stroke="#444" stroke-width="1"/></svg>
<svg style="left:1373px;top:166px;" width="12" height="11" viewBox="0 0 12 11"><rect x="0.5" y="0.5" width="11" height="9" fill="#fff" stroke="#444" stroke-width="1"/><rect x="3.5" y="3.500" width="5" height="3" fill="#8996a6" stroke="#444" stroke-width="1"/></svg>
<span class="t" style="left:1410px;top:163px;font-size:15px;line-height:15px;color:#fff;font-weight:bold;text-shadow:0 0 1px #333,0 0 2px #333;transform:scaleX(1.35);transform-origin:left;">x</span>
<div style="left:1129px;top:190px;width:312px;height:340px;background:#444;border:1px solid #2b3036;box-shadow:0 0 0 1px rgba(255,255,255,.7);"></div>
<div style="left:1131px;top:192px;width:308px;height:1px;background:#2e2e2e;"></div>
<span class="t" style="left:1139px;top:197px;font-size:11px;line-height:11px;color:#cccccc;letter-spacing:-0.152px;">Display</span>
<span class="t" style="left:1188px;top:197px;font-size:11px;line-height:11px;color:#cccccc;letter-spacing:-0.383px;">Show</span>
<span class="t" style="left:1229px;top:197px;font-size:11px;line-height:11px;color:#cccccc;letter-spacing:-0.156px;">Help</span>
<svg style="left:1135px;top:216px;" width="16" height="17" viewBox="0 0 16 17"><g fill="#505050" stroke="#5e5e5e" stroke-width=".6"><path d="M1 1l5 3-5 3zM10 1l5 3-5 3zM1 10l5 3-5 3zM10 10l5 3-5 3z"/><path d="M7 4h3M7 13h3M3 7v3M12 7v3" /></g></svg>
<div class="fld" style="left:1157px;top:215px;width:280px;height:18px;"></div>
<div style="left:1132px;top:239px;width:288px;height:263px;background:#2b2b2b;"></div>
<div style="left:1135px;top:244px;width:12px;height:11px;border:1px solid #ddd;background:#1a1a1a;box-shadow:1px 1px 0 #000;"></div>
<div style="left:1137px;top:249px;width:8px;height:1px;background:#eee;"></div>
<span class="t" style="left:1205.5px;top:244px;font-size:11px;line-height:11px;color:#d8d8d8;letter-spacing:-0.237px;">Wash_Basin</span>
<span class="t" style="left:1225.5px;top:264px;font-size:11px;line-height:11px;color:#d8d8d8;letter-spacing:-0.073px;">part_sink</span>
<span class="t" style="left:1225.5px;top:284px;font-size:11px;line-height:11px;color:#d8d8d8;letter-spacing:-0.175px;">mixer</span>
<span class="t" style="left:1225.5px;top:304px;font-size:11px;line-height:11px;color:#d8d8d8;letter-spacing:-0.266px;">sink</span>
<span class="t" style="left:1205.5px;top:324px;font-size:11px;line-height:11px;color:#6e6e6e;letter-spacing:-0.106px;">persp</span>
<span class="t" style="left:1205.5px;top:344px;font-size:11px;line-height:11px;color:#6e6e6e;letter-spacing:0.229px;">top</span>
<span class="t" style="left:1205.5px;top:364px;font-size:11px;line-height:11px;color:#6e6e6e;letter-spacing:0.394px;">front</span>
<span class="t" style="left:1205.5px;top:384px;font-size:11px;line-height:11px;color:#6e6e6e;letter-spacing:-0.297px;">side</span>
<span class="t" style="left:1205.5px;top:404px;font-size:11px;line-height:11px;color:#d8d8d8;letter-spacing:-0.031px;">defaultLightSet</span>
<span class="t" style="left:1205.5px;top:424px;font-size:11px;line-height:11px;color:#d8d8d8;letter-spacing:0.037px;">defaultObjectSet</span>
<svg style="left:1190px;top:240px;" width="40" height="75" viewBox="0 0 40 75"><g stroke="#ddd" fill="none" stroke-width="1"><path d="M8.500 12v57.500h17M8.500 29.500h17M8.500 49.500h17"/><circle cx="8.500" cy="9.500" r="2.200" fill="#2b2b2b"/><circle cx="28" cy="29.500" r="2.200" fill="#2b2b2b"/><circle cx="28" cy="49.500" r="2.200" fill="#2b2b2b"/><circle cx="28" cy="69.500" r="2.200" fill="#2b2b2b"/></g></svg>
<svg style="left:1176px;top:241px;overflow:visible;" width="20" height="16" viewBox="0 0 20 16"><path d="M7 1.500h11l-5.500 13h-11z" fill="url(#gGray)" stroke="#111" stroke-width="1"/><path d="M0 7h9" stroke="#d82028" stroke-width="1.200"/><path d="M8 4l5.500 3-5.500 3z" fill="#d82028"/></svg>
<svg style="left:1175px;top:262px;overflow:visible;" width="20" height="14" viewBox="0 0 20 14"><path d="M1 6.500l9-5.500 9 6-9 6z" fill="#e4e4e4" stroke="#111" stroke-width=".8"/><path d="M5.500 3.800l9 6M14.500 4l-9 5.500M10 1v12M1 6.500h18" stroke="#222" stroke-width=".9"/><path d="M10 1l4.500 3-4.500 2.800zM5.500 9.500l4.500-2.700v6zM14.500 9.800l4.500-3.300-9 .3z" fill="#9a9a9a" opacity=".7"/></svg>
<svg style="left:1175px;top:282px;overflow:visible;" width="20" height="14" viewBox="0 0 20 14"><path d="M1 6.500l9-5.500 9 6-9 6z" fill="#e4e4e4" stroke="#111" stroke-width=".8"/><path d="M5.500 3.800l9 6M14.500 4l-9 5.500M10 1v12M1 6.500h18" stroke="#222" stroke-width=".9"/><path d="M10 1l4.500 3-4.500 2.800zM5.500 9.500l4.500-2.700v6zM14.500 9.800l4.500-3.300-9 .3z" fill="#9a9a9a" opacity=".7"/></svg>
<svg style="left:1175px;top:302px;overflow:visible;" width="20" height="14" viewBox="0 0 20 14"><path d="M1 6.500l9-5.500 9 6-9 6z" fill="#e4e4e4" stroke="#111" stroke-width=".8"/><path d="M5.500 3.800l9 6M14.500 4l-9 5.500M10 1v12M1 6.500h18" stroke="#222" stroke-width=".9"/><path d="M10 1l4.500 3-4.500 2.800zM5.500 9.500l4.500-2.700v6zM14.500 9.800l4.500-3.300-9 .3z" fill="#9a9a9a" opacity=".7"/></svg>
<svg style="left:1176px;top:321px;overflow:visible;" width="18" height="16" viewBox="0 0 18 16"><g transform="translate(.7,.8) scale(.98)"><circle cx="4.300" cy="4.800" r="3.500" fill="#8a8a8a" stroke="#f0f0f0" stroke-width="1.300"/><circle cx="4.300" cy="4.800" r="2.200" fill="none" stroke="#d0d0d0" stroke-width=".6"/><ellipse cx="4.500" cy="5" rx=".9" ry="1.300" fill="#000"/><circle cx="10.700" cy="3.800" r="2.900" fill="#8a8a8a" stroke="#f0f0f0" stroke-width="1.200"/><ellipse cx="10.800" cy="3.800" rx=".8" ry="1" fill="#000"/><path d="M4.500 10.500l7-2.300 1.300 3.800-6.500 3.200c-1.500.5-2.500-.5-2.800-1.500z" fill="#050505" stroke="#9a9a9a" stroke-width=".5"/><path d="M5.800 11.800l4.200-1.500" stroke="#d8d8d8" stroke-width=".9"/><ellipse cx="14.300" cy="8.700" rx="2.300" ry="2" fill="#050505"/><path d="M12.600 9.600l1.600-.5" stroke="#aaa" stroke-width=".7"/><path d="M12.500 11.300h3.500" stroke="#9a9a9a" stroke-width=".6"/></g></svg>
<svg style="left:1176px;top:341px;overflow:visible;" width="18" height="16" viewBox="0 0 18 16"><g transform="translate(.7,.8) scale(.98)"><circle cx="4.300" cy="4.800" r="3.500" fill="#8a8a8a" stroke="#f0f0f0" stroke-width="1.300"/><circle cx="4.300" cy="4.800" r="2.200" fill="none" stroke="#d0d0d0" stroke-width=".6"/><ellipse cx="4.500" cy="5" rx=".9" ry="1.300" fill="#000"/><circle cx="10.700" cy="3.800" r="2.900" fill="#8a8a8a" stroke="#f0f0f0" stroke-width="1.200"/><ellipse cx="10.800" cy="3.800" rx=".8" ry="1" fill="#000"/><path d="M4.500 10.500l7-2.300 1.300 3.800-6.500 3.200c-1.500.5-2.500-.5-2.800-1.500z" fill="#050505" stroke="#9a9a9a" stroke-width=".5"/><path d="M5.800 11.800l4.200-1.500" stroke="#d8d8d8" stroke-width=".9"/><ellipse cx="14.300" cy="8.700" rx="2.300" ry="2" fill="#050505"/><path d="M12.600 9.600l1.600-.5" stroke="#aaa" stroke-width=".7"/><path d="M12.500 11.300h3.500" stroke="#9a9a9a" stroke-width=".6"/></g></svg>
<svg style="left:1176px;top:361px;overflow:visible;" width="18" height="16" viewBox="0 0 18 16"><g transform="translate(.7,.8) scale(.98)"><circle cx="4.300" cy="4.800" r="3.500" fill="#8a8a8a" stroke="#f0f0f0" stroke-width="1.300"/><circle cx="4.300" cy="4.800" r="2.200" fill="none" stroke="#d0d0d0" stroke-width=".6"/><ellipse cx="4.500" cy="5" rx=".9" ry="1.300" fill="#000"/><circle cx="10.700" cy="3.800" r="2.900" fill="#8a8a8a" stroke="#f0f0f0" stroke-width="1.200"/><ellipse cx="10.800" cy="3.800" rx=".8" ry="1" fill="#000"/><path d="M4.500 10.500l7-2.300 1.300 3.800-6.500 3.200c-1.500.5-2.500-.5-2.800-1.500z" fill="#050505" stroke="#9a9a9a" stroke-width=".5"/><path d="M5.800 11.800l4.200-1.500" stroke="#d8d8d8" stroke-width=".9"/><ellipse cx="14.300" cy="8.700" rx="2.300" ry="2" fill="#050505"/><path d="M12.600 9.600l1.600-.5" stroke="#aaa" stroke-width=".7"/><path d="M12.500 11.300h3.500" stroke="#9a9a9a" stroke-width=".6"/></g></svg>
<svg style="left:1176px;top:381px;overflow:visible;" width="18" height="16" viewBox="0 0 18 16"><g transform="translate(.7,.8) scale(.98)"><circle cx="4.300" cy="4.800" r="3.500" fill="#8a8a8a" stroke="#f0f0f0" stroke-width="1.300"/><circle cx="4.300" cy="4.800" r="2.200" fill="none" stroke="#d0d0d0" stroke-width=".6"/><ellipse cx="4.500" cy="5" rx=".9" ry="1.300" fill="#000"/><circle cx="10.700" cy="3.800" r="2.900" fill="#8a8a8a" stroke="#f0f0f0" stroke-width="1.200"/><ellipse cx="10.800" cy="3.800" rx=".8" ry="1" fill="#000"/><path d="M4.500 10.500l7-2.300 1.300 3.800-6.500 3.200c-1.500.5-2.500-.5-2.800-1.500z" fill="#050505" stroke="#9a9a9a" stroke-width=".5"/><path d="M5.800 11.800l4.200-1.500" stroke="#d8d8d8" stroke-width=".9"/><ellipse cx="14.300" cy="8.700" rx="2.300" ry="2" fill="#050505"/><path d="M12.600 9.600l1.600-.5" stroke="#aaa" stroke-width=".7"/><path d="M12.500 11.300h3.500" stroke="#9a9a9a" stroke-width=".6"/></g></svg>
<svg style="left:1176px;top:400px;overflow:visible;" width="18" height="18" viewBox="0 0 18 18"><circle cx="9" cy="9" r="7.800" fill="#1c1c1c" stroke="#e4e4e4" stroke-width="1.100"/><path d="M9 4.500h5.500v8H9z" fill="#4a88c8"/><ellipse cx="11.700" cy="4.700" rx="2.800" ry="1.200" fill="#9cc8f0"/><circle cx="6.500" cy="11" r="3.600" fill="url(#gGoldBall)"/></svg>
<svg style="left:1176px;top:420px;overflow:visible;" width="18" height="18" viewBox="0 0 18 18"><circle cx="9" cy="9" r="7.800" fill="#1c1c1c" stroke="#e4e4e4" stroke-width="1.100"/><path d="M9 4.500h5.500v8H9z" fill="#4a88c8"/><ellipse cx="11.700" cy="4.700" rx="2.800" ry="1.200" fill="#9cc8f0"/><circle cx="6.500" cy="11" r="3.600" fill="url(#gGoldBall)"/></svg>
<div style="left:1421px;top:239px;width:16px;height:263px;background:#3a3a3a;"></div>
<div class="btn" style="left:1422px;top:240px;width:14px;height:13px;"></div>
<svg style="left:1425px;top:244px;" width="8" height="5" viewBox="0 0 8 5"><path d="M0 5h8l-4-5z" fill="#ddd"/></svg>
<div style="left:1422px;top:257px;width:14px;height:213px;background:#444;border:1px solid #5e5e5e;border-radius:2px;"></div>
<svg style="left:1425px;top:356px;" width="8" height="16" viewBox="0 0 8 16"><g fill="#6a6a6a"><rect x="0" y="0" width="1" height="1"/><rect x="3" y="0" width="1" height="1"/><rect x="6" y="0" width="1" height="1"/><rect x="0" y="3" width="1" height="1"/><rect x="3" y="3" width="1" height="1"/><rect x="6" y="3" width="1" height="1"/><rect x="0" y="6" width="1" height="1"/><rect x="3" y="6" width="1" height="1"/><rect x="6" y="6" width="1" height="1"/><rect x="0" y="9" width="1" height="1"/><rect x="3" y="9" width="1" height="1"/><rect x="6" y="9" width="1" height="1"/><rect x="0" y="12" width="1" height="1"/><rect x="3" y="12" width="1" height="1"/><rect x="6" y="12" width="1" height="1"/></g></svg>
<div class="btn" style="left:1422px;top:473px;width:14px;height:13px;"></div>
<svg style="left:1425px;top:477px;" width="8" height="5" viewBox="0 0 8 5"><path d="M0 5h8l-4-5z" fill="#ddd"/></svg>
<div class="btn" style="left:1422px;top:488px;width:14px;height:13px;"></div>
<svg style="left:1425px;top:493px;" width="8" height="5" viewBox="0 0 8 5"><path d="M0 0h8l-4 5z" fill="#ddd"/></svg>
<div style="left:1132px;top:505px;width:288px;height:16px;background:#3a3a3a;"></div>
<div class="btn" style="left:1134px;top:507px;width:13px;height:13px;"></div>
<svg style="left:1138px;top:510px;" width="5" height="8" viewBox="0 0 5 8"><path d="M5 0v8l-5-4z" fill="#ddd"/></svg>
<div style="left:1150px;top:507px;width:237px;height:13px;background:#444;border:1px solid #5e5e5e;border-radius:2px;"></div>
<div style="left:1259px;top:510px;width:20px;height:7px;background-image:radial-gradient(#6a6a6a 0.700px,transparent 0.800px);background-size:3px 3px;"></div>
<div class="btn" style="left:1389px;top:507px;width:13px;height:13px;"></div>
<svg style="left:1393px;top:510px;" width="5" height="8" viewBox="0 0 5 8"><path d="M5 0v8l-5-4z" fill="#ddd"/></svg>
<div class="btn" style="left:1405px;top:507px;width:13px;height:13px;"></div>
<svg style="left:1409px;top:510px;" width="5" height="8" viewBox="0 0 5 8"><path d="M0 0v8l5-4z" fill="#ddd"/></svg>
<div class="griph" style="left:1234px;top:522px;width:100px;height:5px;"></div>
<div class="griph" style="left:1453px;top:156px;width:137px;height:6px;"></div>
<div class="griph" style="left:1728px;top:156px;width:139px;height:6px;"></div>
<span class="t" style="left:1603px;top:153px;font-size:11px;line-height:11px;color:#cccccc;letter-spacing:-0.791px;">Channel Box / Layer Editor</span>
<div style="left:1869px;top:152px;width:12px;height:12px;background:#585858;border-radius:3px;box-shadow:0 0 0 1px #262626;"></div>
<svg style="left:1871px;top:153px;" width="9" height="10" viewBox="0 0 9 10"><path d="M3 3V1h5.500v5H7" fill="none" stroke="#000" stroke-width="1.600"/><rect x="0.800" y="3.800" width="5.500" height="5" fill="#585858" stroke="#000" stroke-width="1.500"/></svg>
<div style="left:1884px;top:152px;width:12px;height:12px;background:#585858;border-radius:3px;box-shadow:0 0 0 1px #262626;"></div>
<svg style="left:1886px;top:154px;" width="9" height="9" viewBox="0 0 9 9"><path d="M.5 .5l7.500 7.500M8 .5l-7.500 7.500" stroke="#000" stroke-width="1.500"/></svg>
<svg style="left:1836px;top:170px;overflow:visible;" width="18" height="18" viewBox="0 0 18 18"><path d="M9 9.500V4M9 9.500H3.500M9 9.500l4 3.500" stroke="#ccc" stroke-width="1.400"/><path d="M9 10V6M9 10l3 2.500" stroke="#222" stroke-width=".8"/><path d="M6.500 6l2.500-5.500 2.500 5.500z" fill="#38c028"/><path d="M5.500 7l-5.500 2.500 5.500 2.500z" fill="#2030d0"/><path d="M11.500 14.500l5.500 1-1.500-5.500z" fill="#e02830"/></svg>
<svg style="left:1857px;top:170px;overflow:visible;" width="16" height="16" viewBox="0 0 16 16"><circle cx="8" cy="8" r="6.800" fill="#4c4c4c" stroke="#c4c4c4" stroke-width="1.200"/><path d="M8 1.200A6.800 6.800 0 0 0 3.500 13.200L8 8.500z" fill="#8e8e8e"/><path d="M8 1.500v7l-4.500 4.500" stroke="#c4c4c4" stroke-width="1.100" fill="none"/></svg>
<svg style="left:1877px;top:171px;overflow:visible;" width="16" height="16" viewBox="0 0 16 16"><path d="M1.500 14.500l10-10" stroke="#a8a8a8" stroke-width="1.800"/><path d="M15 1l-1.500 7-5.500-5.500z" fill="#a8a8a8"/></svg>
<span class="t" style="left:1458.5px;top:195px;font-size:11px;line-height:11px;color:#cccccc;letter-spacing:-0.312px;">Channels</span>
<span class="t" style="left:1517.3px;top:195px;font-size:11px;line-height:11px;color:#cccccc;letter-spacing:0.008px;">Edit</span>
<span class="t" style="left:1550.5px;top:195px;font-size:11px;line-height:11px;color:#cccccc;letter-spacing:0.198px;">Object</span>
<span class="t" style="left:1597.5px;top:195px;font-size:11px;line-height:11px;color:#cccccc;letter-spacing:-0.383px;">Show</span>
<div style="left:1452px;top:212px;width:443px;height:478px;background:#2b2b2b;border:1px solid #555;box-shadow:inset 0 0 0 1px #3a3a3a;"></div>
<div class="griph" style="left:1600px;top:693px;width:143px;height:6px;"></div>
<div style="left:1899px;top:150px;width:22px;height:152px;background:linear-gradient(90deg,#666 0,#626262 16px,#4a4a4a 18px,#3e3e3e 21px);border:1px solid #707070;border-right:none;border-radius:4px 0 0 4px;"></div>
<span class="t" style="left:0px;top:-9px;font-size:11px;line-height:11px;color:#d4d4d4;letter-spacing:-0.137px;left:1913px;top:162px;transform:rotate(90deg);transform-origin:0 0;">Channel Box / Layer Editor</span>
<div style="left:1899px;top:303px;width:18px;height:98px;background:#444;border:1px solid #2e2e2e;border-left:1px solid #2e2e2e;border-radius:0 4px 4px 0;box-shadow:inset -1px 0 0 #555;"></div>
<span class="t" style="left:0px;top:-9px;font-size:11px;line-height:11px;color:#d4d4d4;letter-spacing:-0.051px;left:1913px;top:316px;transform:rotate(90deg);transform-origin:0 0;">Attribute Editor</span>
<div style="left:1452px;top:704px;width:59px;height:21px;background:#5d5d5d;border:1px solid #2e2e2e;border-bottom:none;border-radius:3px 3px 0 0;box-shadow:inset 1px 1px 0 #6e6e6e;"></div>
<div style="left:1511px;top:707px;width:61px;height:17px;border:1px solid #2e2e2e;border-bottom:none;border-radius:2px 2px 0 0;box-shadow:inset 1px 1px 0 #505050;"></div>
<div style="left:1572px;top:707px;width:47px;height:17px;border:1px solid #2e2e2e;border-bottom:none;border-radius:2px 2px 0 0;box-shadow:inset 1px 1px 0 #505050;"></div>
<span class="t" style="left:1463px;top:709px;font-size:11px;line-height:11px;color:#cccccc;letter-spacing:-0.152px;">Display</span>
<span class="t" style="left:1523px;top:710px;font-size:11px;line-height:11px;color:#cccccc;letter-spacing:-0.182px;">Render</span>
<span class="t" style="left:1584.5px;top:710px;font-size:11px;line-height:11px;color:#cccccc;letter-spacing:-0.516px;">Anim</span>
<div style="left:1452px;top:724px;width:444px;height:187px;border:1px solid #2e2e2e;border-radius:0 3px 3px 3px;box-shadow:0 0 0 1px #4e4e4e;"></div>
<div style="left:1453px;top:724px;width:57px;height:1px;background:#5d5d5d;"></div>
<span class="t" style="left:1461px;top:730px;font-size:11px;line-height:11px;color:#cccccc;letter-spacing:-0.005px;">Layers</span>
<span class="t" style="left:1508.5px;top:730px;font-size:11px;line-height:11px;color:#cccccc;letter-spacing:-0.062px;">Options</span>
<span class="t" style="left:1560px;top:730px;font-size:11px;line-height:11px;color:#cccccc;letter-spacing:-0.156px;">Help</span>
<svg style="left:1792px;top:749px;overflow:visible;" width="20" height="18" viewBox="0 0 20 18"><g transform="translate(-1.500,-2.500) scale(1.200)"><path d="M7 12.8l6.500-2.800 6 2.300-6.500 3z" fill="#f8f8f8" stroke="#222" stroke-width=".7"/><path d="M7 9.4l6.500-2.800 6 2.300-6.500 3z" fill="#f8f8f8" stroke="#222" stroke-width=".7"/><path d="M7 6.0l6.500-2.800 6 2.300-6.500 3z" fill="#8e8e8e" stroke="#222" stroke-width=".7"/></g><path d="M4.500 17V4" stroke="#d82030" stroke-width="1.300"/><path d="M1.500 7l3-6.500 3 6.500z" fill="#d82030"/></svg>
<svg style="left:1817px;top:749px;overflow:visible;" width="20" height="18" viewBox="0 0 20 18"><g transform="translate(-1.500,-2.500) scale(1.200)"><path d="M7 12.8l6.500-2.800 6 2.300-6.500 3z" fill="#8e8e8e" stroke="#222" stroke-width=".7"/><path d="M7 9.4l6.500-2.800 6 2.300-6.500 3z" fill="#f8f8f8" stroke="#222" stroke-width=".7"/><path d="M7 6.0l6.500-2.800 6 2.300-6.500 3z" fill="#f8f8f8" stroke="#222" stroke-width=".7"/></g><path d="M4.500 0v13" stroke="#d82030" stroke-width="1.300"/><path d="M1.500 10.500l3 6.500 3-6.500z" fill="#d82030"/></svg>
<svg style="left:1845px;top:747px;overflow:visible;" width="20" height="20" viewBox="0 0 20 20"><path d="M.5 13l9-4.500 9 3.500-9.500 6.500z" fill="#ececec" stroke="#222" stroke-width=".8"/><g transform="translate(14.5,7.5)"><path d="M0-5.500L1.100-1.600 4-4 1.600-1.100 5.500 0 1.600 1.100 4 4 1.100 1.600 0 5.500-1.100 1.600-4 4-1.600 1.100-5.500 0-1.600-1.100-4-4-1.100-1.600z" fill="#f08020" stroke="#8a3808" stroke-width=".4"/><circle r="2" fill="#fff4c0"/></g></svg>
<svg style="left:1869px;top:747px;overflow:visible;" width="20" height="20" viewBox="0 0 20 20"><path d="M.5 13l9-4.500 9 3.500-9.500 6.500z" fill="#ececec" stroke="#222" stroke-width=".8"/><circle cx="7.500" cy="11.200" r="3.500" fill="url(#gBall)"/><g transform="translate(14.5,7.5)"><path d="M0-5.500L1.100-1.600 4-4 1.600-1.100 5.500 0 1.600 1.100 4 4 1.100 1.600 0 5.500-1.100 1.600-4 4-1.600 1.100-5.500 0-1.600-1.100-4-4-1.100-1.600z" fill="#f08020" stroke="#8a3808" stroke-width=".4"/><circle r="2" fill="#fff4c0"/></g></svg>
<div style="left:1455px;top:772px;width:435px;height:135px;background:#2b2b2b;border:1px solid #3a3a3a;border-radius:2px;"></div>
<div style="left:1461px;top:779px;width:20px;height:13px;background:#2b2b2b;border:1px solid #1c1c1c;border-radius:3px;box-shadow:0 0 0 1px #3e3e3e;"></div>
<span class="t" style="left:1467.5px;top:780px;font-size:11px;line-height:11px;color:#e0e0e0;letter-spacing:-0.344px;">V</span>
<div style="left:1484px;top:779px;width:20px;height:13px;background:#2b2b2b;border:1px solid #1c1c1c;border-radius:3px;box-shadow:0 0 0 1px #3e3e3e;"></div>
<svg style="left:1507px;top:778px;" width="17" height="15" viewBox="0 0 17 15"><path d="M0.500 0v14" stroke="#444"/><path d="M1.500 13.500L15 1v13.500" stroke="#ddd" fill="none" stroke-width="1"/></svg>
<span class="t" style="left:1525.7px;top:780px;font-size:11px;line-height:11px;color:#eeeeee;letter-spacing:-0.194px;">Wash_Basin_with_Full_Pedestal_layer1</span>
<div style="left:0px;top:914px;width:1920px;height:1px;background:#3a3a3a;"></div>
<div class="grip" style="left:6px;top:919px;width:6px;height:28px;"></div>
<div style="left:13px;top:917px;width:1607px;height:32px;background:#757575;border:1px solid #2e2e2e;border-bottom:1px solid #585858;"></div>
<div style="left:14px;top:918px;width:8px;height:30px;background:#828282;"></div>
<div style="left:22px;top:918px;width:67px;height:30px;background:#5c5c5c;"></div>
<div style="left:21px;top:932px;width:2px;height:16px;background:#0a0a0a;"></div>
<span class="t" style="left:36.5px;top:919px;font-size:10px;line-height:10px;color:#0a0a0a;letter-spacing:-1.062px;">1</span>
<div style="left:87px;top:932px;width:2px;height:16px;background:#0a0a0a;"></div>
<span class="t" style="left:102.5px;top:919px;font-size:10px;line-height:10px;color:#0a0a0a;letter-spacing:-1.062px;">2</span>
<div style="left:153px;top:932px;width:2px;height:16px;background:#0a0a0a;"></div>
<span class="t" style="left:168.5px;top:919px;font-size:10px;line-height:10px;color:#0a0a0a;letter-spacing:-1.062px;">3</span>
<div style="left:219px;top:932px;width:2px;height:16px;background:#0a0a0a;"></div>
<span class="t" style="left:234.5px;top:919px;font-size:10px;line-height:10px;color:#0a0a0a;letter-spacing:-1.062px;">4</span>
<div style="left:285px;top:932px;width:2px;height:16px;background:#0a0a0a;"></div>
<span class="t" style="left:300.5px;top:919px;font-size:10px;line-height:10px;color:#0a0a0a;letter-spacing:-1.062px;">5</span>
<div style="left:351px;top:932px;width:2px;height:16px;background:#0a0a0a;"></div>
<span class="t" style="left:366.5px;top:919px;font-size:10px;line-height:10px;color:#0a0a0a;letter-spacing:-1.062px;">6</span>
<div style="left:417px;top:932px;width:2px;height:16px;background:#0a0a0a;"></div>
<span class="t" style="left:432.5px;top:919px;font-size:10px;line-height:10px;color:#0a0a0a;letter-spacing:-1.062px;">7</span>
<div style="left:483px;top:932px;width:2px;height:16px;background:#0a0a0a;"></div>
<span class="t" style="left:498.5px;top:919px;font-size:10px;line-height:10px;color:#0a0a0a;letter-spacing:-1.062px;">8</span>
<div style="left:549px;top:932px;width:2px;height:16px;background:#0a0a0a;"></div>
<span class="t" style="left:564.5px;top:919px;font-size:10px;line-height:10px;color:#0a0a0a;letter-spacing:-1.062px;">9</span>
<div style="left:615px;top:932px;width:2px;height:16px;background:#0a0a0a;"></div>
<span class="t" style="left:630.5px;top:919px;font-size:10px;line-height:10px;color:#0a0a0a;letter-spacing:-0.312px;">10</span>
<div style="left:681px;top:932px;width:2px;height:16px;background:#0a0a0a;"></div>
<span class="t" style="left:696.5px;top:919px;font-size:10px;line-height:10px;color:#0a0a0a;letter-spacing:0.055px;">11</span>
<div style="left:747px;top:932px;width:2px;height:16px;background:#0a0a0a;"></div>
<span class="t" style="left:762.5px;top:919px;font-size:10px;line-height:10px;color:#0a0a0a;letter-spacing:-0.312px;">12</span>
<div style="left:813px;top:932px;width:2px;height:16px;background:#0a0a0a;"></div>
<span class="t" style="left:828.5px;top:919px;font-size:10px;line-height:10px;color:#0a0a0a;letter-spacing:-0.312px;">13</span>
<div style="left:879px;top:932px;width:2px;height:16px;background:#0a0a0a;"></div>
<span class="t" style="left:894.5px;top:919px;font-size:10px;line-height:10px;color:#0a0a0a;letter-spacing:-0.312px;">14</span>
<div style="left:945px;top:932px;width:2px;height:16px;background:#0a0a0a;"></div>
<span class="t" style="left:960.5px;top:919px;font-size:10px;line-height:10px;color:#0a0a0a;letter-spacing:-0.312px;">15</span>
<div style="left:1011px;top:932px;width:2px;height:16px;background:#0a0a0a;"></div>
<span class="t" style="left:1026.5px;top:919px;font-size:10px;line-height:10px;color:#0a0a0a;letter-spacing:-0.312px;">16</span>
<div style="left:1077px;top:932px;width:2px;height:16px;background:#0a0a0a;"></div>
<span class="t" style="left:1092.5px;top:919px;font-size:10px;line-height:10px;color:#0a0a0a;letter-spacing:-0.312px;">17</span>
<div style="left:1143px;top:932px;width:2px;height:16px;background:#0a0a0a;"></div>
<span class="t" style="left:1158.5px;top:919px;font-size:10px;line-height:10px;color:#0a0a0a;letter-spacing:-0.312px;">18</span>
<div style="left:1209px;top:932px;width:2px;height:16px;background:#0a0a0a;"></div>
<span class="t" style="left:1224.5px;top:919px;font-size:10px;line-height:10px;color:#0a0a0a;letter-spacing:-0.312px;">19</span>
<div style="left:1275px;top:932px;width:2px;height:16px;background:#0a0a0a;"></div>
<span class="t" style="left:1290.5px;top:919px;font-size:10px;line-height:10px;color:#0a0a0a;letter-spacing:-0.312px;">20</span>
<div style="left:1341px;top:932px;width:2px;height:16px;background:#0a0a0a;"></div>
<span class="t" style="left:1356.5px;top:919px;font-size:10px;line-height:10px;color:#0a0a0a;letter-spacing:-0.312px;">21</span>
<div style="left:1407px;top:932px;width:2px;height:16px;background:#0a0a0a;"></div>
<span class="t" style="left:1422.5px;top:919px;font-size:10px;line-height:10px;color:#0a0a0a;letter-spacing:-0.312px;">22</span>
<div style="left:1473px;top:932px;width:2px;height:16px;background:#0a0a0a;"></div>
<span class="t" style="left:1488.5px;top:919px;font-size:10px;line-height:10px;color:#0a0a0a;letter-spacing:-0.312px;">23</span>
<div style="left:1539px;top:932px;width:2px;height:16px;background:#0a0a0a;"></div>
<span class="t" style="left:1554.5px;top:919px;font-size:10px;line-height:10px;color:#0a0a0a;letter-spacing:-0.312px;">24</span>
<span class="t" style="left:36.5px;top:935px;font-size:10px;line-height:10px;color:#fff;letter-spacing:-1.062px;">1</span>
<div class="fld" style="left:1622px;top:923px;width:69px;height:19px;"></div>
<span class="t" style="left:1627px;top:927px;font-size:11px;line-height:11px;color:#cccccc;letter-spacing:-0.359px;">1.00</span>
<svg style="left:1699px;top:927px;overflow:visible;" width="19" height="14" viewBox="0 0 19 14"><defs><linearGradient id="pg1708" x1="0" y1="0" x2="0" y2="1"><stop offset="0" stop-color="#e4e4e4"/><stop offset="1" stop-color="#8c8c8c"/></linearGradient></defs><rect x="1" y="1" width="3" height="12" fill="url(#pg1708)" stroke="#2a2a2a" stroke-width=".6"/><path d="M11 1v12l-6-6zM17 1v12l-6-6z" fill="url(#pg1708)" stroke="#2a2a2a" stroke-width=".6"/></svg>
<svg style="left:1726px;top:927px;overflow:visible;" width="19" height="14" viewBox="0 0 19 14"><defs><linearGradient id="pg1735" x1="0" y1="0" x2="0" y2="1"><stop offset="0" stop-color="#e4e4e4"/><stop offset="1" stop-color="#8c8c8c"/></linearGradient></defs><rect x="2" y="1" width="3" height="12" fill="url(#pg1735)" stroke="#2a2a2a" stroke-width=".6"/><path d="M16 1v12l-10-6z" fill="url(#pg1735)" stroke="#2a2a2a" stroke-width=".6"/></svg>
<svg style="left:1754px;top:927px;overflow:visible;" width="19" height="14" viewBox="0 0 19 14"><defs><linearGradient id="pg1763" x1="0" y1="0" x2="0" y2="1"><stop offset="0" stop-color="#e4e4e4"/><stop offset="1" stop-color="#8c8c8c"/></linearGradient></defs><rect x="2" y="1" width="3" height="12" fill="url(#pg1763)" stroke="#2a2a2a" stroke-width=".6"/><path d="M17 1v12l-10-6z" fill="url(#pg1763)" stroke="#2a2a2a" stroke-width=".6"/><path d="M3.500 -2v18" stroke="#e02020" stroke-width="1"/></svg>
<svg style="left:1782px;top:927px;overflow:visible;" width="19" height="14" viewBox="0 0 19 14"><defs><linearGradient id="pg1791" x1="0" y1="0" x2="0" y2="1"><stop offset="0" stop-color="#e4e4e4"/><stop offset="1" stop-color="#8c8c8c"/></linearGradient></defs><path d="M15 1v12l-12-6z" fill="url(#pg1791)" stroke="#2a2a2a" stroke-width=".6"/></svg>
<svg style="left:1809px;top:927px;overflow:visible;" width="19" height="14" viewBox="0 0 19 14"><defs><linearGradient id="pg1818" x1="0" y1="0" x2="0" y2="1"><stop offset="0" stop-color="#e4e4e4"/><stop offset="1" stop-color="#8c8c8c"/></linearGradient></defs><path d="M4 1v12l12-6z" fill="url(#pg1818)" stroke="#2a2a2a" stroke-width=".6"/></svg>
<svg style="left:1838px;top:927px;overflow:visible;" width="19" height="14" viewBox="0 0 19 14"><defs><linearGradient id="pg1847" x1="0" y1="0" x2="0" y2="1"><stop offset="0" stop-color="#e4e4e4"/><stop offset="1" stop-color="#8c8c8c"/></linearGradient></defs><rect x="14" y="1" width="3" height="12" fill="url(#pg1847)" stroke="#2a2a2a" stroke-width=".6"/><path d="M2 1v12l10-6z" fill="url(#pg1847)" stroke="#2a2a2a" stroke-width=".6"/><path d="M15.500 -2v18" stroke="#e02020" stroke-width="1"/></svg>
<svg style="left:1866px;top:927px;overflow:visible;" width="19" height="14" viewBox="0 0 19 14"><defs><linearGradient id="pg1875" x1="0" y1="0" x2="0" y2="1"><stop offset="0" stop-color="#e4e4e4"/><stop offset="1" stop-color="#8c8c8c"/></linearGradient></defs><rect x="14" y="1" width="3" height="12" fill="url(#pg1875)" stroke="#2a2a2a" stroke-width=".6"/><path d="M3 1v12l10-6z" fill="url(#pg1875)" stroke="#2a2a2a" stroke-width=".6"/></svg>
<svg style="left:1893px;top:927px;overflow:visible;" width="19" height="14" viewBox="0 0 19 14"><defs><linearGradient id="pg1902" x1="0" y1="0" x2="0" y2="1"><stop offset="0" stop-color="#e4e4e4"/><stop offset="1" stop-color="#8c8c8c"/></linearGradient></defs><rect x="15" y="1" width="3" height="12" fill="url(#pg1902)" stroke="#2a2a2a" stroke-width=".6"/><path d="M2 1v12l6-6zM8 1v12l6-6z" fill="url(#pg1902)" stroke="#2a2a2a" stroke-width=".6"/></svg>
<div style="left:0px;top:951px;width:1920px;height:1px;background:#353535;"></div>
<div style="left:0px;top:952px;width:1920px;height:1px;background:#4c4c4c;"></div>
<div class="grip" style="left:6px;top:957px;width:6px;height:19px;"></div>
<div class="fld" style="left:14px;top:957px;width:68px;height:19px;"></div>
<span class="t" style="left:19px;top:961px;font-size:11px;line-height:11px;color:#cccccc;letter-spacing:-0.359px;">1.00</span>
<div class="fld" style="left:86px;top:957px;width:68px;height:19px;"></div>
<span class="t" style="left:91px;top:961px;font-size:11px;line-height:11px;color:#cccccc;letter-spacing:-0.359px;">1.00</span>
<div style="left:157px;top:956px;width:1327px;height:22px;background:#272727;border-radius:2px;"></div>
<div style="left:165px;top:959px;width:656px;height:17px;background:#6a6a6a;border-bottom:1px solid #555;"></div>
<div style="left:171px;top:962px;width:9px;height:11px;border-right:1px solid #2a2a2a;border-bottom:1px solid #2a2a2a;border-left:1px solid #777;border-top:1px solid #777;"></div>
<div style="left:807px;top:962px;width:9px;height:11px;border-right:1px solid #2a2a2a;border-bottom:1px solid #2a2a2a;border-left:1px solid #777;border-top:1px solid #777;"></div>
<span class="t" style="left:184px;top:962px;font-size:11px;line-height:11px;color:#e8e8e8;letter-spacing:-0.625px;">1</span>
<span class="t" style="left:789px;top:962px;font-size:11px;line-height:11px;color:#e8e8e8;letter-spacing:-0.125px;">24</span>
<div class="fld" style="left:1487px;top:957px;width:68px;height:19px;"></div>
<span class="t" style="left:1491px;top:961px;font-size:11px;line-height:11px;color:#cccccc;letter-spacing:-0.113px;">24.00</span>
<div class="fld" style="left:1559px;top:957px;width:68px;height:19px;"></div>
<span class="t" style="left:1563px;top:961px;font-size:11px;line-height:11px;color:#cccccc;letter-spacing:-0.113px;">48.00</span>
<svg style="left:1632px;top:962px;" width="10" height="7" viewBox="0 0 10 7"><path d="M0.500 0.500h8l-4 5z" fill="#555" stroke="#999"/></svg>
<div class="fld" style="left:1650px;top:957px;width:100px;height:19px;"></div>
<span class="t" style="left:1653px;top:961px;font-size:11px;line-height:11px;color:#cccccc;letter-spacing:-0.244px;">No Anim Layer</span>
<svg style="left:1755px;top:962px;" width="10" height="7" viewBox="0 0 10 7"><path d="M0.500 0.500h8l-4 5z" fill="#555" stroke="#999"/></svg>
<div class="fld" style="left:1773px;top:957px;width:100px;height:19px;"></div>
<span class="t" style="left:1776px;top:961px;font-size:11px;line-height:11px;color:#cccccc;letter-spacing:-0.064px;">No Character Set</span>
<svg style="left:1877px;top:961px;" width="18" height="9" viewBox="0 0 18 9"><ellipse cx="4" cy="4.500" rx="3.500" ry="2.500" fill="none" stroke="#bbb"/><path d="M7.500 4.500h10M13 5v2.500M16 5v2.500" stroke="#bbb" fill="none"/></svg>
<div style="left:0px;top:980px;width:1920px;height:1px;background:#353535;"></div>
<div style="left:0px;top:981px;width:1920px;height:1px;background:#4c4c4c;"></div>
<div class="grip" style="left:6px;top:985px;width:6px;height:22px;"></div>
<span class="t" style="left:24.5px;top:991px;font-size:11px;line-height:11px;color:#cccccc;letter-spacing:-1.375px;">MEL</span>
<div class="fld" style="left:59px;top:985px;width:916px;height:23px;"></div>
<div style="left:983px;top:985px;width:915px;height:23px;background:#000;border-radius:2px;box-shadow:0 0 0 1px #3a3a3a;"></div>
<svg style="left:1901px;top:988px;" width="14" height="14" viewBox="0 0 14 14"><rect x="0.500" y="0.500" width="13" height="13" fill="#ddd" stroke="#eee"/><rect x="1" y="1" width="12" height="2" fill="#4aa0e8"/><rect x="2" y="4.500" width="10" height="3" fill="#555"/><rect x="2" y="8.500" width="10" height="4" fill="#888"/></svg>
<div style="left:0px;top:1011px;width:1920px;height:1px;background:#353535;"></div>
<div style="left:0px;top:1012px;width:1920px;height:1px;background:#4c4c4c;"></div>
<div class="grip" style="left:6px;top:1016px;width:6px;height:20px;"></div>
<div style="left:13px;top:1015px;width:1904px;height:22px;border:1px solid #2e2e2e;box-shadow:0 0 0 1px #4e4e4e;"></div>
<span class="t" style="left:26px;top:1021px;font-size:11px;line-height:11px;color:#cccccc;letter-spacing:-0.423px;">Select Tool: select an object</span>
<svg style="left:1893px;top:936px;" width="28" height="56" viewBox="0 0 28 56"><path d="M6 2h22v52L2 36V6a4 4 0 0 1 4-4z" fill="#fff"/><rect x="6" y="7" width="22" height="20" fill="#1e88e5"/><circle cx="17" cy="17" r="8" fill="#fff"/><path d="M10.500 17l4-3v2h5v-2l4 3-4 3v-2h-5v2z" fill="#1e88e5"/></svg>
</div></body></html>
